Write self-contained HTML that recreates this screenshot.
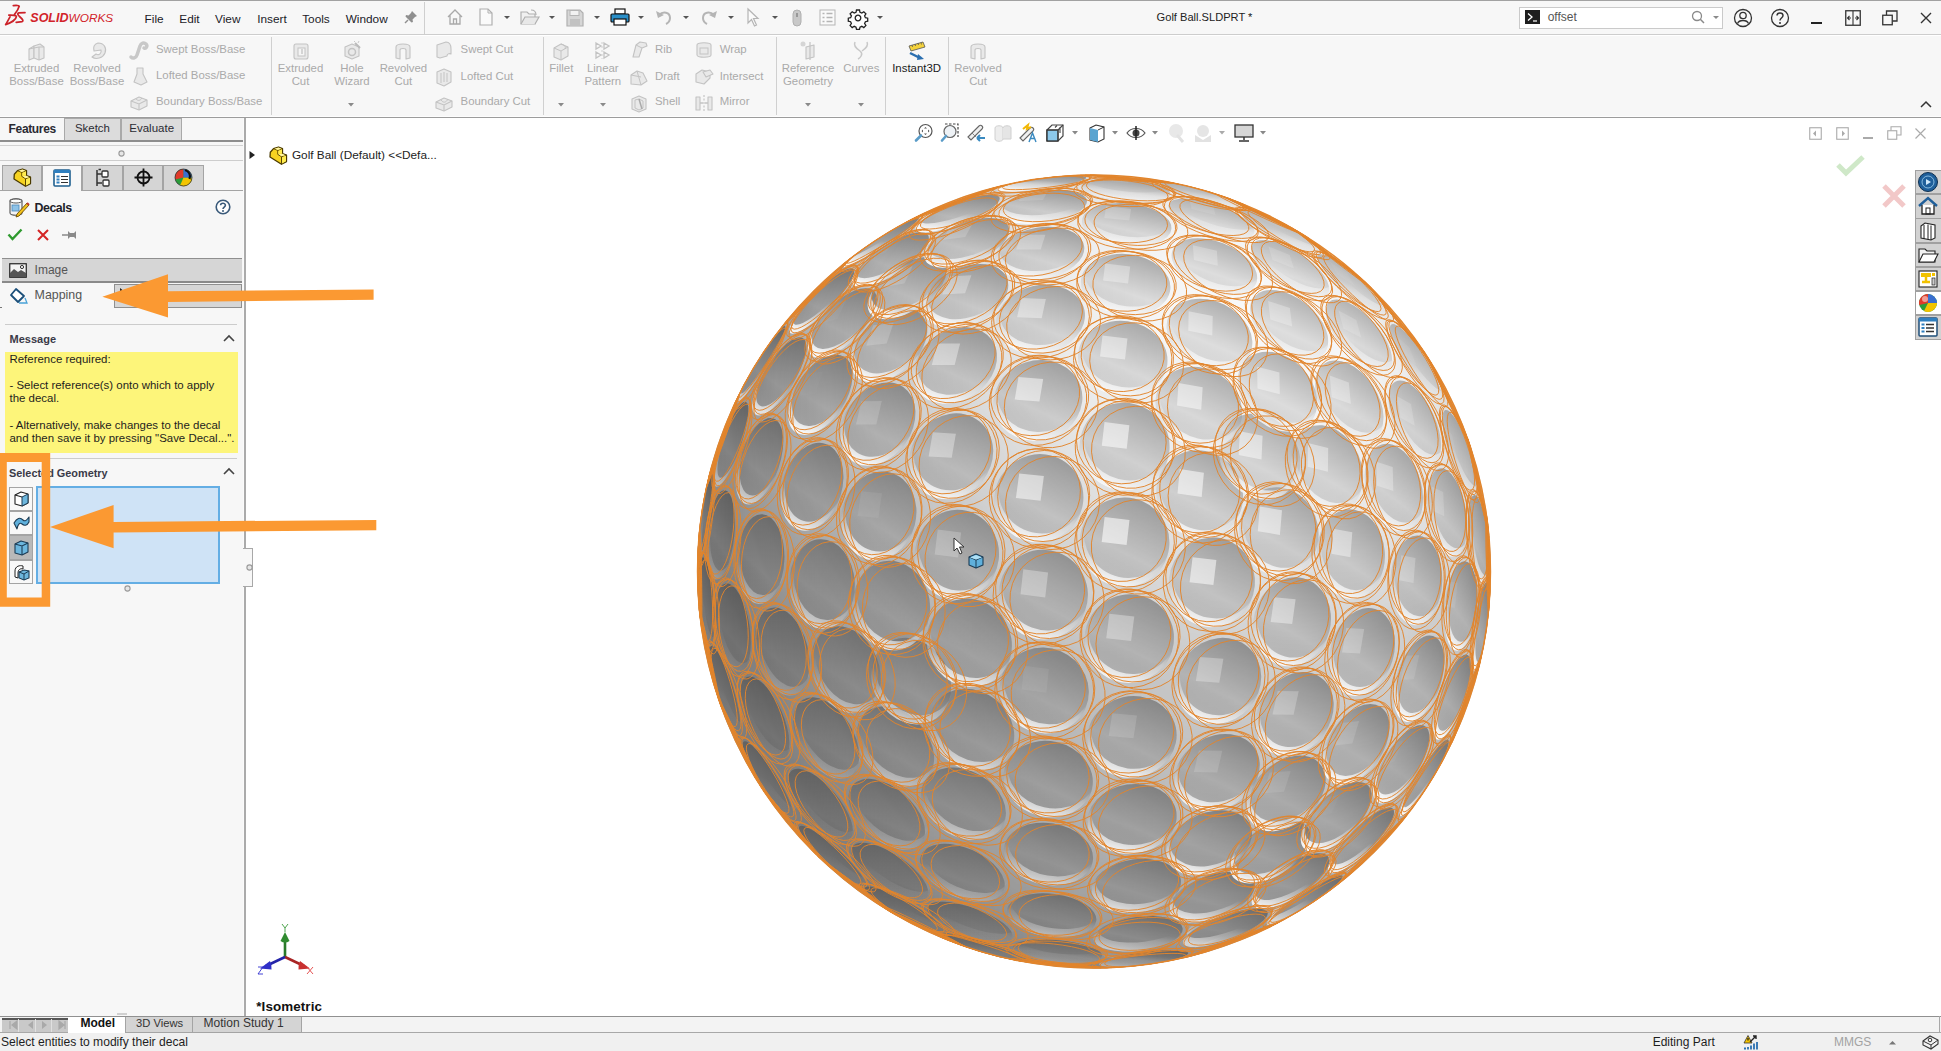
<!DOCTYPE html>
<html><head><meta charset="utf-8">
<style>
*{margin:0;padding:0;box-sizing:border-box}
html,body{width:1941px;height:1051px;overflow:hidden;background:#fff;font-family:"Liberation Sans",sans-serif;color:#222}
.a{position:absolute}
.t{position:absolute;white-space:nowrap;line-height:1}
svg{position:absolute;overflow:visible}
</style></head><body>
<svg class="a" style="left:0;top:0" width="1941" height="1051" viewBox="0 0 1941 1051">
<defs>
<radialGradient id="rg" cx="1094.0" cy="571.5" r="397.0" gradientUnits="userSpaceOnUse">
<stop offset="0.0000" stop-color="#717171"/>
<stop offset="0.0625" stop-color="#717171"/>
<stop offset="0.1250" stop-color="#717171"/>
<stop offset="0.1875" stop-color="#717171"/>
<stop offset="0.2500" stop-color="#707070"/>
<stop offset="0.3125" stop-color="#6f6f6f"/>
<stop offset="0.3750" stop-color="#6e6e6e"/>
<stop offset="0.4375" stop-color="#6d6d6d"/>
<stop offset="0.5000" stop-color="#6b6b6b"/>
<stop offset="0.5625" stop-color="#696969"/>
<stop offset="0.6250" stop-color="#676767"/>
<stop offset="0.6875" stop-color="#656565"/>
<stop offset="0.7500" stop-color="#626262"/>
<stop offset="0.8125" stop-color="#5e5e5e"/>
<stop offset="0.8750" stop-color="#595959"/>
<stop offset="0.9375" stop-color="#535353"/>
<stop offset="1.0000" stop-color="#434343"/>
</radialGradient>
<linearGradient id="lg" x1="839.8" y1="876.5" x2="1348.2" y2="266.5" gradientUnits="userSpaceOnUse"><stop offset="0" stop-color="#000"/><stop offset="1" stop-color="#757575"/></linearGradient>
<linearGradient id="bw" x1="0.75" y1="0" x2="0.25" y2="1"><stop offset="0" stop-color="#000" stop-opacity="0.25"/><stop offset="0.6" stop-color="#000" stop-opacity="0"/><stop offset="1" stop-color="#fff" stop-opacity="0.10"/></linearGradient>
<linearGradient id="cr" x1="0.65" y1="0" x2="0.35" y2="1"><stop offset="0.55" stop-color="#fff" stop-opacity="0"/><stop offset="1" stop-color="#fff" stop-opacity="0.90"/></linearGradient>
<clipPath id="cp"><circle cx="1094.0" cy="571.5" r="397.0"/></clipPath>
<filter id="bl" x="-5%" y="-5%" width="110%" height="110%"><feGaussianBlur stdDeviation="8"/></filter>
</defs>
<g clip-path="url(#cp)"><g filter="url(#bl)">
<path fill="#7e7e7e" d="M673 570h12v12h-12zM673 582h12v12h-12zM673 594h12v12h-12zM673 606h12v12h-12zM673 618h12v12h-12zM673 630h12v12h-12zM673 642h12v12h-12zM673 654h12v12h-12zM673 666h12v12h-12zM685 570h12v12h-12zM685 582h12v12h-12zM685 594h12v12h-12zM685 606h12v12h-12zM685 618h12v12h-12zM685 630h12v12h-12zM685 642h12v12h-12zM685 654h12v12h-12zM685 666h12v12h-12zM685 678h12v12h-12zM685 690h12v12h-12zM685 702h12v12h-12zM697 582h12v12h-12zM697 594h12v12h-12zM697 606h12v12h-12zM697 618h12v12h-12zM697 630h12v12h-12zM697 642h12v12h-12zM697 654h12v12h-12zM697 666h12v12h-12zM697 678h12v12h-12zM697 690h12v12h-12zM697 702h12v12h-12zM697 714h12v12h-12zM697 726h12v12h-12zM697 738h12v12h-12zM709 594h12v12h-12zM709 606h12v12h-12zM709 618h12v12h-12zM709 630h12v12h-12zM709 642h12v12h-12zM709 654h12v12h-12zM709 666h12v12h-12zM709 678h12v12h-12zM709 690h12v12h-12zM709 702h12v12h-12zM709 714h12v12h-12zM709 726h12v12h-12zM709 738h12v12h-12zM709 750h12v12h-12zM709 762h12v12h-12zM721 606h12v12h-12zM721 618h12v12h-12zM721 630h12v12h-12zM721 642h12v12h-12zM721 654h12v12h-12zM721 666h12v12h-12zM721 678h12v12h-12zM721 690h12v12h-12zM721 702h12v12h-12zM721 714h12v12h-12zM721 726h12v12h-12zM721 738h12v12h-12zM721 750h12v12h-12zM721 762h12v12h-12zM721 774h12v12h-12zM721 786h12v12h-12zM733 630h12v12h-12zM733 642h12v12h-12zM733 654h12v12h-12zM733 666h12v12h-12zM733 678h12v12h-12zM733 690h12v12h-12zM733 702h12v12h-12zM733 714h12v12h-12zM733 726h12v12h-12zM733 738h12v12h-12zM733 750h12v12h-12zM733 762h12v12h-12zM733 774h12v12h-12zM733 786h12v12h-12zM733 798h12v12h-12zM745 678h12v12h-12zM745 690h12v12h-12zM745 702h12v12h-12zM745 714h12v12h-12zM745 726h12v12h-12zM745 738h12v12h-12zM745 750h12v12h-12zM745 762h12v12h-12zM745 774h12v12h-12zM745 786h12v12h-12zM745 798h12v12h-12zM745 810h12v12h-12zM745 822h12v12h-12zM757 702h12v12h-12zM757 714h12v12h-12zM757 726h12v12h-12zM757 738h12v12h-12zM757 750h12v12h-12zM757 762h12v12h-12zM757 774h12v12h-12zM757 786h12v12h-12zM757 798h12v12h-12zM757 810h12v12h-12zM757 822h12v12h-12zM757 834h12v12h-12zM769 738h12v12h-12zM769 750h12v12h-12zM769 762h12v12h-12zM769 774h12v12h-12zM769 786h12v12h-12zM769 798h12v12h-12zM769 810h12v12h-12zM769 822h12v12h-12zM769 834h12v12h-12zM769 846h12v12h-12zM781 762h12v12h-12zM781 774h12v12h-12zM781 786h12v12h-12zM781 798h12v12h-12zM781 810h12v12h-12zM781 822h12v12h-12zM781 834h12v12h-12zM781 846h12v12h-12zM781 858h12v12h-12zM793 786h12v12h-12zM793 798h12v12h-12zM793 810h12v12h-12zM793 822h12v12h-12zM793 834h12v12h-12zM793 846h12v12h-12zM793 858h12v12h-12zM793 870h12v12h-12zM805 798h12v12h-12zM805 810h12v12h-12zM805 822h12v12h-12zM805 834h12v12h-12zM805 846h12v12h-12zM805 858h12v12h-12zM805 870h12v12h-12zM805 882h12v12h-12zM817 822h12v12h-12zM817 834h12v12h-12zM817 846h12v12h-12zM817 858h12v12h-12zM817 870h12v12h-12zM817 882h12v12h-12zM817 894h12v12h-12zM829 834h12v12h-12zM829 846h12v12h-12zM829 858h12v12h-12zM829 870h12v12h-12zM829 882h12v12h-12zM829 894h12v12h-12zM829 906h12v12h-12zM841 846h12v12h-12zM841 858h12v12h-12zM841 870h12v12h-12zM841 882h12v12h-12zM841 894h12v12h-12zM841 906h12v12h-12zM853 858h12v12h-12zM853 870h12v12h-12zM853 882h12v12h-12zM853 894h12v12h-12zM853 906h12v12h-12zM853 918h12v12h-12zM865 870h12v12h-12zM865 882h12v12h-12zM865 894h12v12h-12zM865 906h12v12h-12zM865 918h12v12h-12zM865 930h12v12h-12zM877 882h12v12h-12zM877 894h12v12h-12zM877 906h12v12h-12zM877 918h12v12h-12zM877 930h12v12h-12zM889 894h12v12h-12zM889 906h12v12h-12zM889 918h12v12h-12zM889 930h12v12h-12zM889 942h12v12h-12zM901 906h12v12h-12zM901 918h12v12h-12zM901 930h12v12h-12zM901 942h12v12h-12zM913 906h12v12h-12zM913 918h12v12h-12zM913 930h12v12h-12zM913 942h12v12h-12zM913 954h12v12h-12zM925 918h12v12h-12zM925 930h12v12h-12zM925 942h12v12h-12zM925 954h12v12h-12zM937 930h12v12h-12zM937 942h12v12h-12zM937 954h12v12h-12zM937 966h12v12h-12zM949 930h12v12h-12zM949 942h12v12h-12zM949 954h12v12h-12zM949 966h12v12h-12zM961 942h12v12h-12zM961 954h12v12h-12zM961 966h12v12h-12zM973 942h12v12h-12zM973 954h12v12h-12zM973 966h12v12h-12zM973 978h12v12h-12zM985 954h12v12h-12zM985 966h12v12h-12zM985 978h12v12h-12zM997 954h12v12h-12zM997 966h12v12h-12zM997 978h12v12h-12zM1009 954h12v12h-12zM1009 966h12v12h-12zM1009 978h12v12h-12zM1021 966h12v12h-12zM1021 978h12v12h-12zM1033 966h12v12h-12zM1033 978h12v12h-12zM1033 990h12v12h-12zM1045 966h12v12h-12zM1045 978h12v12h-12z"/>
<path fill="#808080" d="M673 558h12v12h-12zM685 558h12v12h-12zM697 570h12v12h-12zM709 582h12v12h-12zM721 582h12v12h-12zM721 594h12v12h-12zM733 606h12v12h-12zM733 618h12v12h-12zM745 654h12v12h-12zM745 666h12v12h-12zM757 690h12v12h-12zM769 726h12v12h-12zM781 750h12v12h-12zM793 774h12v12h-12zM805 786h12v12h-12zM817 810h12v12h-12zM829 822h12v12h-12zM841 834h12v12h-12zM889 882h12v12h-12zM901 894h12v12h-12zM937 918h12v12h-12zM985 942h12v12h-12zM1021 954h12v12h-12zM1045 990h12v12h-12zM1057 966h12v12h-12zM1057 978h12v12h-12zM1057 990h12v12h-12z"/>
<path fill="#828282" d="M673 534h12v12h-12zM673 546h12v12h-12zM685 534h12v12h-12zM685 546h12v12h-12zM697 546h12v12h-12zM697 558h12v12h-12zM709 558h12v12h-12zM709 570h12v12h-12zM721 570h12v12h-12zM745 630h12v12h-12zM745 642h12v12h-12zM757 678h12v12h-12zM769 714h12v12h-12zM781 738h12v12h-12zM793 762h12v12h-12zM817 798h12v12h-12zM853 846h12v12h-12zM865 858h12v12h-12zM877 870h12v12h-12zM925 906h12v12h-12zM961 930h12v12h-12zM1069 966h12v12h-12zM1069 978h12v12h-12zM1069 990h12v12h-12zM1081 966h12v12h-12zM1081 978h12v12h-12zM1081 990h12v12h-12z"/>
<path fill="#848484" d="M673 522h12v12h-12zM685 522h12v12h-12zM697 534h12v12h-12zM709 546h12v12h-12zM721 558h12v12h-12zM733 594h12v12h-12zM745 618h12v12h-12zM757 654h12v12h-12zM757 666h12v12h-12zM769 690h12v12h-12zM769 702h12v12h-12zM781 726h12v12h-12zM793 750h12v12h-12zM805 774h12v12h-12zM817 786h12v12h-12zM829 810h12v12h-12zM841 822h12v12h-12zM853 834h12v12h-12zM865 846h12v12h-12zM889 870h12v12h-12zM901 882h12v12h-12zM913 894h12v12h-12zM949 918h12v12h-12zM973 930h12v12h-12zM997 942h12v12h-12zM1033 954h12v12h-12zM1093 966h12v12h-12zM1093 978h12v12h-12zM1093 990h12v12h-12zM1105 966h12v12h-12zM1105 978h12v12h-12zM1105 990h12v12h-12z"/>
<path fill="#868686" d="M673 510h12v12h-12zM685 510h12v12h-12zM697 510h12v12h-12zM697 522h12v12h-12zM709 534h12v12h-12zM721 546h12v12h-12zM733 582h12v12h-12zM745 606h12v12h-12zM757 630h12v12h-12zM757 642h12v12h-12zM769 678h12v12h-12zM781 702h12v12h-12zM781 714h12v12h-12zM793 738h12v12h-12zM805 762h12v12h-12zM817 774h12v12h-12zM829 798h12v12h-12zM841 810h12v12h-12zM877 858h12v12h-12zM925 894h12v12h-12zM937 906h12v12h-12zM961 918h12v12h-12zM1009 942h12v12h-12zM1045 954h12v12h-12zM1117 966h12v12h-12zM1117 978h12v12h-12zM1117 990h12v12h-12z"/>
<path fill="#888888" d="M673 486h12v12h-12zM673 498h12v12h-12zM685 486h12v12h-12zM685 498h12v12h-12zM697 498h12v12h-12zM709 510h12v12h-12zM709 522h12v12h-12zM721 522h12v12h-12zM721 534h12v12h-12zM733 570h12v12h-12zM745 594h12v12h-12zM757 618h12v12h-12zM769 654h12v12h-12zM769 666h12v12h-12zM781 690h12v12h-12zM793 714h12v12h-12zM793 726h12v12h-12zM805 750h12v12h-12zM817 762h12v12h-12zM829 786h12v12h-12zM853 822h12v12h-12zM865 834h12v12h-12zM877 846h12v12h-12zM889 858h12v12h-12zM901 870h12v12h-12zM913 882h12v12h-12zM949 906h12v12h-12zM985 930h12v12h-12zM1057 954h12v12h-12zM1129 966h12v12h-12zM1129 978h12v12h-12zM1129 990h12v12h-12zM1141 966h12v12h-12zM1141 978h12v12h-12zM1141 990h12v12h-12z"/>
<path fill="#8a8a8a" d="M673 474h12v12h-12zM685 474h12v12h-12zM697 474h12v12h-12zM697 486h12v12h-12zM709 498h12v12h-12zM721 510h12v12h-12zM733 558h12v12h-12zM745 582h12v12h-12zM757 606h12v12h-12zM769 630h12v12h-12zM769 642h12v12h-12zM781 666h12v12h-12zM781 678h12v12h-12zM793 702h12v12h-12zM805 726h12v12h-12zM805 738h12v12h-12zM817 750h12v12h-12zM829 774h12v12h-12zM841 798h12v12h-12zM853 810h12v12h-12zM865 822h12v12h-12zM877 834h12v12h-12zM925 882h12v12h-12zM937 894h12v12h-12zM973 918h12v12h-12zM997 930h12v12h-12zM1021 942h12v12h-12zM1069 954h12v12h-12zM1153 966h12v12h-12zM1153 978h12v12h-12z"/>
<path fill="#8c8c8c" d="M673 462h12v12h-12zM685 462h12v12h-12zM697 462h12v12h-12zM709 474h12v12h-12zM709 486h12v12h-12zM721 498h12v12h-12zM733 546h12v12h-12zM745 570h12v12h-12zM757 594h12v12h-12zM769 618h12v12h-12zM781 654h12v12h-12zM793 690h12v12h-12zM805 714h12v12h-12zM817 738h12v12h-12zM829 762h12v12h-12zM841 786h12v12h-12zM853 798h12v12h-12zM865 810h12v12h-12zM889 846h12v12h-12zM901 858h12v12h-12zM913 870h12v12h-12zM949 894h12v12h-12zM961 906h12v12h-12zM985 918h12v12h-12zM1009 930h12v12h-12zM1033 942h12v12h-12zM1081 954h12v12h-12zM1093 954h12v12h-12zM1165 954h12v12h-12zM1165 966h12v12h-12zM1165 978h12v12h-12zM1177 954h12v12h-12zM1177 966h12v12h-12zM1177 978h12v12h-12z"/>
<path fill="#8e8e8e" d="M685 438h12v12h-12zM685 450h12v12h-12zM697 450h12v12h-12zM709 450h12v12h-12zM709 462h12v12h-12zM721 474h12v12h-12zM721 486h12v12h-12zM733 522h12v12h-12zM733 534h12v12h-12zM745 558h12v12h-12zM769 606h12v12h-12zM781 630h12v12h-12zM781 642h12v12h-12zM793 666h12v12h-12zM793 678h12v12h-12zM805 702h12v12h-12zM817 726h12v12h-12zM829 750h12v12h-12zM841 774h12v12h-12zM853 786h12v12h-12zM877 822h12v12h-12zM889 834h12v12h-12zM901 846h12v12h-12zM913 858h12v12h-12zM925 870h12v12h-12zM937 882h12v12h-12zM961 894h12v12h-12zM973 906h12v12h-12zM997 918h12v12h-12zM1021 930h12v12h-12zM1045 942h12v12h-12zM1057 942h12v12h-12zM1105 954h12v12h-12zM1117 954h12v12h-12zM1153 954h12v12h-12zM1189 954h12v12h-12zM1189 966h12v12h-12zM1189 978h12v12h-12zM1201 978h12v12h-12z"/>
<path fill="#909090" d="M685 426h12v12h-12zM697 426h12v12h-12zM697 438h12v12h-12zM709 438h12v12h-12zM721 450h12v12h-12zM721 462h12v12h-12zM733 510h12v12h-12zM745 546h12v12h-12zM757 582h12v12h-12zM769 594h12v12h-12zM781 618h12v12h-12zM793 642h12v12h-12zM793 654h12v12h-12zM805 678h12v12h-12zM805 690h12v12h-12zM817 702h12v12h-12zM817 714h12v12h-12zM829 738h12v12h-12zM841 750h12v12h-12zM841 762h12v12h-12zM853 774h12v12h-12zM865 798h12v12h-12zM877 810h12v12h-12zM889 822h12v12h-12zM901 834h12v12h-12zM913 846h12v12h-12zM925 858h12v12h-12zM937 870h12v12h-12zM949 882h12v12h-12zM985 906h12v12h-12zM1009 918h12v12h-12zM1033 930h12v12h-12zM1069 942h12v12h-12zM1129 954h12v12h-12zM1141 954h12v12h-12zM1201 954h12v12h-12zM1201 966h12v12h-12zM1213 954h12v12h-12zM1213 966h12v12h-12z"/>
<path fill="#929292" d="M697 414h12v12h-12zM709 414h12v12h-12zM709 426h12v12h-12zM721 414h12v12h-12zM721 426h12v12h-12zM721 438h12v12h-12zM733 486h12v12h-12zM733 498h12v12h-12zM745 534h12v12h-12zM757 570h12v12h-12zM781 606h12v12h-12zM793 630h12v12h-12zM805 654h12v12h-12zM805 666h12v12h-12zM817 690h12v12h-12zM829 714h12v12h-12zM829 726h12v12h-12zM841 738h12v12h-12zM853 762h12v12h-12zM865 774h12v12h-12zM865 786h12v12h-12zM877 798h12v12h-12zM889 810h12v12h-12zM901 822h12v12h-12zM949 870h12v12h-12zM961 882h12v12h-12zM973 894h12v12h-12zM997 906h12v12h-12zM1021 918h12v12h-12zM1045 930h12v12h-12zM1081 942h12v12h-12zM1213 942h12v12h-12zM1225 942h12v12h-12zM1225 954h12v12h-12zM1225 966h12v12h-12zM1237 966h12v12h-12z"/>
<path fill="#949494" d="M697 390h12v12h-12zM697 402h12v12h-12zM709 390h12v12h-12zM709 402h12v12h-12zM721 402h12v12h-12zM733 426h12v12h-12zM733 450h12v12h-12zM733 462h12v12h-12zM733 474h12v12h-12zM745 522h12v12h-12zM757 558h12v12h-12zM769 582h12v12h-12zM781 594h12v12h-12zM793 618h12v12h-12zM805 630h12v12h-12zM805 642h12v12h-12zM817 666h12v12h-12zM817 678h12v12h-12zM829 702h12v12h-12zM841 726h12v12h-12zM853 750h12v12h-12zM865 762h12v12h-12zM877 786h12v12h-12zM889 798h12v12h-12zM913 834h12v12h-12zM925 846h12v12h-12zM937 858h12v12h-12zM973 882h12v12h-12zM985 894h12v12h-12zM1009 906h12v12h-12zM1033 918h12v12h-12zM1057 930h12v12h-12zM1093 942h12v12h-12zM1105 942h12v12h-12zM1237 942h12v12h-12zM1237 954h12v12h-12zM1249 942h12v12h-12zM1249 954h12v12h-12z"/>
<path fill="#969696" d="M709 378h12v12h-12zM721 378h12v12h-12zM721 390h12v12h-12zM733 390h12v12h-12zM733 402h12v12h-12zM733 414h12v12h-12zM733 438h12v12h-12zM745 498h12v12h-12zM745 510h12v12h-12zM757 534h12v12h-12zM757 546h12v12h-12zM769 570h12v12h-12zM793 606h12v12h-12zM817 642h12v12h-12zM817 654h12v12h-12zM829 678h12v12h-12zM829 690h12v12h-12zM841 702h12v12h-12zM841 714h12v12h-12zM853 726h12v12h-12zM853 738h12v12h-12zM865 750h12v12h-12zM877 774h12v12h-12zM889 786h12v12h-12zM901 810h12v12h-12zM913 822h12v12h-12zM925 834h12v12h-12zM937 846h12v12h-12zM949 858h12v12h-12zM961 870h12v12h-12zM985 882h12v12h-12zM997 894h12v12h-12zM1021 906h12v12h-12zM1045 918h12v12h-12zM1069 930h12v12h-12zM1081 930h12v12h-12zM1117 942h12v12h-12zM1129 942h12v12h-12zM1141 942h12v12h-12zM1189 942h12v12h-12zM1201 942h12v12h-12zM1249 930h12v12h-12zM1261 930h12v12h-12zM1261 942h12v12h-12zM1261 954h12v12h-12z"/>
<path fill="#989898" d="M709 366h12v12h-12zM721 366h12v12h-12zM733 366h12v12h-12zM733 378h12v12h-12zM745 486h12v12h-12zM757 522h12v12h-12zM769 558h12v12h-12zM781 582h12v12h-12zM793 594h12v12h-12zM805 618h12v12h-12zM817 630h12v12h-12zM829 654h12v12h-12zM829 666h12v12h-12zM841 678h12v12h-12zM841 690h12v12h-12zM853 714h12v12h-12zM865 738h12v12h-12zM877 750h12v12h-12zM877 762h12v12h-12zM889 774h12v12h-12zM901 786h12v12h-12zM901 798h12v12h-12zM913 810h12v12h-12zM925 822h12v12h-12zM937 834h12v12h-12zM949 846h12v12h-12zM961 858h12v12h-12zM973 870h12v12h-12zM997 882h12v12h-12zM1009 894h12v12h-12zM1033 906h12v12h-12zM1057 918h12v12h-12zM1093 930h12v12h-12zM1153 942h12v12h-12zM1165 942h12v12h-12zM1177 942h12v12h-12zM1237 930h12v12h-12zM1273 918h12v12h-12zM1273 930h12v12h-12zM1273 942h12v12h-12zM1285 930h12v12h-12zM1285 942h12v12h-12z"/>
<path fill="#9a9a9a" d="M721 354h12v12h-12zM733 342h12v12h-12zM733 354h12v12h-12zM745 354h12v12h-12zM745 366h12v12h-12zM745 378h12v12h-12zM745 390h12v12h-12zM745 402h12v12h-12zM745 450h12v12h-12zM745 462h12v12h-12zM745 474h12v12h-12zM757 510h12v12h-12zM769 546h12v12h-12zM781 570h12v12h-12zM793 582h12v12h-12zM805 606h12v12h-12zM817 618h12v12h-12zM829 642h12v12h-12zM841 654h12v12h-12zM841 666h12v12h-12zM853 690h12v12h-12zM853 702h12v12h-12zM865 714h12v12h-12zM865 726h12v12h-12zM877 738h12v12h-12zM889 762h12v12h-12zM901 774h12v12h-12zM913 798h12v12h-12zM925 810h12v12h-12zM937 822h12v12h-12zM949 834h12v12h-12zM961 846h12v12h-12zM973 858h12v12h-12zM985 870h12v12h-12zM1009 882h12v12h-12zM1021 894h12v12h-12zM1045 906h12v12h-12zM1069 918h12v12h-12zM1081 918h12v12h-12zM1105 930h12v12h-12zM1117 930h12v12h-12zM1285 918h12v12h-12zM1297 918h12v12h-12zM1297 930h12v12h-12z"/>
<path fill="#9c9c9c" d="M733 330h12v12h-12zM745 330h12v12h-12zM745 342h12v12h-12zM745 414h12v12h-12zM745 426h12v12h-12zM745 438h12v12h-12zM757 342h12v12h-12zM757 354h12v12h-12zM757 498h12v12h-12zM769 522h12v12h-12zM769 534h12v12h-12zM781 558h12v12h-12zM793 570h12v12h-12zM805 594h12v12h-12zM817 606h12v12h-12zM829 630h12v12h-12zM841 642h12v12h-12zM853 666h12v12h-12zM853 678h12v12h-12zM865 690h12v12h-12zM865 702h12v12h-12zM877 726h12v12h-12zM889 738h12v12h-12zM889 750h12v12h-12zM901 762h12v12h-12zM913 774h12v12h-12zM913 786h12v12h-12zM925 798h12v12h-12zM937 810h12v12h-12zM949 822h12v12h-12zM961 834h12v12h-12zM973 846h12v12h-12zM985 858h12v12h-12zM997 870h12v12h-12zM1021 882h12v12h-12zM1033 894h12v12h-12zM1045 894h12v12h-12zM1057 906h12v12h-12zM1069 906h12v12h-12zM1093 918h12v12h-12zM1129 930h12v12h-12zM1141 930h12v12h-12zM1153 930h12v12h-12zM1165 930h12v12h-12zM1201 930h12v12h-12zM1213 930h12v12h-12zM1225 930h12v12h-12zM1261 918h12v12h-12zM1297 906h12v12h-12zM1309 906h12v12h-12zM1309 918h12v12h-12zM1309 930h12v12h-12zM1321 918h12v12h-12z"/>
<path fill="#9e9e9e" d="M745 318h12v12h-12zM757 318h12v12h-12zM757 330h12v12h-12zM757 366h12v12h-12zM757 474h12v12h-12zM757 486h12v12h-12zM769 330h12v12h-12zM769 510h12v12h-12zM781 546h12v12h-12zM793 558h12v12h-12zM805 582h12v12h-12zM829 618h12v12h-12zM841 630h12v12h-12zM853 642h12v12h-12zM853 654h12v12h-12zM865 678h12v12h-12zM877 702h12v12h-12zM877 714h12v12h-12zM889 726h12v12h-12zM901 750h12v12h-12zM913 762h12v12h-12zM925 786h12v12h-12zM937 798h12v12h-12zM949 810h12v12h-12zM961 822h12v12h-12zM973 834h12v12h-12zM985 846h12v12h-12zM997 858h12v12h-12zM1009 870h12v12h-12zM1021 870h12v12h-12zM1033 882h12v12h-12zM1057 894h12v12h-12zM1081 906h12v12h-12zM1105 918h12v12h-12zM1117 918h12v12h-12zM1177 930h12v12h-12zM1189 930h12v12h-12zM1309 894h12v12h-12zM1321 894h12v12h-12zM1321 906h12v12h-12zM1333 906h12v12h-12z"/>
<path fill="#a0a0a0" d="M757 294h12v12h-12zM757 306h12v12h-12zM757 378h12v12h-12zM757 438h12v12h-12zM757 450h12v12h-12zM757 462h12v12h-12zM769 306h12v12h-12zM769 318h12v12h-12zM769 498h12v12h-12zM781 522h12v12h-12zM781 534h12v12h-12zM793 546h12v12h-12zM805 570h12v12h-12zM817 594h12v12h-12zM829 606h12v12h-12zM841 618h12v12h-12zM865 654h12v12h-12zM865 666h12v12h-12zM877 678h12v12h-12zM877 690h12v12h-12zM889 702h12v12h-12zM889 714h12v12h-12zM901 726h12v12h-12zM901 738h12v12h-12zM913 750h12v12h-12zM925 762h12v12h-12zM925 774h12v12h-12zM937 786h12v12h-12zM949 798h12v12h-12zM961 810h12v12h-12zM973 822h12v12h-12zM985 834h12v12h-12zM997 846h12v12h-12zM1009 858h12v12h-12zM1033 870h12v12h-12zM1045 882h12v12h-12zM1069 894h12v12h-12zM1093 906h12v12h-12zM1105 906h12v12h-12zM1129 918h12v12h-12zM1141 918h12v12h-12zM1153 918h12v12h-12zM1237 918h12v12h-12zM1249 918h12v12h-12zM1285 906h12v12h-12zM1333 882h12v12h-12zM1333 894h12v12h-12zM1345 894h12v12h-12zM1345 906h12v12h-12z"/>
<path fill="#a2a2a2" d="M757 390h12v12h-12zM757 402h12v12h-12zM757 414h12v12h-12zM757 426h12v12h-12zM769 282h12v12h-12zM769 294h12v12h-12zM769 342h12v12h-12zM769 474h12v12h-12zM769 486h12v12h-12zM781 282h12v12h-12zM781 294h12v12h-12zM781 306h12v12h-12zM781 318h12v12h-12zM781 510h12v12h-12zM793 294h12v12h-12zM793 534h12v12h-12zM805 558h12v12h-12zM817 582h12v12h-12zM829 594h12v12h-12zM853 630h12v12h-12zM865 642h12v12h-12zM877 654h12v12h-12zM877 666h12v12h-12zM889 678h12v12h-12zM889 690h12v12h-12zM901 702h12v12h-12zM901 714h12v12h-12zM913 726h12v12h-12zM913 738h12v12h-12zM925 750h12v12h-12zM937 762h12v12h-12zM937 774h12v12h-12zM949 786h12v12h-12zM961 798h12v12h-12zM973 810h12v12h-12zM985 822h12v12h-12zM997 834h12v12h-12zM1009 846h12v12h-12zM1021 858h12v12h-12zM1033 858h12v12h-12zM1045 870h12v12h-12zM1057 882h12v12h-12zM1069 882h12v12h-12zM1081 894h12v12h-12zM1093 894h12v12h-12zM1117 906h12v12h-12zM1129 906h12v12h-12zM1165 918h12v12h-12zM1177 918h12v12h-12zM1189 918h12v12h-12zM1201 918h12v12h-12zM1213 918h12v12h-12zM1225 918h12v12h-12zM1273 906h12v12h-12zM1345 870h12v12h-12zM1345 882h12v12h-12zM1357 870h12v12h-12zM1357 882h12v12h-12zM1357 894h12v12h-12zM1369 882h12v12h-12z"/>
<path fill="#a4a4a4" d="M769 354h12v12h-12zM769 450h12v12h-12zM769 462h12v12h-12zM781 270h12v12h-12zM781 498h12v12h-12zM793 282h12v12h-12zM793 522h12v12h-12zM805 546h12v12h-12zM817 570h12v12h-12zM829 582h12v12h-12zM841 606h12v12h-12zM853 618h12v12h-12zM865 630h12v12h-12zM877 642h12v12h-12zM889 654h12v12h-12zM889 666h12v12h-12zM901 690h12v12h-12zM913 714h12v12h-12zM925 726h12v12h-12zM925 738h12v12h-12zM937 750h12v12h-12zM949 762h12v12h-12zM949 774h12v12h-12zM961 786h12v12h-12zM973 798h12v12h-12zM985 810h12v12h-12zM997 822h12v12h-12zM1009 834h12v12h-12zM1021 846h12v12h-12zM1045 858h12v12h-12zM1057 870h12v12h-12zM1081 882h12v12h-12zM1105 894h12v12h-12zM1117 894h12v12h-12zM1141 906h12v12h-12zM1153 906h12v12h-12zM1165 906h12v12h-12zM1261 906h12v12h-12zM1297 894h12v12h-12zM1321 882h12v12h-12zM1357 858h12v12h-12zM1369 858h12v12h-12zM1369 870h12v12h-12zM1381 870h12v12h-12z"/>
<path fill="#a6a6a6" d="M769 366h12v12h-12zM769 378h12v12h-12zM769 390h12v12h-12zM769 414h12v12h-12zM769 426h12v12h-12zM769 438h12v12h-12zM781 330h12v12h-12zM781 474h12v12h-12zM781 486h12v12h-12zM793 258h12v12h-12zM793 270h12v12h-12zM793 306h12v12h-12zM793 510h12v12h-12zM805 270h12v12h-12zM805 282h12v12h-12zM805 534h12v12h-12zM817 558h12v12h-12zM829 570h12v12h-12zM841 594h12v12h-12zM853 606h12v12h-12zM865 618h12v12h-12zM877 630h12v12h-12zM889 642h12v12h-12zM901 654h12v12h-12zM901 666h12v12h-12zM901 678h12v12h-12zM913 690h12v12h-12zM913 702h12v12h-12zM925 714h12v12h-12zM937 726h12v12h-12zM937 738h12v12h-12zM949 750h12v12h-12zM961 762h12v12h-12zM961 774h12v12h-12zM973 786h12v12h-12zM985 798h12v12h-12zM997 810h12v12h-12zM1009 822h12v12h-12zM1021 834h12v12h-12zM1033 846h12v12h-12zM1045 846h12v12h-12zM1057 858h12v12h-12zM1069 870h12v12h-12zM1081 870h12v12h-12zM1093 882h12v12h-12zM1105 882h12v12h-12zM1129 894h12v12h-12zM1141 894h12v12h-12zM1177 906h12v12h-12zM1189 906h12v12h-12zM1201 906h12v12h-12zM1213 906h12v12h-12zM1225 906h12v12h-12zM1237 906h12v12h-12zM1249 906h12v12h-12zM1285 894h12v12h-12zM1369 846h12v12h-12zM1381 846h12v12h-12zM1381 858h12v12h-12zM1393 846h12v12h-12zM1393 858h12v12h-12z"/>
<path fill="#a8a8a8" d="M769 402h12v12h-12zM781 462h12v12h-12zM793 498h12v12h-12zM805 258h12v12h-12zM805 522h12v12h-12zM817 270h12v12h-12zM817 546h12v12h-12zM829 558h12v12h-12zM841 582h12v12h-12zM853 594h12v12h-12zM865 606h12v12h-12zM877 618h12v12h-12zM901 642h12v12h-12zM913 666h12v12h-12zM913 678h12v12h-12zM925 690h12v12h-12zM925 702h12v12h-12zM937 714h12v12h-12zM949 726h12v12h-12zM949 738h12v12h-12zM961 750h12v12h-12zM973 762h12v12h-12zM973 774h12v12h-12zM985 786h12v12h-12zM997 798h12v12h-12zM1009 810h12v12h-12zM1021 822h12v12h-12zM1033 834h12v12h-12zM1045 834h12v12h-12zM1057 846h12v12h-12zM1069 858h12v12h-12zM1081 858h12v12h-12zM1093 870h12v12h-12zM1105 870h12v12h-12zM1117 882h12v12h-12zM1129 882h12v12h-12zM1153 894h12v12h-12zM1165 894h12v12h-12zM1177 894h12v12h-12zM1261 894h12v12h-12zM1273 894h12v12h-12zM1309 882h12v12h-12zM1333 870h12v12h-12zM1381 834h12v12h-12zM1393 822h12v12h-12zM1393 834h12v12h-12zM1405 834h12v12h-12zM1405 846h12v12h-12z"/>
<path fill="#aaaaaa" d="M781 342h12v12h-12zM781 354h12v12h-12zM781 426h12v12h-12zM781 438h12v12h-12zM781 450h12v12h-12zM793 474h12v12h-12zM793 486h12v12h-12zM805 246h12v12h-12zM805 294h12v12h-12zM805 510h12v12h-12zM817 258h12v12h-12zM817 534h12v12h-12zM829 546h12v12h-12zM841 570h12v12h-12zM853 582h12v12h-12zM865 594h12v12h-12zM889 630h12v12h-12zM913 654h12v12h-12zM925 666h12v12h-12zM925 678h12v12h-12zM937 690h12v12h-12zM937 702h12v12h-12zM949 714h12v12h-12zM961 726h12v12h-12zM961 738h12v12h-12zM973 750h12v12h-12zM985 762h12v12h-12zM985 774h12v12h-12zM997 774h12v12h-12zM997 786h12v12h-12zM1009 786h12v12h-12zM1009 798h12v12h-12zM1021 798h12v12h-12zM1021 810h12v12h-12zM1033 810h12v12h-12zM1033 822h12v12h-12zM1045 822h12v12h-12zM1057 834h12v12h-12zM1069 846h12v12h-12zM1081 846h12v12h-12zM1093 858h12v12h-12zM1117 870h12v12h-12zM1141 882h12v12h-12zM1153 882h12v12h-12zM1189 894h12v12h-12zM1201 894h12v12h-12zM1213 894h12v12h-12zM1225 894h12v12h-12zM1237 894h12v12h-12zM1249 894h12v12h-12zM1297 882h12v12h-12zM1345 858h12v12h-12zM1405 810h12v12h-12zM1405 822h12v12h-12zM1417 810h12v12h-12zM1417 822h12v12h-12zM1417 834h12v12h-12zM1429 822h12v12h-12z"/>
<path fill="#acacac" d="M781 366h12v12h-12zM781 378h12v12h-12zM781 390h12v12h-12zM781 402h12v12h-12zM781 414h12v12h-12zM793 318h12v12h-12zM793 462h12v12h-12zM805 486h12v12h-12zM805 498h12v12h-12zM817 234h12v12h-12zM817 246h12v12h-12zM817 522h12v12h-12zM829 258h12v12h-12zM829 534h12v12h-12zM841 558h12v12h-12zM853 570h12v12h-12zM877 606h12v12h-12zM889 618h12v12h-12zM901 630h12v12h-12zM913 642h12v12h-12zM925 654h12v12h-12zM937 666h12v12h-12zM937 678h12v12h-12zM949 690h12v12h-12zM949 702h12v12h-12zM961 714h12v12h-12zM973 726h12v12h-12zM973 738h12v12h-12zM985 750h12v12h-12zM997 762h12v12h-12zM1009 774h12v12h-12zM1021 786h12v12h-12zM1033 798h12v12h-12zM1045 810h12v12h-12zM1057 822h12v12h-12zM1069 834h12v12h-12zM1081 834h12v12h-12zM1093 846h12v12h-12zM1105 858h12v12h-12zM1117 858h12v12h-12zM1129 870h12v12h-12zM1141 870h12v12h-12zM1153 870h12v12h-12zM1165 882h12v12h-12zM1177 882h12v12h-12zM1189 882h12v12h-12zM1201 882h12v12h-12zM1261 882h12v12h-12zM1273 882h12v12h-12zM1285 882h12v12h-12zM1321 870h12v12h-12zM1357 846h12v12h-12zM1417 798h12v12h-12zM1429 798h12v12h-12zM1429 810h12v12h-12zM1441 798h12v12h-12z"/>
<path fill="#aeaeae" d="M793 330h12v12h-12zM793 426h12v12h-12zM793 438h12v12h-12zM793 450h12v12h-12zM805 474h12v12h-12zM817 282h12v12h-12zM817 498h12v12h-12zM817 510h12v12h-12zM829 234h12v12h-12zM829 246h12v12h-12zM829 522h12v12h-12zM841 246h12v12h-12zM841 546h12v12h-12zM853 558h12v12h-12zM865 582h12v12h-12zM877 594h12v12h-12zM889 606h12v12h-12zM901 618h12v12h-12zM913 630h12v12h-12zM925 642h12v12h-12zM937 654h12v12h-12zM949 666h12v12h-12zM949 678h12v12h-12zM961 690h12v12h-12zM961 702h12v12h-12zM973 702h12v12h-12zM973 714h12v12h-12zM985 726h12v12h-12zM985 738h12v12h-12zM997 738h12v12h-12zM997 750h12v12h-12zM1009 762h12v12h-12zM1021 774h12v12h-12zM1033 786h12v12h-12zM1045 798h12v12h-12zM1057 810h12v12h-12zM1069 822h12v12h-12zM1081 822h12v12h-12zM1093 834h12v12h-12zM1105 846h12v12h-12zM1117 846h12v12h-12zM1129 858h12v12h-12zM1141 858h12v12h-12zM1165 870h12v12h-12zM1177 870h12v12h-12zM1189 870h12v12h-12zM1213 882h12v12h-12zM1225 882h12v12h-12zM1237 882h12v12h-12zM1249 882h12v12h-12zM1297 870h12v12h-12zM1309 870h12v12h-12zM1333 858h12v12h-12zM1369 834h12v12h-12zM1417 786h12v12h-12zM1429 774h12v12h-12zM1429 786h12v12h-12zM1441 774h12v12h-12zM1441 786h12v12h-12zM1453 786h12v12h-12z"/>
<path fill="#b0b0b0" d="M793 342h12v12h-12zM793 354h12v12h-12zM793 366h12v12h-12zM793 378h12v12h-12zM793 390h12v12h-12zM793 402h12v12h-12zM793 414h12v12h-12zM805 306h12v12h-12zM805 450h12v12h-12zM805 462h12v12h-12zM817 486h12v12h-12zM829 270h12v12h-12zM829 510h12v12h-12zM841 234h12v12h-12zM841 534h12v12h-12zM853 246h12v12h-12zM853 546h12v12h-12zM865 570h12v12h-12zM877 582h12v12h-12zM889 594h12v12h-12zM901 606h12v12h-12zM913 618h12v12h-12zM925 630h12v12h-12zM937 642h12v12h-12zM949 654h12v12h-12zM961 666h12v12h-12zM961 678h12v12h-12zM973 678h12v12h-12zM973 690h12v12h-12zM985 702h12v12h-12zM985 714h12v12h-12zM997 726h12v12h-12zM1009 738h12v12h-12zM1009 750h12v12h-12zM1021 750h12v12h-12zM1021 762h12v12h-12zM1033 774h12v12h-12zM1045 786h12v12h-12zM1057 798h12v12h-12zM1069 798h12v12h-12zM1069 810h12v12h-12zM1081 810h12v12h-12zM1093 822h12v12h-12zM1105 834h12v12h-12zM1117 834h12v12h-12zM1129 846h12v12h-12zM1141 846h12v12h-12zM1153 858h12v12h-12zM1165 858h12v12h-12zM1177 858h12v12h-12zM1201 870h12v12h-12zM1213 870h12v12h-12zM1225 870h12v12h-12zM1237 870h12v12h-12zM1249 870h12v12h-12zM1261 870h12v12h-12zM1273 870h12v12h-12zM1285 870h12v12h-12zM1309 858h12v12h-12zM1321 858h12v12h-12zM1345 846h12v12h-12zM1381 822h12v12h-12zM1393 810h12v12h-12zM1405 798h12v12h-12zM1441 750h12v12h-12zM1441 762h12v12h-12zM1453 750h12v12h-12zM1453 762h12v12h-12zM1453 774h12v12h-12zM1465 762h12v12h-12z"/>
<path fill="#b2b2b2" d="M805 318h12v12h-12zM805 426h12v12h-12zM805 438h12v12h-12zM817 294h12v12h-12zM817 462h12v12h-12zM817 474h12v12h-12zM829 498h12v12h-12zM841 222h12v12h-12zM841 258h12v12h-12zM841 522h12v12h-12zM853 234h12v12h-12zM853 534h12v12h-12zM865 558h12v12h-12zM877 570h12v12h-12zM889 582h12v12h-12zM901 594h12v12h-12zM913 606h12v12h-12zM925 618h12v12h-12zM937 630h12v12h-12zM949 642h12v12h-12zM961 654h12v12h-12zM973 666h12v12h-12zM985 678h12v12h-12zM985 690h12v12h-12zM997 702h12v12h-12zM997 714h12v12h-12zM1009 714h12v12h-12zM1009 726h12v12h-12zM1021 738h12v12h-12zM1033 750h12v12h-12zM1033 762h12v12h-12zM1045 762h12v12h-12zM1045 774h12v12h-12zM1057 774h12v12h-12zM1057 786h12v12h-12zM1069 786h12v12h-12zM1081 798h12v12h-12zM1093 810h12v12h-12zM1105 822h12v12h-12zM1117 822h12v12h-12zM1129 834h12v12h-12zM1141 834h12v12h-12zM1153 846h12v12h-12zM1165 846h12v12h-12zM1189 858h12v12h-12zM1201 858h12v12h-12zM1213 858h12v12h-12zM1225 858h12v12h-12zM1273 858h12v12h-12zM1285 858h12v12h-12zM1297 858h12v12h-12zM1333 846h12v12h-12zM1357 834h12v12h-12zM1453 726h12v12h-12zM1453 738h12v12h-12zM1465 726h12v12h-12zM1465 738h12v12h-12zM1465 750h12v12h-12zM1477 738h12v12h-12z"/>
<path fill="#b4b4b4" d="M805 330h12v12h-12zM805 342h12v12h-12zM805 354h12v12h-12zM805 378h12v12h-12zM805 390h12v12h-12zM805 402h12v12h-12zM805 414h12v12h-12zM817 450h12v12h-12zM829 474h12v12h-12zM829 486h12v12h-12zM841 498h12v12h-12zM841 510h12v12h-12zM853 210h12v12h-12zM853 222h12v12h-12zM853 522h12v12h-12zM865 222h12v12h-12zM865 234h12v12h-12zM865 546h12v12h-12zM877 558h12v12h-12zM889 570h12v12h-12zM901 582h12v12h-12zM913 594h12v12h-12zM925 606h12v12h-12zM937 618h12v12h-12zM949 630h12v12h-12zM961 642h12v12h-12zM973 654h12v12h-12zM985 666h12v12h-12zM997 678h12v12h-12zM997 690h12v12h-12zM1009 702h12v12h-12zM1021 714h12v12h-12zM1021 726h12v12h-12zM1033 726h12v12h-12zM1033 738h12v12h-12zM1045 750h12v12h-12zM1057 762h12v12h-12zM1069 774h12v12h-12zM1081 786h12v12h-12zM1093 798h12v12h-12zM1105 798h12v12h-12zM1105 810h12v12h-12zM1117 810h12v12h-12zM1129 822h12v12h-12zM1141 822h12v12h-12zM1153 834h12v12h-12zM1165 834h12v12h-12zM1177 846h12v12h-12zM1189 846h12v12h-12zM1201 846h12v12h-12zM1213 846h12v12h-12zM1237 858h12v12h-12zM1249 858h12v12h-12zM1261 858h12v12h-12zM1309 846h12v12h-12zM1321 846h12v12h-12zM1345 834h12v12h-12zM1369 822h12v12h-12zM1381 810h12v12h-12zM1429 762h12v12h-12zM1465 702h12v12h-12zM1465 714h12v12h-12zM1477 702h12v12h-12zM1477 714h12v12h-12zM1477 726h12v12h-12zM1489 714h12v12h-12z"/>
<path fill="#b6b6b6" d="M805 366h12v12h-12zM817 306h12v12h-12zM817 426h12v12h-12zM817 438h12v12h-12zM829 282h12v12h-12zM829 462h12v12h-12zM841 486h12v12h-12zM853 510h12v12h-12zM865 210h12v12h-12zM865 534h12v12h-12zM877 222h12v12h-12zM877 546h12v12h-12zM889 558h12v12h-12zM901 570h12v12h-12zM937 606h12v12h-12zM949 618h12v12h-12zM961 630h12v12h-12zM973 642h12v12h-12zM985 654h12v12h-12zM997 654h12v12h-12zM997 666h12v12h-12zM1009 678h12v12h-12zM1009 690h12v12h-12zM1021 690h12v12h-12zM1021 702h12v12h-12zM1033 714h12v12h-12zM1045 726h12v12h-12zM1045 738h12v12h-12zM1057 738h12v12h-12zM1057 750h12v12h-12zM1069 750h12v12h-12zM1069 762h12v12h-12zM1081 762h12v12h-12zM1081 774h12v12h-12zM1093 774h12v12h-12zM1093 786h12v12h-12zM1105 786h12v12h-12zM1117 798h12v12h-12zM1129 810h12v12h-12zM1141 810h12v12h-12zM1153 822h12v12h-12zM1165 822h12v12h-12zM1177 834h12v12h-12zM1189 834h12v12h-12zM1201 834h12v12h-12zM1225 846h12v12h-12zM1237 846h12v12h-12zM1249 846h12v12h-12zM1261 846h12v12h-12zM1273 846h12v12h-12zM1285 846h12v12h-12zM1297 846h12v12h-12zM1321 834h12v12h-12zM1333 834h12v12h-12zM1357 822h12v12h-12zM1393 798h12v12h-12zM1405 786h12v12h-12zM1417 774h12v12h-12zM1441 738h12v12h-12zM1465 690h12v12h-12zM1477 678h12v12h-12zM1477 690h12v12h-12zM1489 678h12v12h-12zM1489 690h12v12h-12zM1489 702h12v12h-12zM1501 678h12v12h-12z"/>
<path fill="#b8b8b8" d="M817 318h12v12h-12zM817 330h12v12h-12zM817 342h12v12h-12zM817 378h12v12h-12zM817 390h12v12h-12zM817 402h12v12h-12zM817 414h12v12h-12zM829 294h12v12h-12zM829 438h12v12h-12zM829 450h12v12h-12zM841 270h12v12h-12zM841 474h12v12h-12zM853 498h12v12h-12zM865 510h12v12h-12zM865 522h12v12h-12zM877 198h12v12h-12zM877 210h12v12h-12zM877 534h12v12h-12zM889 222h12v12h-12zM889 546h12v12h-12zM901 558h12v12h-12zM913 582h12v12h-12zM925 594h12v12h-12zM961 618h12v12h-12zM973 630h12v12h-12zM985 642h12v12h-12zM1009 654h12v12h-12zM1009 666h12v12h-12zM1021 666h12v12h-12zM1021 678h12v12h-12zM1033 690h12v12h-12zM1033 702h12v12h-12zM1045 702h12v12h-12zM1045 714h12v12h-12zM1057 726h12v12h-12zM1069 738h12v12h-12zM1081 750h12v12h-12zM1093 762h12v12h-12zM1105 774h12v12h-12zM1117 786h12v12h-12zM1129 786h12v12h-12zM1129 798h12v12h-12zM1141 798h12v12h-12zM1153 810h12v12h-12zM1165 810h12v12h-12zM1177 822h12v12h-12zM1189 822h12v12h-12zM1201 822h12v12h-12zM1213 834h12v12h-12zM1225 834h12v12h-12zM1237 834h12v12h-12zM1249 834h12v12h-12zM1261 834h12v12h-12zM1273 834h12v12h-12zM1285 834h12v12h-12zM1297 834h12v12h-12zM1309 834h12v12h-12zM1333 822h12v12h-12zM1345 822h12v12h-12zM1357 810h12v12h-12zM1369 810h12v12h-12zM1381 798h12v12h-12zM1429 750h12v12h-12zM1453 714h12v12h-12zM1477 642h12v12h-12zM1477 654h12v12h-12zM1477 666h12v12h-12zM1489 642h12v12h-12zM1489 654h12v12h-12zM1489 666h12v12h-12zM1501 642h12v12h-12zM1501 654h12v12h-12zM1501 666h12v12h-12z"/>
<path fill="#bababa" d="M817 354h12v12h-12zM817 366h12v12h-12zM829 306h12v12h-12zM829 414h12v12h-12zM829 426h12v12h-12zM841 450h12v12h-12zM841 462h12v12h-12zM853 258h12v12h-12zM853 474h12v12h-12zM853 486h12v12h-12zM865 498h12v12h-12zM877 522h12v12h-12zM889 198h12v12h-12zM889 210h12v12h-12zM889 534h12v12h-12zM901 546h12v12h-12zM913 570h12v12h-12zM925 582h12v12h-12zM937 594h12v12h-12zM949 606h12v12h-12zM973 618h12v12h-12zM985 630h12v12h-12zM997 642h12v12h-12zM1021 654h12v12h-12zM1033 666h12v12h-12zM1033 678h12v12h-12zM1045 678h12v12h-12zM1045 690h12v12h-12zM1057 702h12v12h-12zM1057 714h12v12h-12zM1069 714h12v12h-12zM1069 726h12v12h-12zM1081 726h12v12h-12zM1081 738h12v12h-12zM1093 738h12v12h-12zM1093 750h12v12h-12zM1105 750h12v12h-12zM1105 762h12v12h-12zM1117 762h12v12h-12zM1117 774h12v12h-12zM1129 774h12v12h-12zM1141 786h12v12h-12zM1153 786h12v12h-12zM1153 798h12v12h-12zM1165 798h12v12h-12zM1177 798h12v12h-12zM1177 810h12v12h-12zM1189 810h12v12h-12zM1201 810h12v12h-12zM1213 822h12v12h-12zM1225 822h12v12h-12zM1237 822h12v12h-12zM1249 822h12v12h-12zM1261 822h12v12h-12zM1273 822h12v12h-12zM1285 822h12v12h-12zM1297 822h12v12h-12zM1309 822h12v12h-12zM1321 822h12v12h-12zM1345 810h12v12h-12zM1369 798h12v12h-12zM1393 786h12v12h-12zM1405 774h12v12h-12zM1417 762h12v12h-12zM1441 726h12v12h-12zM1465 678h12v12h-12zM1489 594h12v12h-12zM1489 606h12v12h-12zM1489 618h12v12h-12zM1489 630h12v12h-12zM1501 594h12v12h-12zM1501 606h12v12h-12zM1501 618h12v12h-12zM1501 630h12v12h-12zM1513 594h12v12h-12zM1513 606h12v12h-12zM1513 618h12v12h-12z"/>
<path fill="#bcbcbc" d="M829 318h12v12h-12zM829 330h12v12h-12zM829 342h12v12h-12zM829 366h12v12h-12zM829 378h12v12h-12zM829 390h12v12h-12zM829 402h12v12h-12zM841 282h12v12h-12zM841 426h12v12h-12zM841 438h12v12h-12zM853 462h12v12h-12zM865 246h12v12h-12zM865 486h12v12h-12zM877 234h12v12h-12zM877 510h12v12h-12zM889 186h12v12h-12zM889 522h12v12h-12zM901 198h12v12h-12zM901 210h12v12h-12zM901 534h12v12h-12zM913 558h12v12h-12zM925 570h12v12h-12zM937 582h12v12h-12zM949 594h12v12h-12zM961 606h12v12h-12zM973 606h12v12h-12zM985 618h12v12h-12zM997 630h12v12h-12zM1009 642h12v12h-12zM1021 642h12v12h-12zM1033 654h12v12h-12zM1045 666h12v12h-12zM1057 678h12v12h-12zM1057 690h12v12h-12zM1069 690h12v12h-12zM1069 702h12v12h-12zM1081 702h12v12h-12zM1081 714h12v12h-12zM1093 726h12v12h-12zM1105 738h12v12h-12zM1117 750h12v12h-12zM1129 750h12v12h-12zM1129 762h12v12h-12zM1141 762h12v12h-12zM1141 774h12v12h-12zM1153 774h12v12h-12zM1165 786h12v12h-12zM1177 786h12v12h-12zM1189 798h12v12h-12zM1201 798h12v12h-12zM1213 798h12v12h-12zM1213 810h12v12h-12zM1225 810h12v12h-12zM1237 810h12v12h-12zM1249 810h12v12h-12zM1261 810h12v12h-12zM1273 810h12v12h-12zM1285 810h12v12h-12zM1297 810h12v12h-12zM1309 810h12v12h-12zM1321 810h12v12h-12zM1333 810h12v12h-12zM1345 798h12v12h-12zM1357 798h12v12h-12zM1369 786h12v12h-12zM1381 786h12v12h-12zM1393 774h12v12h-12zM1405 762h12v12h-12zM1417 750h12v12h-12zM1429 738h12v12h-12zM1453 702h12v12h-12zM1477 630h12v12h-12zM1489 570h12v12h-12zM1489 582h12v12h-12zM1501 570h12v12h-12zM1501 582h12v12h-12zM1513 570h12v12h-12zM1513 582h12v12h-12z"/>
<path fill="#bebebe" d="M829 354h12v12h-12zM841 294h12v12h-12zM841 402h12v12h-12zM841 414h12v12h-12zM853 270h12v12h-12zM853 438h12v12h-12zM853 450h12v12h-12zM865 462h12v12h-12zM865 474h12v12h-12zM877 486h12v12h-12zM877 498h12v12h-12zM889 510h12v12h-12zM901 186h12v12h-12zM901 522h12v12h-12zM913 186h12v12h-12zM913 198h12v12h-12zM913 210h12v12h-12zM913 546h12v12h-12zM925 558h12v12h-12zM937 570h12v12h-12zM949 582h12v12h-12zM961 594h12v12h-12zM985 606h12v12h-12zM997 618h12v12h-12zM1009 630h12v12h-12zM1033 642h12v12h-12zM1045 654h12v12h-12zM1057 654h12v12h-12zM1057 666h12v12h-12zM1069 666h12v12h-12zM1069 678h12v12h-12zM1081 678h12v12h-12zM1081 690h12v12h-12zM1093 702h12v12h-12zM1093 714h12v12h-12zM1105 714h12v12h-12zM1105 726h12v12h-12zM1117 726h12v12h-12zM1117 738h12v12h-12zM1129 738h12v12h-12zM1141 750h12v12h-12zM1153 750h12v12h-12zM1153 762h12v12h-12zM1165 762h12v12h-12zM1165 774h12v12h-12zM1177 774h12v12h-12zM1189 774h12v12h-12zM1189 786h12v12h-12zM1201 786h12v12h-12zM1213 786h12v12h-12zM1225 798h12v12h-12zM1237 798h12v12h-12zM1249 798h12v12h-12zM1261 798h12v12h-12zM1273 798h12v12h-12zM1285 798h12v12h-12zM1297 798h12v12h-12zM1309 798h12v12h-12zM1321 798h12v12h-12zM1333 798h12v12h-12zM1357 786h12v12h-12zM1381 774h12v12h-12zM1393 762h12v12h-12zM1429 726h12v12h-12zM1441 714h12v12h-12zM1453 690h12v12h-12zM1465 666h12v12h-12zM1489 558h12v12h-12zM1501 558h12v12h-12zM1513 558h12v12h-12z"/>
<path fill="#c0c0c0" d="M841 306h12v12h-12zM841 318h12v12h-12zM841 330h12v12h-12zM841 342h12v12h-12zM841 354h12v12h-12zM841 366h12v12h-12zM841 378h12v12h-12zM841 390h12v12h-12zM853 282h12v12h-12zM853 414h12v12h-12zM853 426h12v12h-12zM865 258h12v12h-12zM865 450h12v12h-12zM877 474h12v12h-12zM889 498h12v12h-12zM901 510h12v12h-12zM913 522h12v12h-12zM913 534h12v12h-12zM925 186h12v12h-12zM925 198h12v12h-12zM925 546h12v12h-12zM937 558h12v12h-12zM949 570h12v12h-12zM961 582h12v12h-12zM973 594h12v12h-12zM997 606h12v12h-12zM1009 618h12v12h-12zM1021 630h12v12h-12zM1033 630h12v12h-12zM1045 642h12v12h-12zM1069 654h12v12h-12zM1081 666h12v12h-12zM1093 678h12v12h-12zM1093 690h12v12h-12zM1105 690h12v12h-12zM1105 702h12v12h-12zM1117 702h12v12h-12zM1117 714h12v12h-12zM1129 714h12v12h-12zM1129 726h12v12h-12zM1141 726h12v12h-12zM1141 738h12v12h-12zM1153 738h12v12h-12zM1165 750h12v12h-12zM1177 750h12v12h-12zM1177 762h12v12h-12zM1189 762h12v12h-12zM1201 762h12v12h-12zM1201 774h12v12h-12zM1213 774h12v12h-12zM1225 774h12v12h-12zM1225 786h12v12h-12zM1237 786h12v12h-12zM1249 786h12v12h-12zM1261 786h12v12h-12zM1273 786h12v12h-12zM1285 786h12v12h-12zM1297 786h12v12h-12zM1309 786h12v12h-12zM1321 786h12v12h-12zM1333 786h12v12h-12zM1345 786h12v12h-12zM1357 774h12v12h-12zM1369 774h12v12h-12zM1381 762h12v12h-12zM1393 750h12v12h-12zM1405 750h12v12h-12zM1417 738h12v12h-12zM1441 702h12v12h-12zM1453 678h12v12h-12zM1465 654h12v12h-12zM1477 606h12v12h-12zM1477 618h12v12h-12zM1489 546h12v12h-12zM1501 546h12v12h-12zM1513 546h12v12h-12z"/>
<path fill="#c2c2c2" d="M853 294h12v12h-12zM853 390h12v12h-12zM853 402h12v12h-12zM865 426h12v12h-12zM865 438h12v12h-12zM877 246h12v12h-12zM877 462h12v12h-12zM889 234h12v12h-12zM889 474h12v12h-12zM889 486h12v12h-12zM901 222h12v12h-12zM901 498h12v12h-12zM913 510h12v12h-12zM925 174h12v12h-12zM925 534h12v12h-12zM937 186h12v12h-12zM937 198h12v12h-12zM937 546h12v12h-12zM949 558h12v12h-12zM961 570h12v12h-12zM973 582h12v12h-12zM985 594h12v12h-12zM997 594h12v12h-12zM1009 606h12v12h-12zM1021 618h12v12h-12zM1045 630h12v12h-12zM1057 642h12v12h-12zM1069 642h12v12h-12zM1081 654h12v12h-12zM1093 666h12v12h-12zM1105 666h12v12h-12zM1105 678h12v12h-12zM1117 678h12v12h-12zM1117 690h12v12h-12zM1129 690h12v12h-12zM1129 702h12v12h-12zM1141 702h12v12h-12zM1141 714h12v12h-12zM1153 714h12v12h-12zM1153 726h12v12h-12zM1165 726h12v12h-12zM1165 738h12v12h-12zM1177 738h12v12h-12zM1189 738h12v12h-12zM1189 750h12v12h-12zM1201 750h12v12h-12zM1213 762h12v12h-12zM1225 762h12v12h-12zM1237 762h12v12h-12zM1237 774h12v12h-12zM1249 774h12v12h-12zM1261 774h12v12h-12zM1273 774h12v12h-12zM1285 774h12v12h-12zM1297 774h12v12h-12zM1309 774h12v12h-12zM1321 774h12v12h-12zM1333 774h12v12h-12zM1345 774h12v12h-12zM1357 762h12v12h-12zM1369 762h12v12h-12zM1381 750h12v12h-12zM1405 738h12v12h-12zM1417 726h12v12h-12zM1429 714h12v12h-12zM1441 690h12v12h-12zM1453 666h12v12h-12zM1465 642h12v12h-12zM1477 594h12v12h-12zM1489 534h12v12h-12zM1501 534h12v12h-12zM1513 534h12v12h-12z"/>
<path fill="#c4c4c4" d="M853 306h12v12h-12zM853 318h12v12h-12zM853 330h12v12h-12zM853 342h12v12h-12zM853 354h12v12h-12zM853 366h12v12h-12zM853 378h12v12h-12zM865 270h12v12h-12zM865 282h12v12h-12zM865 402h12v12h-12zM865 414h12v12h-12zM877 438h12v12h-12zM877 450h12v12h-12zM889 462h12v12h-12zM901 486h12v12h-12zM913 498h12v12h-12zM925 510h12v12h-12zM925 522h12v12h-12zM937 174h12v12h-12zM937 534h12v12h-12zM949 174h12v12h-12zM949 186h12v12h-12zM949 546h12v12h-12zM961 558h12v12h-12zM973 570h12v12h-12zM985 582h12v12h-12zM1009 594h12v12h-12zM1021 606h12v12h-12zM1033 618h12v12h-12zM1045 618h12v12h-12zM1057 630h12v12h-12zM1081 642h12v12h-12zM1093 654h12v12h-12zM1105 654h12v12h-12zM1117 666h12v12h-12zM1129 666h12v12h-12zM1129 678h12v12h-12zM1141 678h12v12h-12zM1141 690h12v12h-12zM1153 690h12v12h-12zM1153 702h12v12h-12zM1165 702h12v12h-12zM1165 714h12v12h-12zM1177 714h12v12h-12zM1177 726h12v12h-12zM1189 726h12v12h-12zM1201 726h12v12h-12zM1201 738h12v12h-12zM1213 738h12v12h-12zM1213 750h12v12h-12zM1225 738h12v12h-12zM1225 750h12v12h-12zM1237 750h12v12h-12zM1249 750h12v12h-12zM1249 762h12v12h-12zM1261 762h12v12h-12zM1273 762h12v12h-12zM1285 762h12v12h-12zM1297 762h12v12h-12zM1309 762h12v12h-12zM1321 762h12v12h-12zM1333 762h12v12h-12zM1345 750h12v12h-12zM1345 762h12v12h-12zM1357 750h12v12h-12zM1369 750h12v12h-12zM1381 738h12v12h-12zM1393 726h12v12h-12zM1393 738h12v12h-12zM1405 726h12v12h-12zM1417 714h12v12h-12zM1429 702h12v12h-12zM1441 678h12v12h-12zM1453 654h12v12h-12zM1465 630h12v12h-12zM1477 582h12v12h-12zM1489 522h12v12h-12zM1501 522h12v12h-12zM1513 522h12v12h-12z"/>
<path fill="#c6c6c6" d="M865 294h12v12h-12zM865 306h12v12h-12zM865 366h12v12h-12zM865 378h12v12h-12zM865 390h12v12h-12zM877 258h12v12h-12zM877 414h12v12h-12zM877 426h12v12h-12zM889 246h12v12h-12zM889 438h12v12h-12zM889 450h12v12h-12zM901 462h12v12h-12zM901 474h12v12h-12zM913 486h12v12h-12zM925 498h12v12h-12zM937 522h12v12h-12zM949 162h12v12h-12zM949 534h12v12h-12zM961 174h12v12h-12zM961 186h12v12h-12zM961 546h12v12h-12zM973 558h12v12h-12zM985 570h12v12h-12zM997 582h12v12h-12zM1009 582h12v12h-12zM1021 594h12v12h-12zM1033 606h12v12h-12zM1057 618h12v12h-12zM1069 630h12v12h-12zM1081 630h12v12h-12zM1093 642h12v12h-12zM1105 642h12v12h-12zM1117 654h12v12h-12zM1129 654h12v12h-12zM1141 666h12v12h-12zM1153 666h12v12h-12zM1153 678h12v12h-12zM1165 678h12v12h-12zM1165 690h12v12h-12zM1177 690h12v12h-12zM1177 702h12v12h-12zM1189 702h12v12h-12zM1189 714h12v12h-12zM1201 714h12v12h-12zM1213 714h12v12h-12zM1213 726h12v12h-12zM1225 726h12v12h-12zM1237 726h12v12h-12zM1237 738h12v12h-12zM1249 738h12v12h-12zM1261 738h12v12h-12zM1261 750h12v12h-12zM1273 738h12v12h-12zM1273 750h12v12h-12zM1285 738h12v12h-12zM1285 750h12v12h-12zM1297 750h12v12h-12zM1309 750h12v12h-12zM1321 750h12v12h-12zM1333 738h12v12h-12zM1333 750h12v12h-12zM1345 738h12v12h-12zM1357 738h12v12h-12zM1369 726h12v12h-12zM1369 738h12v12h-12zM1381 726h12v12h-12zM1393 714h12v12h-12zM1405 714h12v12h-12zM1417 702h12v12h-12zM1429 678h12v12h-12zM1429 690h12v12h-12zM1441 666h12v12h-12zM1453 642h12v12h-12zM1465 606h12v12h-12zM1465 618h12v12h-12zM1477 570h12v12h-12zM1489 510h12v12h-12zM1501 510h12v12h-12zM1513 510h12v12h-12z"/>
<path fill="#c8c8c8" d="M865 318h12v12h-12zM865 330h12v12h-12zM865 342h12v12h-12zM865 354h12v12h-12zM877 270h12v12h-12zM877 282h12v12h-12zM877 390h12v12h-12zM877 402h12v12h-12zM889 426h12v12h-12zM901 234h12v12h-12zM901 450h12v12h-12zM913 222h12v12h-12zM913 474h12v12h-12zM925 210h12v12h-12zM925 486h12v12h-12zM937 498h12v12h-12zM937 510h12v12h-12zM949 522h12v12h-12zM961 162h12v12h-12zM961 534h12v12h-12zM973 162h12v12h-12zM973 174h12v12h-12zM973 186h12v12h-12zM973 546h12v12h-12zM985 558h12v12h-12zM997 570h12v12h-12zM1009 570h12v12h-12zM1021 582h12v12h-12zM1033 594h12v12h-12zM1045 606h12v12h-12zM1057 606h12v12h-12zM1069 618h12v12h-12zM1093 630h12v12h-12zM1117 642h12v12h-12zM1129 642h12v12h-12zM1141 654h12v12h-12zM1153 654h12v12h-12zM1165 666h12v12h-12zM1177 666h12v12h-12zM1177 678h12v12h-12zM1189 678h12v12h-12zM1189 690h12v12h-12zM1201 690h12v12h-12zM1201 702h12v12h-12zM1213 690h12v12h-12zM1213 702h12v12h-12zM1225 702h12v12h-12zM1225 714h12v12h-12zM1237 714h12v12h-12zM1249 714h12v12h-12zM1249 726h12v12h-12zM1261 714h12v12h-12zM1261 726h12v12h-12zM1273 726h12v12h-12zM1285 726h12v12h-12zM1297 726h12v12h-12zM1297 738h12v12h-12zM1309 726h12v12h-12zM1309 738h12v12h-12zM1321 726h12v12h-12zM1321 738h12v12h-12zM1333 726h12v12h-12zM1345 726h12v12h-12zM1357 726h12v12h-12zM1369 714h12v12h-12zM1381 714h12v12h-12zM1393 702h12v12h-12zM1405 690h12v12h-12zM1405 702h12v12h-12zM1417 678h12v12h-12zM1417 690h12v12h-12zM1429 666h12v12h-12zM1441 642h12v12h-12zM1441 654h12v12h-12zM1453 618h12v12h-12zM1453 630h12v12h-12zM1465 594h12v12h-12zM1477 558h12v12h-12zM1489 498h12v12h-12zM1501 486h12v12h-12zM1501 498h12v12h-12z"/>
<path fill="#cacaca" d="M877 294h12v12h-12zM877 306h12v12h-12zM877 318h12v12h-12zM877 330h12v12h-12zM877 342h12v12h-12zM877 354h12v12h-12zM877 366h12v12h-12zM877 378h12v12h-12zM889 258h12v12h-12zM889 402h12v12h-12zM889 414h12v12h-12zM901 426h12v12h-12zM901 438h12v12h-12zM913 450h12v12h-12zM913 462h12v12h-12zM925 474h12v12h-12zM937 486h12v12h-12zM949 198h12v12h-12zM949 498h12v12h-12zM949 510h12v12h-12zM961 522h12v12h-12zM973 534h12v12h-12zM985 150h12v12h-12zM985 162h12v12h-12zM985 174h12v12h-12zM985 546h12v12h-12zM997 558h12v12h-12zM1009 558h12v12h-12zM1021 570h12v12h-12zM1033 582h12v12h-12zM1045 594h12v12h-12zM1057 594h12v12h-12zM1069 606h12v12h-12zM1081 618h12v12h-12zM1093 618h12v12h-12zM1105 630h12v12h-12zM1117 630h12v12h-12zM1141 642h12v12h-12zM1153 642h12v12h-12zM1165 654h12v12h-12zM1177 654h12v12h-12zM1189 654h12v12h-12zM1189 666h12v12h-12zM1201 666h12v12h-12zM1201 678h12v12h-12zM1213 666h12v12h-12zM1213 678h12v12h-12zM1225 678h12v12h-12zM1225 690h12v12h-12zM1237 690h12v12h-12zM1237 702h12v12h-12zM1249 690h12v12h-12zM1249 702h12v12h-12zM1261 702h12v12h-12zM1273 702h12v12h-12zM1273 714h12v12h-12zM1285 702h12v12h-12zM1285 714h12v12h-12zM1297 702h12v12h-12zM1297 714h12v12h-12zM1309 714h12v12h-12zM1321 714h12v12h-12zM1333 714h12v12h-12zM1345 702h12v12h-12zM1345 714h12v12h-12zM1357 702h12v12h-12zM1357 714h12v12h-12zM1369 702h12v12h-12zM1381 690h12v12h-12zM1381 702h12v12h-12zM1393 678h12v12h-12zM1393 690h12v12h-12zM1405 678h12v12h-12zM1417 666h12v12h-12zM1429 642h12v12h-12zM1429 654h12v12h-12zM1441 618h12v12h-12zM1441 630h12v12h-12zM1453 606h12v12h-12zM1465 582h12v12h-12zM1477 486h12v12h-12zM1477 534h12v12h-12zM1477 546h12v12h-12zM1489 474h12v12h-12zM1489 486h12v12h-12zM1501 474h12v12h-12z"/>
<path fill="#cccccc" d="M889 270h12v12h-12zM889 282h12v12h-12zM889 366h12v12h-12zM889 378h12v12h-12zM889 390h12v12h-12zM901 246h12v12h-12zM901 402h12v12h-12zM901 414h12v12h-12zM913 234h12v12h-12zM913 438h12v12h-12zM925 222h12v12h-12zM925 450h12v12h-12zM925 462h12v12h-12zM937 210h12v12h-12zM937 474h12v12h-12zM949 486h12v12h-12zM961 498h12v12h-12zM961 510h12v12h-12zM973 522h12v12h-12zM985 534h12v12h-12zM997 150h12v12h-12zM997 162h12v12h-12zM997 174h12v12h-12zM997 546h12v12h-12zM1009 546h12v12h-12zM1021 558h12v12h-12zM1033 570h12v12h-12zM1045 582h12v12h-12zM1069 594h12v12h-12zM1081 606h12v12h-12zM1093 606h12v12h-12zM1105 618h12v12h-12zM1117 618h12v12h-12zM1129 630h12v12h-12zM1141 630h12v12h-12zM1165 642h12v12h-12zM1177 642h12v12h-12zM1201 654h12v12h-12zM1213 654h12v12h-12zM1225 654h12v12h-12zM1225 666h12v12h-12zM1237 666h12v12h-12zM1237 678h12v12h-12zM1249 666h12v12h-12zM1249 678h12v12h-12zM1261 678h12v12h-12zM1261 690h12v12h-12zM1273 678h12v12h-12zM1273 690h12v12h-12zM1285 678h12v12h-12zM1285 690h12v12h-12zM1297 690h12v12h-12zM1309 690h12v12h-12zM1309 702h12v12h-12zM1321 690h12v12h-12zM1321 702h12v12h-12zM1333 690h12v12h-12zM1333 702h12v12h-12zM1345 690h12v12h-12zM1357 678h12v12h-12zM1357 690h12v12h-12zM1369 678h12v12h-12zM1369 690h12v12h-12zM1381 666h12v12h-12zM1381 678h12v12h-12zM1393 666h12v12h-12zM1405 654h12v12h-12zM1405 666h12v12h-12zM1417 642h12v12h-12zM1417 654h12v12h-12zM1429 618h12v12h-12zM1429 630h12v12h-12zM1441 606h12v12h-12zM1453 594h12v12h-12zM1465 570h12v12h-12zM1477 462h12v12h-12zM1477 474h12v12h-12zM1477 498h12v12h-12zM1477 510h12v12h-12zM1477 522h12v12h-12zM1489 462h12v12h-12zM1501 462h12v12h-12z"/>
<path fill="#cecece" d="M889 294h12v12h-12zM889 306h12v12h-12zM889 318h12v12h-12zM889 330h12v12h-12zM889 342h12v12h-12zM889 354h12v12h-12zM901 258h12v12h-12zM901 270h12v12h-12zM901 378h12v12h-12zM901 390h12v12h-12zM913 246h12v12h-12zM913 414h12v12h-12zM913 426h12v12h-12zM925 438h12v12h-12zM937 450h12v12h-12zM937 462h12v12h-12zM949 474h12v12h-12zM961 198h12v12h-12zM961 486h12v12h-12zM973 498h12v12h-12zM973 510h12v12h-12zM985 522h12v12h-12zM997 522h12v12h-12zM997 534h12v12h-12zM1009 150h12v12h-12zM1009 162h12v12h-12zM1009 174h12v12h-12zM1009 534h12v12h-12zM1021 162h12v12h-12zM1021 174h12v12h-12zM1021 546h12v12h-12zM1033 558h12v12h-12zM1045 570h12v12h-12zM1057 582h12v12h-12zM1069 582h12v12h-12zM1081 594h12v12h-12zM1093 594h12v12h-12zM1105 606h12v12h-12zM1117 606h12v12h-12zM1129 618h12v12h-12zM1141 618h12v12h-12zM1153 630h12v12h-12zM1165 630h12v12h-12zM1189 642h12v12h-12zM1201 642h12v12h-12zM1213 642h12v12h-12zM1237 654h12v12h-12zM1249 654h12v12h-12zM1261 654h12v12h-12zM1261 666h12v12h-12zM1273 654h12v12h-12zM1273 666h12v12h-12zM1285 654h12v12h-12zM1285 666h12v12h-12zM1297 666h12v12h-12zM1297 678h12v12h-12zM1309 666h12v12h-12zM1309 678h12v12h-12zM1321 666h12v12h-12zM1321 678h12v12h-12zM1333 666h12v12h-12zM1333 678h12v12h-12zM1345 666h12v12h-12zM1345 678h12v12h-12zM1357 654h12v12h-12zM1357 666h12v12h-12zM1369 654h12v12h-12zM1369 666h12v12h-12zM1381 654h12v12h-12zM1393 642h12v12h-12zM1393 654h12v12h-12zM1405 630h12v12h-12zM1405 642h12v12h-12zM1417 618h12v12h-12zM1417 630h12v12h-12zM1429 606h12v12h-12zM1441 594h12v12h-12zM1453 582h12v12h-12zM1465 558h12v12h-12zM1477 450h12v12h-12zM1489 450h12v12h-12z"/>
<path fill="#d0d0d0" d="M901 282h12v12h-12zM901 294h12v12h-12zM901 306h12v12h-12zM901 318h12v12h-12zM901 330h12v12h-12zM901 342h12v12h-12zM901 354h12v12h-12zM901 366h12v12h-12zM913 258h12v12h-12zM913 390h12v12h-12zM913 402h12v12h-12zM925 234h12v12h-12zM925 414h12v12h-12zM925 426h12v12h-12zM937 222h12v12h-12zM937 438h12v12h-12zM949 210h12v12h-12zM949 462h12v12h-12zM961 474h12v12h-12zM973 486h12v12h-12zM985 186h12v12h-12zM985 498h12v12h-12zM985 510h12v12h-12zM997 510h12v12h-12zM1009 522h12v12h-12zM1021 150h12v12h-12zM1021 534h12v12h-12zM1033 150h12v12h-12zM1033 162h12v12h-12zM1033 546h12v12h-12zM1045 558h12v12h-12zM1057 570h12v12h-12zM1069 570h12v12h-12zM1081 582h12v12h-12zM1105 594h12v12h-12zM1129 606h12v12h-12zM1153 618h12v12h-12zM1165 618h12v12h-12zM1177 630h12v12h-12zM1189 630h12v12h-12zM1201 630h12v12h-12zM1225 642h12v12h-12zM1237 642h12v12h-12zM1249 642h12v12h-12zM1261 642h12v12h-12zM1273 642h12v12h-12zM1285 642h12v12h-12zM1297 642h12v12h-12zM1297 654h12v12h-12zM1309 642h12v12h-12zM1309 654h12v12h-12zM1321 642h12v12h-12zM1321 654h12v12h-12zM1333 642h12v12h-12zM1333 654h12v12h-12zM1345 642h12v12h-12zM1345 654h12v12h-12zM1357 642h12v12h-12zM1369 630h12v12h-12zM1369 642h12v12h-12zM1381 630h12v12h-12zM1381 642h12v12h-12zM1393 630h12v12h-12zM1405 618h12v12h-12zM1417 606h12v12h-12zM1453 570h12v12h-12zM1465 438h12v12h-12zM1465 546h12v12h-12zM1477 438h12v12h-12zM1489 426h12v12h-12zM1489 438h12v12h-12z"/>
<path fill="#d2d2d2" d="M913 270h12v12h-12zM913 282h12v12h-12zM913 342h12v12h-12zM913 354h12v12h-12zM913 366h12v12h-12zM913 378h12v12h-12zM925 246h12v12h-12zM925 390h12v12h-12zM925 402h12v12h-12zM937 414h12v12h-12zM937 426h12v12h-12zM949 438h12v12h-12zM949 450h12v12h-12zM961 462h12v12h-12zM973 474h12v12h-12zM985 486h12v12h-12zM997 498h12v12h-12zM1009 510h12v12h-12zM1021 522h12v12h-12zM1033 534h12v12h-12zM1045 150h12v12h-12zM1045 162h12v12h-12zM1045 546h12v12h-12zM1057 558h12v12h-12zM1069 558h12v12h-12zM1081 570h12v12h-12zM1093 582h12v12h-12zM1105 582h12v12h-12zM1117 594h12v12h-12zM1129 594h12v12h-12zM1141 606h12v12h-12zM1153 606h12v12h-12zM1165 606h12v12h-12zM1177 618h12v12h-12zM1189 618h12v12h-12zM1201 618h12v12h-12zM1213 630h12v12h-12zM1225 630h12v12h-12zM1237 630h12v12h-12zM1249 630h12v12h-12zM1261 630h12v12h-12zM1321 630h12v12h-12zM1333 630h12v12h-12zM1345 630h12v12h-12zM1357 630h12v12h-12zM1381 618h12v12h-12zM1393 618h12v12h-12zM1405 606h12v12h-12zM1429 594h12v12h-12zM1441 582h12v12h-12zM1453 558h12v12h-12zM1465 426h12v12h-12zM1465 522h12v12h-12zM1465 534h12v12h-12zM1477 414h12v12h-12zM1477 426h12v12h-12zM1489 414h12v12h-12z"/>
<path fill="#d4d4d4" d="M913 294h12v12h-12zM913 306h12v12h-12zM913 318h12v12h-12zM913 330h12v12h-12zM925 258h12v12h-12zM925 270h12v12h-12zM925 354h12v12h-12zM925 366h12v12h-12zM925 378h12v12h-12zM937 234h12v12h-12zM937 390h12v12h-12zM937 402h12v12h-12zM949 222h12v12h-12zM949 414h12v12h-12zM949 426h12v12h-12zM961 210h12v12h-12zM961 438h12v12h-12zM961 450h12v12h-12zM973 198h12v12h-12zM973 462h12v12h-12zM985 474h12v12h-12zM997 186h12v12h-12zM997 486h12v12h-12zM1009 498h12v12h-12zM1021 510h12v12h-12zM1033 174h12v12h-12zM1033 522h12v12h-12zM1045 534h12v12h-12zM1057 150h12v12h-12zM1057 162h12v12h-12zM1057 546h12v12h-12zM1069 150h12v12h-12zM1069 162h12v12h-12zM1069 546h12v12h-12zM1081 558h12v12h-12zM1093 570h12v12h-12zM1105 570h12v12h-12zM1117 582h12v12h-12zM1129 582h12v12h-12zM1141 594h12v12h-12zM1153 594h12v12h-12zM1177 606h12v12h-12zM1189 606h12v12h-12zM1213 618h12v12h-12zM1225 618h12v12h-12zM1237 618h12v12h-12zM1249 618h12v12h-12zM1273 630h12v12h-12zM1285 630h12v12h-12zM1297 630h12v12h-12zM1309 630h12v12h-12zM1345 618h12v12h-12zM1357 618h12v12h-12zM1369 618h12v12h-12zM1381 606h12v12h-12zM1393 606h12v12h-12zM1405 594h12v12h-12zM1417 594h12v12h-12zM1429 582h12v12h-12zM1441 570h12v12h-12zM1453 402h12v12h-12zM1453 546h12v12h-12zM1465 402h12v12h-12zM1465 414h12v12h-12zM1465 450h12v12h-12zM1465 510h12v12h-12zM1477 390h12v12h-12zM1477 402h12v12h-12z"/>
<path fill="#d6d6d6" d="M925 282h12v12h-12zM925 294h12v12h-12zM925 306h12v12h-12zM925 318h12v12h-12zM925 330h12v12h-12zM925 342h12v12h-12zM937 246h12v12h-12zM937 258h12v12h-12zM937 366h12v12h-12zM937 378h12v12h-12zM949 234h12v12h-12zM949 402h12v12h-12zM961 414h12v12h-12zM961 426h12v12h-12zM973 438h12v12h-12zM973 450h12v12h-12zM985 198h12v12h-12zM985 450h12v12h-12zM985 462h12v12h-12zM997 474h12v12h-12zM1009 486h12v12h-12zM1021 498h12v12h-12zM1033 510h12v12h-12zM1045 174h12v12h-12zM1045 522h12v12h-12zM1057 522h12v12h-12zM1057 534h12v12h-12zM1069 534h12v12h-12zM1081 150h12v12h-12zM1081 162h12v12h-12zM1081 546h12v12h-12zM1093 558h12v12h-12zM1105 558h12v12h-12zM1117 570h12v12h-12zM1129 570h12v12h-12zM1141 582h12v12h-12zM1153 582h12v12h-12zM1165 594h12v12h-12zM1177 594h12v12h-12zM1189 594h12v12h-12zM1201 606h12v12h-12zM1213 606h12v12h-12zM1225 606h12v12h-12zM1237 606h12v12h-12zM1261 618h12v12h-12zM1273 618h12v12h-12zM1285 618h12v12h-12zM1297 618h12v12h-12zM1309 618h12v12h-12zM1321 618h12v12h-12zM1333 618h12v12h-12zM1357 606h12v12h-12zM1369 606h12v12h-12zM1393 594h12v12h-12zM1417 582h12v12h-12zM1429 570h12v12h-12zM1441 558h12v12h-12zM1453 390h12v12h-12zM1453 414h12v12h-12zM1453 534h12v12h-12zM1465 378h12v12h-12zM1465 390h12v12h-12zM1465 462h12v12h-12zM1465 474h12v12h-12zM1465 486h12v12h-12zM1465 498h12v12h-12z"/>
<path fill="#d8d8d8" d="M937 270h12v12h-12zM937 282h12v12h-12zM937 294h12v12h-12zM937 306h12v12h-12zM937 318h12v12h-12zM937 330h12v12h-12zM937 342h12v12h-12zM937 354h12v12h-12zM949 246h12v12h-12zM949 366h12v12h-12zM949 378h12v12h-12zM949 390h12v12h-12zM961 222h12v12h-12zM961 402h12v12h-12zM973 210h12v12h-12zM973 414h12v12h-12zM973 426h12v12h-12zM985 438h12v12h-12zM997 450h12v12h-12zM997 462h12v12h-12zM1009 186h12v12h-12zM1009 474h12v12h-12zM1021 486h12v12h-12zM1033 498h12v12h-12zM1045 510h12v12h-12zM1057 510h12v12h-12zM1069 522h12v12h-12zM1081 534h12v12h-12zM1093 150h12v12h-12zM1093 162h12v12h-12zM1093 546h12v12h-12zM1105 150h12v12h-12zM1105 162h12v12h-12zM1105 546h12v12h-12zM1117 558h12v12h-12zM1129 558h12v12h-12zM1141 570h12v12h-12zM1153 570h12v12h-12zM1165 582h12v12h-12zM1177 582h12v12h-12zM1189 582h12v12h-12zM1201 594h12v12h-12zM1213 594h12v12h-12zM1225 594h12v12h-12zM1249 606h12v12h-12zM1261 606h12v12h-12zM1273 606h12v12h-12zM1285 606h12v12h-12zM1297 606h12v12h-12zM1309 606h12v12h-12zM1321 606h12v12h-12zM1333 606h12v12h-12zM1345 606h12v12h-12zM1357 594h12v12h-12zM1369 594h12v12h-12zM1381 594h12v12h-12zM1393 582h12v12h-12zM1405 582h12v12h-12zM1417 570h12v12h-12zM1429 558h12v12h-12zM1441 366h12v12h-12zM1441 378h12v12h-12zM1441 534h12v12h-12zM1441 546h12v12h-12zM1453 366h12v12h-12zM1453 378h12v12h-12zM1453 510h12v12h-12zM1453 522h12v12h-12zM1465 366h12v12h-12z"/>
<path fill="#dadada" d="M949 258h12v12h-12zM949 270h12v12h-12zM949 282h12v12h-12zM949 294h12v12h-12zM949 306h12v12h-12zM949 318h12v12h-12zM949 330h12v12h-12zM949 342h12v12h-12zM949 354h12v12h-12zM961 234h12v12h-12zM961 246h12v12h-12zM961 366h12v12h-12zM961 378h12v12h-12zM961 390h12v12h-12zM973 222h12v12h-12zM973 402h12v12h-12zM985 210h12v12h-12zM985 414h12v12h-12zM985 426h12v12h-12zM997 198h12v12h-12zM997 438h12v12h-12zM1009 450h12v12h-12zM1009 462h12v12h-12zM1021 186h12v12h-12zM1021 462h12v12h-12zM1021 474h12v12h-12zM1033 474h12v12h-12zM1033 486h12v12h-12zM1045 486h12v12h-12zM1045 498h12v12h-12zM1057 174h12v12h-12zM1057 498h12v12h-12zM1069 510h12v12h-12zM1081 522h12v12h-12zM1093 522h12v12h-12zM1093 534h12v12h-12zM1105 534h12v12h-12zM1117 150h12v12h-12zM1117 162h12v12h-12zM1117 546h12v12h-12zM1129 150h12v12h-12zM1129 162h12v12h-12zM1129 546h12v12h-12zM1141 558h12v12h-12zM1153 558h12v12h-12zM1165 570h12v12h-12zM1177 570h12v12h-12zM1201 582h12v12h-12zM1213 582h12v12h-12zM1225 582h12v12h-12zM1237 594h12v12h-12zM1249 594h12v12h-12zM1261 594h12v12h-12zM1273 594h12v12h-12zM1285 594h12v12h-12zM1297 594h12v12h-12zM1309 594h12v12h-12zM1321 594h12v12h-12zM1333 594h12v12h-12zM1345 594h12v12h-12zM1369 582h12v12h-12zM1381 582h12v12h-12zM1393 570h12v12h-12zM1405 570h12v12h-12zM1417 558h12v12h-12zM1429 354h12v12h-12zM1429 546h12v12h-12zM1441 342h12v12h-12zM1441 354h12v12h-12zM1441 522h12v12h-12zM1453 342h12v12h-12zM1453 354h12v12h-12zM1453 426h12v12h-12zM1453 486h12v12h-12zM1453 498h12v12h-12z"/>
<path fill="#dcdcdc" d="M961 258h12v12h-12zM961 270h12v12h-12zM961 330h12v12h-12zM961 342h12v12h-12zM961 354h12v12h-12zM973 234h12v12h-12zM973 366h12v12h-12zM973 378h12v12h-12zM973 390h12v12h-12zM985 222h12v12h-12zM985 402h12v12h-12zM997 210h12v12h-12zM997 414h12v12h-12zM997 426h12v12h-12zM1009 198h12v12h-12zM1009 438h12v12h-12zM1021 450h12v12h-12zM1033 186h12v12h-12zM1033 462h12v12h-12zM1045 474h12v12h-12zM1057 486h12v12h-12zM1069 174h12v12h-12zM1069 498h12v12h-12zM1081 510h12v12h-12zM1093 510h12v12h-12zM1105 522h12v12h-12zM1117 534h12v12h-12zM1129 534h12v12h-12zM1141 150h12v12h-12zM1141 162h12v12h-12zM1141 546h12v12h-12zM1153 150h12v12h-12zM1153 162h12v12h-12zM1153 174h12v12h-12zM1153 546h12v12h-12zM1165 558h12v12h-12zM1177 558h12v12h-12zM1189 570h12v12h-12zM1201 570h12v12h-12zM1213 570h12v12h-12zM1225 570h12v12h-12zM1237 582h12v12h-12zM1249 582h12v12h-12zM1261 582h12v12h-12zM1273 582h12v12h-12zM1285 582h12v12h-12zM1297 582h12v12h-12zM1309 582h12v12h-12zM1321 582h12v12h-12zM1333 582h12v12h-12zM1345 582h12v12h-12zM1357 582h12v12h-12zM1369 570h12v12h-12zM1381 570h12v12h-12zM1393 558h12v12h-12zM1405 558h12v12h-12zM1417 330h12v12h-12zM1417 342h12v12h-12zM1417 546h12v12h-12zM1429 318h12v12h-12zM1429 330h12v12h-12zM1429 342h12v12h-12zM1429 366h12v12h-12zM1429 534h12v12h-12zM1441 330h12v12h-12zM1441 390h12v12h-12zM1441 510h12v12h-12zM1453 438h12v12h-12zM1453 450h12v12h-12zM1453 462h12v12h-12zM1453 474h12v12h-12z"/>
<path fill="#dedede" d="M961 282h12v12h-12zM961 294h12v12h-12zM961 306h12v12h-12zM961 318h12v12h-12zM973 246h12v12h-12zM973 258h12v12h-12zM973 270h12v12h-12zM973 330h12v12h-12zM973 342h12v12h-12zM973 354h12v12h-12zM985 234h12v12h-12zM985 366h12v12h-12zM985 378h12v12h-12zM985 390h12v12h-12zM997 390h12v12h-12zM997 402h12v12h-12zM1009 414h12v12h-12zM1009 426h12v12h-12zM1021 198h12v12h-12zM1021 426h12v12h-12zM1021 438h12v12h-12zM1033 450h12v12h-12zM1045 186h12v12h-12zM1045 462h12v12h-12zM1057 474h12v12h-12zM1069 486h12v12h-12zM1081 174h12v12h-12zM1081 486h12v12h-12zM1081 498h12v12h-12zM1093 174h12v12h-12zM1093 498h12v12h-12zM1105 510h12v12h-12zM1117 522h12v12h-12zM1129 522h12v12h-12zM1141 534h12v12h-12zM1153 534h12v12h-12zM1165 150h12v12h-12zM1165 162h12v12h-12zM1165 174h12v12h-12zM1165 546h12v12h-12zM1177 150h12v12h-12zM1177 162h12v12h-12zM1177 174h12v12h-12zM1177 546h12v12h-12zM1189 150h12v12h-12zM1189 162h12v12h-12zM1189 558h12v12h-12zM1201 558h12v12h-12zM1213 558h12v12h-12zM1237 570h12v12h-12zM1249 570h12v12h-12zM1261 570h12v12h-12zM1273 570h12v12h-12zM1285 570h12v12h-12zM1297 570h12v12h-12zM1309 570h12v12h-12zM1321 570h12v12h-12zM1333 570h12v12h-12zM1345 570h12v12h-12zM1357 570h12v12h-12zM1369 558h12v12h-12zM1381 558h12v12h-12zM1393 306h12v12h-12zM1393 546h12v12h-12zM1405 294h12v12h-12zM1405 306h12v12h-12zM1405 318h12v12h-12zM1405 546h12v12h-12zM1417 294h12v12h-12zM1417 306h12v12h-12zM1417 318h12v12h-12zM1417 534h12v12h-12zM1429 306h12v12h-12zM1429 510h12v12h-12zM1429 522h12v12h-12zM1441 402h12v12h-12zM1441 486h12v12h-12zM1441 498h12v12h-12z"/>
<path fill="#e0e0e0" d="M973 282h12v12h-12zM973 294h12v12h-12zM973 306h12v12h-12zM973 318h12v12h-12zM985 246h12v12h-12zM985 258h12v12h-12zM985 330h12v12h-12zM985 342h12v12h-12zM985 354h12v12h-12zM997 222h12v12h-12zM997 234h12v12h-12zM997 366h12v12h-12zM997 378h12v12h-12zM1009 210h12v12h-12zM1009 390h12v12h-12zM1009 402h12v12h-12zM1021 414h12v12h-12zM1033 198h12v12h-12zM1033 426h12v12h-12zM1033 438h12v12h-12zM1045 438h12v12h-12zM1045 450h12v12h-12zM1057 186h12v12h-12zM1057 450h12v12h-12zM1057 462h12v12h-12zM1069 462h12v12h-12zM1069 474h12v12h-12zM1081 474h12v12h-12zM1093 486h12v12h-12zM1105 174h12v12h-12zM1105 498h12v12h-12zM1117 174h12v12h-12zM1117 498h12v12h-12zM1117 510h12v12h-12zM1129 174h12v12h-12zM1129 510h12v12h-12zM1141 174h12v12h-12zM1141 522h12v12h-12zM1153 522h12v12h-12zM1165 534h12v12h-12zM1177 534h12v12h-12zM1189 174h12v12h-12zM1189 546h12v12h-12zM1201 162h12v12h-12zM1201 174h12v12h-12zM1201 546h12v12h-12zM1213 162h12v12h-12zM1213 174h12v12h-12zM1213 186h12v12h-12zM1213 546h12v12h-12zM1225 162h12v12h-12zM1225 174h12v12h-12zM1225 186h12v12h-12zM1225 558h12v12h-12zM1237 558h12v12h-12zM1249 558h12v12h-12zM1261 558h12v12h-12zM1273 558h12v12h-12zM1285 558h12v12h-12zM1297 558h12v12h-12zM1309 558h12v12h-12zM1321 558h12v12h-12zM1333 558h12v12h-12zM1345 558h12v12h-12zM1357 558h12v12h-12zM1369 270h12v12h-12zM1369 282h12v12h-12zM1369 546h12v12h-12zM1381 258h12v12h-12zM1381 270h12v12h-12zM1381 282h12v12h-12zM1381 294h12v12h-12zM1381 546h12v12h-12zM1393 270h12v12h-12zM1393 282h12v12h-12zM1393 294h12v12h-12zM1393 534h12v12h-12zM1405 282h12v12h-12zM1405 330h12v12h-12zM1405 522h12v12h-12zM1405 534h12v12h-12zM1417 510h12v12h-12zM1417 522h12v12h-12zM1429 498h12v12h-12zM1441 414h12v12h-12zM1441 426h12v12h-12zM1441 450h12v12h-12zM1441 462h12v12h-12zM1441 474h12v12h-12z"/>
<path fill="#e2e2e2" d="M985 270h12v12h-12zM985 282h12v12h-12zM985 294h12v12h-12zM985 306h12v12h-12zM985 318h12v12h-12zM997 246h12v12h-12zM997 258h12v12h-12zM997 330h12v12h-12zM997 342h12v12h-12zM997 354h12v12h-12zM1009 222h12v12h-12zM1009 234h12v12h-12zM1009 366h12v12h-12zM1009 378h12v12h-12zM1021 210h12v12h-12zM1021 390h12v12h-12zM1021 402h12v12h-12zM1033 402h12v12h-12zM1033 414h12v12h-12zM1045 198h12v12h-12zM1045 426h12v12h-12zM1057 438h12v12h-12zM1069 186h12v12h-12zM1069 450h12v12h-12zM1081 462h12v12h-12zM1093 474h12v12h-12zM1105 486h12v12h-12zM1117 486h12v12h-12zM1129 498h12v12h-12zM1141 510h12v12h-12zM1153 510h12v12h-12zM1165 522h12v12h-12zM1177 522h12v12h-12zM1189 522h12v12h-12zM1189 534h12v12h-12zM1201 186h12v12h-12zM1201 534h12v12h-12zM1213 534h12v12h-12zM1225 534h12v12h-12zM1225 546h12v12h-12zM1237 174h12v12h-12zM1237 186h12v12h-12zM1237 198h12v12h-12zM1237 546h12v12h-12zM1249 174h12v12h-12zM1249 186h12v12h-12zM1249 198h12v12h-12zM1249 546h12v12h-12zM1261 174h12v12h-12zM1261 186h12v12h-12zM1261 198h12v12h-12zM1261 546h12v12h-12zM1273 186h12v12h-12zM1273 198h12v12h-12zM1273 210h12v12h-12zM1273 546h12v12h-12zM1285 186h12v12h-12zM1285 198h12v12h-12zM1285 210h12v12h-12zM1285 546h12v12h-12zM1297 198h12v12h-12zM1297 210h12v12h-12zM1297 222h12v12h-12zM1297 546h12v12h-12zM1309 210h12v12h-12zM1309 222h12v12h-12zM1309 234h12v12h-12zM1309 546h12v12h-12zM1321 210h12v12h-12zM1321 222h12v12h-12zM1321 234h12v12h-12zM1321 546h12v12h-12zM1333 222h12v12h-12zM1333 234h12v12h-12zM1333 246h12v12h-12zM1333 546h12v12h-12zM1345 234h12v12h-12zM1345 246h12v12h-12zM1345 258h12v12h-12zM1345 546h12v12h-12zM1357 234h12v12h-12zM1357 246h12v12h-12zM1357 258h12v12h-12zM1357 270h12v12h-12zM1357 546h12v12h-12zM1369 246h12v12h-12zM1369 258h12v12h-12zM1369 534h12v12h-12zM1381 534h12v12h-12zM1393 522h12v12h-12zM1405 510h12v12h-12zM1417 354h12v12h-12zM1417 498h12v12h-12zM1429 378h12v12h-12zM1429 474h12v12h-12zM1429 486h12v12h-12zM1441 438h12v12h-12z"/>
<path fill="#e4e4e4" d="M997 270h12v12h-12zM997 282h12v12h-12zM997 294h12v12h-12zM997 306h12v12h-12zM997 318h12v12h-12zM1009 246h12v12h-12zM1009 258h12v12h-12zM1009 330h12v12h-12zM1009 342h12v12h-12zM1009 354h12v12h-12zM1021 222h12v12h-12zM1021 234h12v12h-12zM1021 366h12v12h-12zM1021 378h12v12h-12zM1033 210h12v12h-12zM1033 378h12v12h-12zM1033 390h12v12h-12zM1045 402h12v12h-12zM1045 414h12v12h-12zM1057 198h12v12h-12zM1057 414h12v12h-12zM1057 426h12v12h-12zM1069 426h12v12h-12zM1069 438h12v12h-12zM1081 186h12v12h-12zM1081 438h12v12h-12zM1081 450h12v12h-12zM1093 450h12v12h-12zM1093 462h12v12h-12zM1105 462h12v12h-12zM1105 474h12v12h-12zM1117 474h12v12h-12zM1129 486h12v12h-12zM1141 486h12v12h-12zM1141 498h12v12h-12zM1153 498h12v12h-12zM1165 498h12v12h-12zM1165 510h12v12h-12zM1177 510h12v12h-12zM1189 510h12v12h-12zM1201 522h12v12h-12zM1213 522h12v12h-12zM1225 522h12v12h-12zM1237 534h12v12h-12zM1249 534h12v12h-12zM1261 534h12v12h-12zM1273 534h12v12h-12zM1285 222h12v12h-12zM1285 534h12v12h-12zM1297 534h12v12h-12zM1309 534h12v12h-12zM1321 534h12v12h-12zM1333 534h12v12h-12zM1345 534h12v12h-12zM1357 522h12v12h-12zM1357 534h12v12h-12zM1369 522h12v12h-12zM1381 510h12v12h-12zM1381 522h12v12h-12zM1393 318h12v12h-12zM1393 510h12v12h-12zM1405 498h12v12h-12zM1417 474h12v12h-12zM1417 486h12v12h-12zM1429 390h12v12h-12zM1429 402h12v12h-12zM1429 414h12v12h-12zM1429 426h12v12h-12zM1429 438h12v12h-12zM1429 450h12v12h-12zM1429 462h12v12h-12z"/>
<path fill="#e6e6e6" d="M1009 270h12v12h-12zM1009 282h12v12h-12zM1009 294h12v12h-12zM1009 306h12v12h-12zM1009 318h12v12h-12zM1021 246h12v12h-12zM1021 258h12v12h-12zM1021 318h12v12h-12zM1021 330h12v12h-12zM1021 342h12v12h-12zM1021 354h12v12h-12zM1033 222h12v12h-12zM1033 234h12v12h-12zM1033 354h12v12h-12zM1033 366h12v12h-12zM1045 210h12v12h-12zM1045 378h12v12h-12zM1045 390h12v12h-12zM1057 402h12v12h-12zM1069 198h12v12h-12zM1069 414h12v12h-12zM1081 426h12v12h-12zM1093 186h12v12h-12zM1093 438h12v12h-12zM1105 186h12v12h-12zM1105 450h12v12h-12zM1117 462h12v12h-12zM1129 462h12v12h-12zM1129 474h12v12h-12zM1141 474h12v12h-12zM1153 486h12v12h-12zM1165 486h12v12h-12zM1177 498h12v12h-12zM1189 186h12v12h-12zM1189 498h12v12h-12zM1201 510h12v12h-12zM1213 510h12v12h-12zM1225 510h12v12h-12zM1237 522h12v12h-12zM1249 522h12v12h-12zM1261 210h12v12h-12zM1261 522h12v12h-12zM1273 522h12v12h-12zM1285 522h12v12h-12zM1297 522h12v12h-12zM1309 522h12v12h-12zM1321 246h12v12h-12zM1321 522h12v12h-12zM1333 522h12v12h-12zM1345 522h12v12h-12zM1357 510h12v12h-12zM1369 510h12v12h-12zM1381 306h12v12h-12zM1381 498h12v12h-12zM1393 486h12v12h-12zM1393 498h12v12h-12zM1405 342h12v12h-12zM1405 474h12v12h-12zM1405 486h12v12h-12zM1417 366h12v12h-12zM1417 450h12v12h-12zM1417 462h12v12h-12z"/>
<path fill="#e8e8e8" d="M1021 270h12v12h-12zM1021 282h12v12h-12zM1021 294h12v12h-12zM1021 306h12v12h-12zM1033 246h12v12h-12zM1033 258h12v12h-12zM1033 270h12v12h-12zM1033 282h12v12h-12zM1033 294h12v12h-12zM1033 306h12v12h-12zM1033 318h12v12h-12zM1033 330h12v12h-12zM1033 342h12v12h-12zM1045 222h12v12h-12zM1045 234h12v12h-12zM1045 342h12v12h-12zM1045 354h12v12h-12zM1045 366h12v12h-12zM1057 210h12v12h-12zM1057 222h12v12h-12zM1057 366h12v12h-12zM1057 378h12v12h-12zM1057 390h12v12h-12zM1069 210h12v12h-12zM1069 390h12v12h-12zM1069 402h12v12h-12zM1081 198h12v12h-12zM1081 402h12v12h-12zM1081 414h12v12h-12zM1093 198h12v12h-12zM1093 414h12v12h-12zM1093 426h12v12h-12zM1105 426h12v12h-12zM1105 438h12v12h-12zM1117 186h12v12h-12zM1117 438h12v12h-12zM1117 450h12v12h-12zM1129 186h12v12h-12zM1129 450h12v12h-12zM1141 186h12v12h-12zM1141 462h12v12h-12zM1153 186h12v12h-12zM1153 462h12v12h-12zM1153 474h12v12h-12zM1165 186h12v12h-12zM1165 474h12v12h-12zM1177 186h12v12h-12zM1177 474h12v12h-12zM1177 486h12v12h-12zM1189 486h12v12h-12zM1201 486h12v12h-12zM1201 498h12v12h-12zM1213 498h12v12h-12zM1225 198h12v12h-12zM1225 498h12v12h-12zM1237 498h12v12h-12zM1237 510h12v12h-12zM1249 510h12v12h-12zM1261 510h12v12h-12zM1273 510h12v12h-12zM1285 510h12v12h-12zM1297 510h12v12h-12zM1309 510h12v12h-12zM1321 510h12v12h-12zM1333 258h12v12h-12zM1333 510h12v12h-12zM1345 270h12v12h-12zM1345 498h12v12h-12zM1345 510h12v12h-12zM1357 282h12v12h-12zM1357 498h12v12h-12zM1369 294h12v12h-12zM1369 486h12v12h-12zM1369 498h12v12h-12zM1381 486h12v12h-12zM1393 330h12v12h-12zM1393 474h12v12h-12zM1405 354h12v12h-12zM1405 450h12v12h-12zM1405 462h12v12h-12zM1417 378h12v12h-12zM1417 390h12v12h-12zM1417 402h12v12h-12zM1417 414h12v12h-12zM1417 426h12v12h-12zM1417 438h12v12h-12z"/>
<path fill="#eaeaea" d="M1045 246h12v12h-12zM1045 258h12v12h-12zM1045 270h12v12h-12zM1045 282h12v12h-12zM1045 294h12v12h-12zM1045 306h12v12h-12zM1045 318h12v12h-12zM1045 330h12v12h-12zM1057 234h12v12h-12zM1057 342h12v12h-12zM1057 354h12v12h-12zM1069 222h12v12h-12zM1069 366h12v12h-12zM1069 378h12v12h-12zM1081 210h12v12h-12zM1081 378h12v12h-12zM1081 390h12v12h-12zM1093 402h12v12h-12zM1105 198h12v12h-12zM1105 414h12v12h-12zM1117 198h12v12h-12zM1117 426h12v12h-12zM1129 426h12v12h-12zM1129 438h12v12h-12zM1141 438h12v12h-12zM1141 450h12v12h-12zM1153 450h12v12h-12zM1165 462h12v12h-12zM1177 462h12v12h-12zM1189 474h12v12h-12zM1201 474h12v12h-12zM1213 198h12v12h-12zM1213 474h12v12h-12zM1213 486h12v12h-12zM1225 486h12v12h-12zM1237 486h12v12h-12zM1249 210h12v12h-12zM1249 486h12v12h-12zM1249 498h12v12h-12zM1261 498h12v12h-12zM1273 222h12v12h-12zM1273 498h12v12h-12zM1285 498h12v12h-12zM1297 234h12v12h-12zM1297 498h12v12h-12zM1309 498h12v12h-12zM1321 498h12v12h-12zM1333 486h12v12h-12zM1333 498h12v12h-12zM1345 486h12v12h-12zM1357 486h12v12h-12zM1369 474h12v12h-12zM1381 318h12v12h-12zM1381 462h12v12h-12zM1381 474h12v12h-12zM1393 342h12v12h-12zM1393 450h12v12h-12zM1393 462h12v12h-12zM1405 366h12v12h-12zM1405 378h12v12h-12zM1405 414h12v12h-12zM1405 426h12v12h-12zM1405 438h12v12h-12z"/>
<path fill="#ececec" d="M1057 246h12v12h-12zM1057 258h12v12h-12zM1057 270h12v12h-12zM1057 282h12v12h-12zM1057 294h12v12h-12zM1057 306h12v12h-12zM1057 318h12v12h-12zM1057 330h12v12h-12zM1069 234h12v12h-12zM1069 246h12v12h-12zM1069 330h12v12h-12zM1069 342h12v12h-12zM1069 354h12v12h-12zM1081 222h12v12h-12zM1081 354h12v12h-12zM1081 366h12v12h-12zM1093 210h12v12h-12zM1093 378h12v12h-12zM1093 390h12v12h-12zM1105 210h12v12h-12zM1105 390h12v12h-12zM1105 402h12v12h-12zM1117 402h12v12h-12zM1117 414h12v12h-12zM1129 198h12v12h-12zM1129 414h12v12h-12zM1141 198h12v12h-12zM1141 426h12v12h-12zM1153 198h12v12h-12zM1153 426h12v12h-12zM1153 438h12v12h-12zM1165 198h12v12h-12zM1165 438h12v12h-12zM1165 450h12v12h-12zM1177 198h12v12h-12zM1177 450h12v12h-12zM1189 198h12v12h-12zM1189 450h12v12h-12zM1189 462h12v12h-12zM1201 198h12v12h-12zM1201 462h12v12h-12zM1213 462h12v12h-12zM1225 474h12v12h-12zM1237 210h12v12h-12zM1237 474h12v12h-12zM1249 474h12v12h-12zM1261 474h12v12h-12zM1261 486h12v12h-12zM1273 474h12v12h-12zM1273 486h12v12h-12zM1285 474h12v12h-12zM1285 486h12v12h-12zM1297 474h12v12h-12zM1297 486h12v12h-12zM1309 246h12v12h-12zM1309 474h12v12h-12zM1309 486h12v12h-12zM1321 474h12v12h-12zM1321 486h12v12h-12zM1333 474h12v12h-12zM1345 474h12v12h-12zM1357 462h12v12h-12zM1357 474h12v12h-12zM1369 306h12v12h-12zM1369 450h12v12h-12zM1369 462h12v12h-12zM1381 330h12v12h-12zM1381 438h12v12h-12zM1381 450h12v12h-12zM1393 354h12v12h-12zM1393 414h12v12h-12zM1393 426h12v12h-12zM1393 438h12v12h-12zM1405 390h12v12h-12zM1405 402h12v12h-12z"/>
<path fill="#eeeeee" d="M1069 258h12v12h-12zM1069 270h12v12h-12zM1069 282h12v12h-12zM1069 294h12v12h-12zM1069 306h12v12h-12zM1069 318h12v12h-12zM1081 234h12v12h-12zM1081 246h12v12h-12zM1081 258h12v12h-12zM1081 270h12v12h-12zM1081 294h12v12h-12zM1081 306h12v12h-12zM1081 318h12v12h-12zM1081 330h12v12h-12zM1081 342h12v12h-12zM1093 222h12v12h-12zM1093 234h12v12h-12zM1093 342h12v12h-12zM1093 354h12v12h-12zM1093 366h12v12h-12zM1105 222h12v12h-12zM1105 366h12v12h-12zM1105 378h12v12h-12zM1117 210h12v12h-12zM1117 378h12v12h-12zM1117 390h12v12h-12zM1129 210h12v12h-12zM1129 390h12v12h-12zM1129 402h12v12h-12zM1141 402h12v12h-12zM1141 414h12v12h-12zM1153 414h12v12h-12zM1165 426h12v12h-12zM1177 426h12v12h-12zM1177 438h12v12h-12zM1189 438h12v12h-12zM1201 438h12v12h-12zM1201 450h12v12h-12zM1213 450h12v12h-12zM1225 210h12v12h-12zM1225 450h12v12h-12zM1225 462h12v12h-12zM1237 450h12v12h-12zM1237 462h12v12h-12zM1249 462h12v12h-12zM1261 222h12v12h-12zM1261 462h12v12h-12zM1273 462h12v12h-12zM1285 234h12v12h-12zM1285 462h12v12h-12zM1297 462h12v12h-12zM1309 462h12v12h-12zM1321 258h12v12h-12zM1321 462h12v12h-12zM1333 270h12v12h-12zM1333 450h12v12h-12zM1333 462h12v12h-12zM1345 282h12v12h-12zM1345 450h12v12h-12zM1345 462h12v12h-12zM1357 294h12v12h-12zM1357 438h12v12h-12zM1357 450h12v12h-12zM1369 318h12v12h-12zM1369 426h12v12h-12zM1369 438h12v12h-12zM1381 342h12v12h-12zM1381 402h12v12h-12zM1381 414h12v12h-12zM1381 426h12v12h-12zM1393 366h12v12h-12zM1393 378h12v12h-12zM1393 390h12v12h-12zM1393 402h12v12h-12z"/>
<path fill="#f0f0f0" d="M1081 282h12v12h-12zM1093 246h12v12h-12zM1093 258h12v12h-12zM1093 270h12v12h-12zM1093 282h12v12h-12zM1093 294h12v12h-12zM1093 306h12v12h-12zM1093 318h12v12h-12zM1093 330h12v12h-12zM1105 234h12v12h-12zM1105 246h12v12h-12zM1105 318h12v12h-12zM1105 330h12v12h-12zM1105 342h12v12h-12zM1105 354h12v12h-12zM1117 222h12v12h-12zM1117 234h12v12h-12zM1117 342h12v12h-12zM1117 354h12v12h-12zM1117 366h12v12h-12zM1129 222h12v12h-12zM1129 366h12v12h-12zM1129 378h12v12h-12zM1141 210h12v12h-12zM1141 222h12v12h-12zM1141 378h12v12h-12zM1141 390h12v12h-12zM1153 210h12v12h-12zM1153 390h12v12h-12zM1153 402h12v12h-12zM1165 210h12v12h-12zM1165 402h12v12h-12zM1165 414h12v12h-12zM1177 210h12v12h-12zM1177 414h12v12h-12zM1189 210h12v12h-12zM1189 414h12v12h-12zM1189 426h12v12h-12zM1201 210h12v12h-12zM1201 426h12v12h-12zM1213 210h12v12h-12zM1213 426h12v12h-12zM1213 438h12v12h-12zM1225 438h12v12h-12zM1237 222h12v12h-12zM1237 438h12v12h-12zM1249 222h12v12h-12zM1249 438h12v12h-12zM1249 450h12v12h-12zM1261 438h12v12h-12zM1261 450h12v12h-12zM1273 234h12v12h-12zM1273 450h12v12h-12zM1285 450h12v12h-12zM1297 246h12v12h-12zM1297 450h12v12h-12zM1309 258h12v12h-12zM1309 438h12v12h-12zM1309 450h12v12h-12zM1321 270h12v12h-12zM1321 438h12v12h-12zM1321 450h12v12h-12zM1333 282h12v12h-12zM1333 438h12v12h-12zM1345 294h12v12h-12zM1345 426h12v12h-12zM1345 438h12v12h-12zM1357 306h12v12h-12zM1357 414h12v12h-12zM1357 426h12v12h-12zM1369 330h12v12h-12zM1369 342h12v12h-12zM1369 390h12v12h-12zM1369 402h12v12h-12zM1369 414h12v12h-12zM1381 354h12v12h-12zM1381 366h12v12h-12zM1381 378h12v12h-12zM1381 390h12v12h-12z"/>
<path fill="#f2f2f2" d="M1105 258h12v12h-12zM1105 270h12v12h-12zM1105 282h12v12h-12zM1105 294h12v12h-12zM1105 306h12v12h-12zM1117 246h12v12h-12zM1117 258h12v12h-12zM1117 270h12v12h-12zM1117 282h12v12h-12zM1117 294h12v12h-12zM1117 306h12v12h-12zM1117 318h12v12h-12zM1117 330h12v12h-12zM1129 234h12v12h-12zM1129 246h12v12h-12zM1129 330h12v12h-12zM1129 342h12v12h-12zM1129 354h12v12h-12zM1141 234h12v12h-12zM1141 342h12v12h-12zM1141 354h12v12h-12zM1141 366h12v12h-12zM1153 222h12v12h-12zM1153 366h12v12h-12zM1153 378h12v12h-12zM1165 222h12v12h-12zM1165 378h12v12h-12zM1165 390h12v12h-12zM1177 222h12v12h-12zM1177 390h12v12h-12zM1177 402h12v12h-12zM1189 222h12v12h-12zM1189 390h12v12h-12zM1189 402h12v12h-12zM1201 222h12v12h-12zM1201 402h12v12h-12zM1201 414h12v12h-12zM1213 222h12v12h-12zM1213 402h12v12h-12zM1213 414h12v12h-12zM1225 222h12v12h-12zM1225 414h12v12h-12zM1225 426h12v12h-12zM1237 414h12v12h-12zM1237 426h12v12h-12zM1249 234h12v12h-12zM1249 426h12v12h-12zM1261 234h12v12h-12zM1261 426h12v12h-12zM1273 426h12v12h-12zM1273 438h12v12h-12zM1285 246h12v12h-12zM1285 426h12v12h-12zM1285 438h12v12h-12zM1297 258h12v12h-12zM1297 426h12v12h-12zM1297 438h12v12h-12zM1309 270h12v12h-12zM1309 426h12v12h-12zM1321 282h12v12h-12zM1321 414h12v12h-12zM1321 426h12v12h-12zM1333 294h12v12h-12zM1333 414h12v12h-12zM1333 426h12v12h-12zM1345 306h12v12h-12zM1345 402h12v12h-12zM1345 414h12v12h-12zM1357 318h12v12h-12zM1357 330h12v12h-12zM1357 342h12v12h-12zM1357 354h12v12h-12zM1357 366h12v12h-12zM1357 378h12v12h-12zM1357 390h12v12h-12zM1357 402h12v12h-12zM1369 354h12v12h-12zM1369 366h12v12h-12zM1369 378h12v12h-12z"/>
<path fill="#f4f4f4" d="M1129 258h12v12h-12zM1129 270h12v12h-12zM1129 282h12v12h-12zM1129 294h12v12h-12zM1129 306h12v12h-12zM1129 318h12v12h-12zM1141 246h12v12h-12zM1141 258h12v12h-12zM1141 270h12v12h-12zM1141 282h12v12h-12zM1141 294h12v12h-12zM1141 306h12v12h-12zM1141 318h12v12h-12zM1141 330h12v12h-12zM1153 234h12v12h-12zM1153 246h12v12h-12zM1153 258h12v12h-12zM1153 318h12v12h-12zM1153 330h12v12h-12zM1153 342h12v12h-12zM1153 354h12v12h-12zM1165 234h12v12h-12zM1165 246h12v12h-12zM1165 342h12v12h-12zM1165 354h12v12h-12zM1165 366h12v12h-12zM1177 234h12v12h-12zM1177 354h12v12h-12zM1177 366h12v12h-12zM1177 378h12v12h-12zM1189 234h12v12h-12zM1189 366h12v12h-12zM1189 378h12v12h-12zM1201 234h12v12h-12zM1201 378h12v12h-12zM1201 390h12v12h-12zM1213 234h12v12h-12zM1213 378h12v12h-12zM1213 390h12v12h-12zM1225 234h12v12h-12zM1225 390h12v12h-12zM1225 402h12v12h-12zM1237 234h12v12h-12zM1237 390h12v12h-12zM1237 402h12v12h-12zM1249 246h12v12h-12zM1249 402h12v12h-12zM1249 414h12v12h-12zM1261 246h12v12h-12zM1261 402h12v12h-12zM1261 414h12v12h-12zM1273 246h12v12h-12zM1273 402h12v12h-12zM1273 414h12v12h-12zM1285 258h12v12h-12zM1285 402h12v12h-12zM1285 414h12v12h-12zM1297 270h12v12h-12zM1297 402h12v12h-12zM1297 414h12v12h-12zM1309 282h12v12h-12zM1309 390h12v12h-12zM1309 402h12v12h-12zM1309 414h12v12h-12zM1321 294h12v12h-12zM1321 390h12v12h-12zM1321 402h12v12h-12zM1333 306h12v12h-12zM1333 318h12v12h-12zM1333 366h12v12h-12zM1333 378h12v12h-12zM1333 390h12v12h-12zM1333 402h12v12h-12zM1345 318h12v12h-12zM1345 330h12v12h-12zM1345 342h12v12h-12zM1345 354h12v12h-12zM1345 366h12v12h-12zM1345 378h12v12h-12zM1345 390h12v12h-12z"/>
<path fill="#f6f6f6" d="M1153 270h12v12h-12zM1153 282h12v12h-12zM1153 294h12v12h-12zM1153 306h12v12h-12zM1165 258h12v12h-12zM1165 270h12v12h-12zM1165 282h12v12h-12zM1165 294h12v12h-12zM1165 306h12v12h-12zM1165 318h12v12h-12zM1165 330h12v12h-12zM1177 246h12v12h-12zM1177 258h12v12h-12zM1177 270h12v12h-12zM1177 282h12v12h-12zM1177 294h12v12h-12zM1177 306h12v12h-12zM1177 318h12v12h-12zM1177 330h12v12h-12zM1177 342h12v12h-12zM1189 246h12v12h-12zM1189 258h12v12h-12zM1189 270h12v12h-12zM1189 318h12v12h-12zM1189 330h12v12h-12zM1189 342h12v12h-12zM1189 354h12v12h-12zM1201 246h12v12h-12zM1201 258h12v12h-12zM1201 342h12v12h-12zM1201 354h12v12h-12zM1201 366h12v12h-12zM1213 246h12v12h-12zM1213 258h12v12h-12zM1213 354h12v12h-12zM1213 366h12v12h-12zM1225 246h12v12h-12zM1225 258h12v12h-12zM1225 354h12v12h-12zM1225 366h12v12h-12zM1225 378h12v12h-12zM1237 246h12v12h-12zM1237 258h12v12h-12zM1237 366h12v12h-12zM1237 378h12v12h-12zM1249 258h12v12h-12zM1249 366h12v12h-12zM1249 378h12v12h-12zM1249 390h12v12h-12zM1261 258h12v12h-12zM1261 366h12v12h-12zM1261 378h12v12h-12zM1261 390h12v12h-12zM1273 258h12v12h-12zM1273 270h12v12h-12zM1273 366h12v12h-12zM1273 378h12v12h-12zM1273 390h12v12h-12zM1285 270h12v12h-12zM1285 282h12v12h-12zM1285 366h12v12h-12zM1285 378h12v12h-12zM1285 390h12v12h-12zM1297 282h12v12h-12zM1297 294h12v12h-12zM1297 366h12v12h-12zM1297 378h12v12h-12zM1297 390h12v12h-12zM1309 294h12v12h-12zM1309 306h12v12h-12zM1309 318h12v12h-12zM1309 330h12v12h-12zM1309 342h12v12h-12zM1309 354h12v12h-12zM1309 366h12v12h-12zM1309 378h12v12h-12zM1321 306h12v12h-12zM1321 318h12v12h-12zM1321 330h12v12h-12zM1321 342h12v12h-12zM1321 354h12v12h-12zM1321 366h12v12h-12zM1321 378h12v12h-12zM1333 330h12v12h-12zM1333 342h12v12h-12zM1333 354h12v12h-12z"/>
<path fill="#f8f8f8" d="M1189 282h12v12h-12zM1189 294h12v12h-12zM1189 306h12v12h-12zM1201 270h12v12h-12zM1201 282h12v12h-12zM1201 294h12v12h-12zM1201 306h12v12h-12zM1201 318h12v12h-12zM1201 330h12v12h-12zM1213 270h12v12h-12zM1213 282h12v12h-12zM1213 294h12v12h-12zM1213 306h12v12h-12zM1213 318h12v12h-12zM1213 330h12v12h-12zM1213 342h12v12h-12zM1225 270h12v12h-12zM1225 282h12v12h-12zM1225 294h12v12h-12zM1225 306h12v12h-12zM1225 318h12v12h-12zM1225 330h12v12h-12zM1225 342h12v12h-12zM1237 270h12v12h-12zM1237 282h12v12h-12zM1237 294h12v12h-12zM1237 306h12v12h-12zM1237 318h12v12h-12zM1237 330h12v12h-12zM1237 342h12v12h-12zM1237 354h12v12h-12zM1249 270h12v12h-12zM1249 282h12v12h-12zM1249 294h12v12h-12zM1249 306h12v12h-12zM1249 318h12v12h-12zM1249 330h12v12h-12zM1249 342h12v12h-12zM1249 354h12v12h-12zM1261 270h12v12h-12zM1261 282h12v12h-12zM1261 294h12v12h-12zM1261 306h12v12h-12zM1261 318h12v12h-12zM1261 330h12v12h-12zM1261 342h12v12h-12zM1261 354h12v12h-12zM1273 282h12v12h-12zM1273 294h12v12h-12zM1273 306h12v12h-12zM1273 318h12v12h-12zM1273 330h12v12h-12zM1273 342h12v12h-12zM1273 354h12v12h-12zM1285 294h12v12h-12zM1285 306h12v12h-12zM1285 318h12v12h-12zM1285 330h12v12h-12zM1285 342h12v12h-12zM1285 354h12v12h-12zM1297 306h12v12h-12zM1297 318h12v12h-12zM1297 330h12v12h-12zM1297 342h12v12h-12zM1297 354h12v12h-12z"/>
</g></g>
<g clip-path="url(#cp)">
<path fill="#000" fill-opacity="0.10" d="M1304.3 235A44.9 0.2 25.5 1 0 1223.2 196.3A44.9 0.2 25.5 1 0 1304.3 235ZM1014.1 960.2A44.9 0.3 -174.9 1 0 1103.6 968.2A44.9 0.3 -174.9 1 0 1014.1 960.2ZM1366.5 283A44.9 0.4 36.9 1 0 1294.6 229.1A44.9 0.4 36.9 1 0 1366.5 283ZM1425.5 353.4A44.9 0.7 50.2 1 0 1367.9 284.4A44.9 0.7 50.2 1 0 1425.5 353.4ZM1190.3 956.4A44.9 0.7 159.4 1 0 1274.5 924.9A44.9 0.7 159.4 1 0 1190.3 956.4ZM1468.6 440.7A44.9 0.9 64.3 1 0 1429.6 359.8A44.9 0.9 64.3 1 0 1468.6 440.7ZM1488.6 530.4A44.9 1.1 77.6 1 0 1469.2 442.7A44.9 1.1 77.6 1 0 1488.6 530.4ZM1340.9 882A44.9 1.1 135 1 0 1404.5 818.5A44.9 1.1 135 1 0 1340.9 882ZM1488.9 609.1A44.9 1.1 88.9 1 0 1487.3 519.2A44.9 1.1 88.9 1 0 1488.9 609.1ZM1451.1 744.3A44.9 1.2 109.3 1 0 1480.8 659.5A44.9 1.2 109.3 1 0 1451.1 744.3ZM711.7 471A44.9 4 -81.8 1 0 698.9 559.9A44.9 4 -81.8 1 0 711.7 471ZM918.7 217.8A44.9 4.6 -32.9 1 0 843.3 266.6A44.9 4.6 -32.9 1 0 918.7 217.8ZM784.8 326.2A44.9 4.7 -58.1 1 0 737.4 402.4A44.9 4.7 -58.1 1 0 784.8 326.2ZM1245.6 207.6A44.9 5.2 16.1 1 0 1159.3 182.7A44.9 5.2 16.1 1 0 1245.6 207.6ZM940.1 934.4A44.9 5.2 -163.6 1 0 1026.3 959.8A44.9 5.2 -163.6 1 0 940.1 934.4ZM1086.2 177.6A44.9 5.4 -7.7 1 0 997.1 189.6A44.9 5.4 -7.7 1 0 1086.2 177.6ZM1099.1 964.3A44.9 6.4 172.7 1 0 1188.3 952.9A44.9 6.4 172.7 1 0 1099.1 964.3ZM1474 671.3A44.9 6.4 98.1 1 0 1486.7 582.3A44.9 6.4 98.1 1 0 1474 671.3ZM1266.7 924.3A44.9 6.4 147.4 1 0 1342.4 875.8A44.9 6.4 147.4 1 0 1266.7 924.3ZM1400.4 816A44.9 7 122 1 0 1448.1 739.8A44.9 7 122 1 0 1400.4 816ZM702.6 557.4A44.9 7.3 -94.5 1 0 709.7 646.9A44.9 7.3 -94.5 1 0 702.6 557.4ZM864.9 887.5A44.9 8.2 -150.7 1 0 943.2 931.5A44.9 8.2 -150.7 1 0 864.9 887.5ZM711 646A44.9 8.2 -107.6 1 0 738.2 731.7A44.9 8.2 -107.6 1 0 711 646ZM1319.6 254A44.9 8.7 28.8 1 0 1240.8 210.7A44.9 8.7 28.8 1 0 1319.6 254ZM799.5 826.3A44.9 8.7 -137.5 1 0 865.7 887A44.9 8.7 -137.5 1 0 799.5 826.3ZM743.8 741.6A44.9 8.7 -122.5 1 0 792.1 817.4A44.9 8.7 -122.5 1 0 743.8 741.6ZM1481.7 584.5A44.9 9.5 85.3 1 0 1474.3 494.9A44.9 9.5 85.3 1 0 1481.7 584.5ZM1384.7 315.1A44.9 9.7 41.9 1 0 1317.9 255.1A44.9 9.7 41.9 1 0 1384.7 315.1ZM745.8 401.9A44.9 9.8 -70.7 1 0 716.1 486.7A44.9 9.8 -70.7 1 0 745.8 401.9ZM1473.2 495.6A44.9 10.2 72 1 0 1445.4 410.1A44.9 10.2 72 1 0 1473.2 495.6ZM1440.3 399.8A44.9 10.3 57 1 0 1391.3 324.5A44.9 10.3 57 1 0 1440.3 399.8ZM853.5 269.1A44.9 10.3 -45.2 1 0 790.2 332.9A44.9 10.3 -45.2 1 0 853.5 269.1ZM999.5 197.6A44.9 10.7 -20.9 1 0 915.6 229.6A44.9 10.7 -20.9 1 0 999.5 197.6ZM1170.4 193.7A44.9 10.8 4.7 1 0 1080.8 186.3A44.9 10.8 4.7 1 0 1170.4 193.7ZM1012.7 947.1A44.9 11.3 -174.5 1 0 1102.1 955.7A44.9 11.3 -174.5 1 0 1012.7 947.1ZM1183.2 943.4A44.9 12.1 159.8 1 0 1267.5 912.3A44.9 12.1 159.8 1 0 1183.2 943.4ZM1437.2 739.6A44.9 12.2 109.3 1 0 1467 654.8A44.9 12.2 109.3 1 0 1437.2 739.6ZM1329.2 872.1A44.9 12.4 135.2 1 0 1392.9 808.7A44.9 12.4 135.2 1 0 1329.2 872.1ZM724.8 490.2A44.9 13.8 -84.4 1 0 716.1 579.6A44.9 13.8 -84.4 1 0 724.8 490.2ZM928 235.1A44.9 14.7 -33.1 1 0 852.8 284.2A44.9 14.7 -33.1 1 0 928 235.1ZM927.5 907.3A44.9 14.8 -160.5 1 0 1012.2 937.3A44.9 14.8 -160.5 1 0 927.5 907.3ZM1254.1 232.8A44.9 14.9 18.4 1 0 1168.8 204.4A44.9 14.9 18.4 1 0 1254.1 232.8ZM803 338.2A44.9 15.4 -58.2 1 0 755.6 414.6A44.9 15.4 -58.2 1 0 803 338.2ZM1456.6 650.7A44.9 16 95.4 1 0 1465 561.3A44.9 16 95.4 1 0 1456.6 650.7ZM1086.9 200.6A44.9 16.1 -8.1 1 0 997.9 213.2A44.9 16.1 -8.1 1 0 1086.9 200.6ZM1252.6 905.3A44.9 16.5 147.6 1 0 1328.5 857.1A44.9 16.5 147.6 1 0 1252.6 905.3ZM725.9 583.4A44.9 16.8 -98.9 1 0 739.7 672.2A44.9 16.8 -98.9 1 0 725.9 583.4ZM1093.5 939.2A44.9 17 173.1 1 0 1182.7 928.4A44.9 17 173.1 1 0 1093.5 939.2ZM852.7 846.5A44.9 17.5 -145.8 1 0 927 897A44.9 17.5 -145.8 1 0 852.7 846.5ZM1377.4 802.3A44.9 17.6 122.1 1 0 1425.1 726.2A44.9 17.6 122.1 1 0 1377.4 802.3ZM1327.8 293.2A44.9 18.1 32.9 1 0 1252.4 244.3A44.9 18.1 32.9 1 0 1327.8 293.2ZM746.4 677.2A44.9 18.2 -114 1 0 783 759.3A44.9 18.2 -114 1 0 746.4 677.2ZM791.3 770.8A44.9 18.4 -130.5 1 0 849.7 839.1A44.9 18.4 -130.5 1 0 791.3 770.8ZM1454.5 557A44.9 18.8 80.6 1 0 1439.8 468.4A44.9 18.8 80.6 1 0 1454.5 557ZM1388.8 369A44.9 19.6 48.3 1 0 1329 301.9A44.9 19.6 48.3 1 0 1388.8 369ZM1433.7 462.8A44.9 19.8 65 1 0 1395.8 381.4A44.9 19.8 65 1 0 1433.7 462.8ZM873.9 291.1A44.9 19.9 -45.4 1 0 810.8 355A44.9 19.9 -45.4 1 0 873.9 291.1ZM1008.6 226.7A44.9 20.2 -21.2 1 0 924.8 259.2A44.9 20.2 -21.2 1 0 1008.6 226.7ZM773.5 418.6A44.9 20.2 -71.8 1 0 745.4 504A44.9 20.2 -71.8 1 0 773.5 418.6ZM1171.4 228.9A44.9 21.1 5.4 1 0 1082 220.5A44.9 21.1 5.4 1 0 1171.4 228.9ZM1007.1 909.8A44.9 21.5 -173 1 0 1096.3 920.8A44.9 21.5 -173 1 0 1007.1 909.8ZM1169.7 912.4A44.9 21.5 160.1 1 0 1254.2 881.8A44.9 21.5 160.1 1 0 1169.7 912.4ZM1304.2 848.6A44.9 21.8 135.4 1 0 1368.2 785.5A44.9 21.8 135.4 1 0 1304.2 848.6ZM1404.9 721.4A44.9 22.3 108.3 1 0 1433 636.1A44.9 22.3 108.3 1 0 1404.9 721.4ZM944.7 263.2A44.9 22.8 -33.4 1 0 869.6 312.6A44.9 22.8 -33.4 1 0 944.7 263.2ZM762.1 514.2A44.9 23.9 -87.9 1 0 758.8 604A44.9 23.9 -87.9 1 0 762.1 514.2ZM1232.1 875.7A44.9 24.4 147.9 1 0 1308.2 827.9A44.9 24.4 147.9 1 0 1232.1 875.7ZM921.2 854.9A44.9 24.8 -156.4 1 0 1003.6 890.8A44.9 24.8 -156.4 1 0 921.2 854.9ZM1256.2 283.2A44.9 25 21.5 1 0 1172.6 250.2A44.9 25 21.5 1 0 1256.2 283.2ZM844.6 357.1A44.9 25.3 -57.2 1 0 795.9 432.6A44.9 25.3 -57.2 1 0 844.6 357.1ZM1084.1 245.9A44.9 25.8 -9.7 1 0 995.5 260.9A44.9 25.8 -9.7 1 0 1084.1 245.9ZM1415.1 625.3A44.9 25.9 91.6 1 0 1417.6 535.5A44.9 25.9 91.6 1 0 1415.1 625.3ZM770.9 608.1A44.9 25.9 -104.4 1 0 793.3 695.2A44.9 25.9 -104.4 1 0 770.9 608.1ZM852.6 785.1A44.9 26.4 -139.5 1 0 921 843.5A44.9 26.4 -139.5 1 0 852.6 785.1ZM1091.8 891.9A44.9 26.7 172.3 1 0 1180.9 880A44.9 26.7 172.3 1 0 1091.8 891.9ZM802.5 699.9A44.9 27 -121.9 1 0 850 776.2A44.9 27 -121.9 1 0 802.5 699.9ZM1324.4 352.9A44.9 27.1 38.4 1 0 1253.9 297.1A44.9 27.1 38.4 1 0 1324.4 352.9ZM1331.2 782A44.9 27.2 123.4 1 0 1380.7 707A44.9 27.2 123.4 1 0 1331.2 782ZM1405.9 530.9A44.9 27.6 74.4 1 0 1381.7 444.4A44.9 27.6 74.4 1 0 1405.9 530.9ZM1374.2 438.5A44.9 28.2 56.3 1 0 1324.3 363.7A44.9 28.2 56.3 1 0 1374.2 438.5ZM922.2 315.4A44.9 28.5 -42.2 1 0 855.7 375.8A44.9 28.5 -42.2 1 0 922.2 315.4ZM1006.5 277.1A44.9 28.6 -25 1 0 925 315.1A44.9 28.6 -25 1 0 1006.5 277.1ZM1167.7 860.4A44.9 29.8 157 1 0 1250.4 825.3A44.9 29.8 157 1 0 1167.7 860.4ZM824.9 443.7A44.9 29.9 -73.3 1 0 799.1 529.8A44.9 29.9 -73.3 1 0 824.9 443.7ZM1251.9 822.7A44.9 30 139.1 1 0 1319.8 764A44.9 30 139.1 1 0 1251.9 822.7ZM1170.3 289.6A44.9 30.6 6.3 1 0 1081 279.7A44.9 30.6 6.3 1 0 1170.3 289.6ZM1004.1 846.9A44.9 30.9 -170.8 1 0 1092.8 861.2A44.9 30.9 -170.8 1 0 1004.1 846.9ZM1349.2 695A44.9 31.6 106.7 1 0 1375 608.9A44.9 31.6 106.7 1 0 1349.2 695ZM820 539.3A44.9 32.5 -92.7 1 0 824.2 629A44.9 32.5 -92.7 1 0 820 539.3ZM829.3 628A44.9 33.1 -111.6 1 0 862.4 711.5A44.9 33.1 -111.6 1 0 829.3 628ZM924.3 781.8A44.9 33.1 -150.7 1 0 1002.7 825.8A44.9 33.1 -150.7 1 0 924.3 781.8ZM865.6 712.9A44.9 33.3 -131.4 1 0 925 780.3A44.9 33.3 -131.4 1 0 865.6 712.9ZM1249.8 354.3A44.9 33.4 26 1 0 1169.1 314.9A44.9 33.4 26 1 0 1249.8 354.3ZM903.2 387A44.9 33.6 -55.7 1 0 852.6 461.2A44.9 33.6 -55.7 1 0 903.2 387ZM1084.4 310A44.9 34 -12 1 0 996.5 328.7A44.9 34 -12 1 0 1084.4 310ZM1353.9 599.1A44.9 34 86.2 1 0 1347.8 509.4A44.9 34 86.2 1 0 1353.9 599.1ZM1308.9 423.8A44.9 34.1 45.6 1 0 1246 359.6A44.9 34.1 45.6 1 0 1308.9 423.8ZM1345.1 509.7A44.9 34.3 66.2 1 0 1308.7 427.5A44.9 34.3 66.2 1 0 1345.1 509.7ZM1087.6 825.7A44.9 34.7 171.3 1 0 1176.4 812.1A44.9 34.7 171.3 1 0 1087.6 825.7ZM992.2 340.3A44.9 34.9 -34 1 0 917.7 390.6A44.9 34.9 -34 1 0 992.2 340.3ZM1268.6 750.7A44.9 35.1 125.4 1 0 1320.6 677.5A44.9 35.1 125.4 1 0 1268.6 750.7ZM1178.7 796.1A44.9 36 148.5 1 0 1255.4 749.2A44.9 36 148.5 1 0 1178.7 796.1ZM890 472.4A44.9 37.1 -75.5 1 0 867.6 559.4A44.9 37.1 -75.5 1 0 890 472.4ZM1167.3 364.7A44.9 37.7 7.7 1 0 1078.2 352.7A44.9 37.7 7.7 1 0 1167.3 364.7ZM888 642.6A44.9 37.8 -120.9 1 0 934.2 719.6A44.9 37.8 -120.9 1 0 888 642.6ZM1004.3 769.4A44.9 37.8 -167.6 1 0 1092.1 788.7A44.9 37.8 -167.6 1 0 1004.3 769.4ZM884.1 561.3A44.9 38.4 -99.6 1 0 899 649.9A44.9 38.4 -99.6 1 0 884.1 561.3ZM1281.1 665.4A44.9 38.4 104.3 1 0 1303.2 578.3A44.9 38.4 104.3 1 0 1281.1 665.4ZM1285.2 493.5A44.9 38.6 55.2 1 0 1234 419.7A44.9 38.6 55.2 1 0 1285.2 493.5ZM936 702.5A44.9 38.7 -142.3 1 0 1007.1 757.4A44.9 38.7 -142.3 1 0 936 702.5ZM1236.7 431.9A44.9 39.1 32.6 1 0 1161 383.4A44.9 39.1 32.6 1 0 1236.7 431.9ZM1288.3 575.9A44.9 39.4 77.9 1 0 1269.5 488A44.9 39.4 77.9 1 0 1288.3 575.9ZM979.5 421.4A44.9 39.8 -51.1 1 0 923 491.3A44.9 39.8 -51.1 1 0 979.5 421.4ZM1080.6 386.5A44.9 40 -18.1 1 0 995.2 414.5A44.9 40 -18.1 1 0 1080.6 386.5ZM1088.1 747A44.9 40.6 167.1 1 0 1175.7 726.9A44.9 40.6 167.1 1 0 1088.1 747ZM1188.9 714.8A44.9 40.8 131.3 1 0 1248.2 647.3A44.9 40.8 131.3 1 0 1188.9 714.8ZM947 603.8A44.9 41.8 -119.8 1 0 991.6 681.8A44.9 41.8 -119.8 1 0 947 603.8ZM962.3 510.1A44.9 42.1 -83 1 0 951.4 599.3A44.9 42.1 -83 1 0 962.3 510.1ZM1226.2 530.6A44.9 42.4 53.9 1 0 1173.2 458A44.9 42.4 53.9 1 0 1226.2 530.6ZM1002.8 673.1A44.9 42.5 -157.3 1 0 1085.7 707.8A44.9 42.5 -157.3 1 0 1002.8 673.1ZM1168.2 457.3A44.9 42.5 13.8 1 0 1081 436A44.9 42.5 13.8 1 0 1168.2 457.3ZM1207.8 627.1A44.9 42.9 95.3 1 0 1216.1 537.6A44.9 42.9 95.3 1 0 1207.8 627.1ZM1074.8 471.3A44.9 43.7 -37 1 0 1003 525.3A44.9 43.7 -37 1 0 1074.8 471.3ZM1089.5 659.5A44.9 44.1 152.3 1 0 1169 617.7A44.9 44.1 152.3 1 0 1089.5 659.5ZM1024.7 553.7A44.9 44.5 -114.5 1 0 1061.9 635.5A44.9 44.5 -114.5 1 0 1024.7 553.7ZM1155.7 574.7A44.9 44.7 46.2 1 0 1093.5 509.8A44.9 44.7 46.2 1 0 1155.7 574.7Z"/>
<path fill="url(#bw)" d="M1304.3 235A44.9 0.2 25.5 1 0 1223.2 196.3A44.9 0.2 25.5 1 0 1304.3 235Z"/>
<path fill="url(#bw)" d="M1014.1 960.2A44.9 0.3 -174.9 1 0 1103.6 968.2A44.9 0.3 -174.9 1 0 1014.1 960.2Z"/>
<path fill="url(#bw)" d="M1366.5 283A44.9 0.4 36.9 1 0 1294.6 229.1A44.9 0.4 36.9 1 0 1366.5 283Z"/>
<path fill="url(#bw)" d="M1425.5 353.4A44.9 0.7 50.2 1 0 1367.9 284.4A44.9 0.7 50.2 1 0 1425.5 353.4Z"/>
<path fill="url(#bw)" d="M1190.3 956.4A44.9 0.7 159.4 1 0 1274.5 924.9A44.9 0.7 159.4 1 0 1190.3 956.4Z"/>
<path fill="url(#bw)" d="M1468.6 440.7A44.9 0.9 64.3 1 0 1429.6 359.8A44.9 0.9 64.3 1 0 1468.6 440.7Z"/>
<path fill="url(#bw)" d="M1488.6 530.4A44.9 1.1 77.6 1 0 1469.2 442.7A44.9 1.1 77.6 1 0 1488.6 530.4Z"/>
<path fill="url(#bw)" d="M1340.9 882A44.9 1.1 135 1 0 1404.5 818.5A44.9 1.1 135 1 0 1340.9 882Z"/>
<path fill="url(#bw)" d="M1488.9 609.1A44.9 1.1 88.9 1 0 1487.3 519.2A44.9 1.1 88.9 1 0 1488.9 609.1Z"/>
<path fill="url(#bw)" d="M1451.1 744.3A44.9 1.2 109.3 1 0 1480.8 659.5A44.9 1.2 109.3 1 0 1451.1 744.3Z"/>
<path fill="url(#bw)" d="M711.7 471A44.9 4 -81.8 1 0 698.9 559.9A44.9 4 -81.8 1 0 711.7 471Z"/>
<path fill="url(#bw)" d="M918.7 217.8A44.9 4.6 -32.9 1 0 843.3 266.6A44.9 4.6 -32.9 1 0 918.7 217.8Z"/>
<path fill="url(#bw)" d="M784.8 326.2A44.9 4.7 -58.1 1 0 737.4 402.4A44.9 4.7 -58.1 1 0 784.8 326.2Z"/>
<path fill="url(#bw)" d="M1245.6 207.6A44.9 5.2 16.1 1 0 1159.3 182.7A44.9 5.2 16.1 1 0 1245.6 207.6Z"/>
<path fill="url(#bw)" d="M940.1 934.4A44.9 5.2 -163.6 1 0 1026.3 959.8A44.9 5.2 -163.6 1 0 940.1 934.4Z"/>
<path fill="url(#bw)" d="M1086.2 177.6A44.9 5.4 -7.7 1 0 997.1 189.6A44.9 5.4 -7.7 1 0 1086.2 177.6Z"/>
<path fill="url(#bw)" d="M1099.1 964.3A44.9 6.4 172.7 1 0 1188.3 952.9A44.9 6.4 172.7 1 0 1099.1 964.3Z"/>
<path fill="url(#bw)" d="M1474 671.3A44.9 6.4 98.1 1 0 1486.7 582.3A44.9 6.4 98.1 1 0 1474 671.3Z"/>
<path fill="url(#bw)" d="M1266.7 924.3A44.9 6.4 147.4 1 0 1342.4 875.8A44.9 6.4 147.4 1 0 1266.7 924.3Z"/>
<path fill="url(#bw)" d="M1400.4 816A44.9 7 122 1 0 1448.1 739.8A44.9 7 122 1 0 1400.4 816Z"/>
<path fill="url(#bw)" d="M702.6 557.4A44.9 7.3 -94.5 1 0 709.7 646.9A44.9 7.3 -94.5 1 0 702.6 557.4Z"/>
<path fill="url(#bw)" d="M864.9 887.5A44.9 8.2 -150.7 1 0 943.2 931.5A44.9 8.2 -150.7 1 0 864.9 887.5Z"/>
<path fill="url(#bw)" d="M711 646A44.9 8.2 -107.6 1 0 738.2 731.7A44.9 8.2 -107.6 1 0 711 646Z"/>
<path fill="url(#bw)" d="M1319.6 254A44.9 8.7 28.8 1 0 1240.8 210.7A44.9 8.7 28.8 1 0 1319.6 254Z"/>
<path fill="url(#bw)" d="M799.5 826.3A44.9 8.7 -137.5 1 0 865.7 887A44.9 8.7 -137.5 1 0 799.5 826.3Z"/>
<path fill="url(#bw)" d="M743.8 741.6A44.9 8.7 -122.5 1 0 792.1 817.4A44.9 8.7 -122.5 1 0 743.8 741.6Z"/>
<path fill="url(#bw)" d="M1481.7 584.5A44.9 9.5 85.3 1 0 1474.3 494.9A44.9 9.5 85.3 1 0 1481.7 584.5Z"/>
<path fill="url(#bw)" d="M1384.7 315.1A44.9 9.7 41.9 1 0 1317.9 255.1A44.9 9.7 41.9 1 0 1384.7 315.1Z"/>
<path fill="url(#bw)" d="M745.8 401.9A44.9 9.8 -70.7 1 0 716.1 486.7A44.9 9.8 -70.7 1 0 745.8 401.9Z"/>
<path fill="url(#bw)" d="M1473.2 495.6A44.9 10.2 72 1 0 1445.4 410.1A44.9 10.2 72 1 0 1473.2 495.6Z"/>
<path fill="url(#bw)" d="M1440.3 399.8A44.9 10.3 57 1 0 1391.3 324.5A44.9 10.3 57 1 0 1440.3 399.8Z"/>
<path fill="url(#bw)" d="M853.5 269.1A44.9 10.3 -45.2 1 0 790.2 332.9A44.9 10.3 -45.2 1 0 853.5 269.1Z"/>
<path fill="url(#bw)" d="M999.5 197.6A44.9 10.7 -20.9 1 0 915.6 229.6A44.9 10.7 -20.9 1 0 999.5 197.6Z"/>
<path fill="url(#bw)" d="M1170.4 193.7A44.9 10.8 4.7 1 0 1080.8 186.3A44.9 10.8 4.7 1 0 1170.4 193.7Z"/>
<path fill="url(#bw)" d="M1012.7 947.1A44.9 11.3 -174.5 1 0 1102.1 955.7A44.9 11.3 -174.5 1 0 1012.7 947.1Z"/>
<path fill="url(#bw)" d="M1183.2 943.4A44.9 12.1 159.8 1 0 1267.5 912.3A44.9 12.1 159.8 1 0 1183.2 943.4Z"/>
<path fill="url(#bw)" d="M1437.2 739.6A44.9 12.2 109.3 1 0 1467 654.8A44.9 12.2 109.3 1 0 1437.2 739.6Z"/>
<path fill="url(#bw)" d="M1329.2 872.1A44.9 12.4 135.2 1 0 1392.9 808.7A44.9 12.4 135.2 1 0 1329.2 872.1Z"/>
<path fill="url(#bw)" d="M724.8 490.2A44.9 13.8 -84.4 1 0 716.1 579.6A44.9 13.8 -84.4 1 0 724.8 490.2Z"/>
<path fill="url(#bw)" d="M928 235.1A44.9 14.7 -33.1 1 0 852.8 284.2A44.9 14.7 -33.1 1 0 928 235.1Z"/>
<path fill="url(#bw)" d="M927.5 907.3A44.9 14.8 -160.5 1 0 1012.2 937.3A44.9 14.8 -160.5 1 0 927.5 907.3Z"/>
<path fill="url(#bw)" d="M1254.1 232.8A44.9 14.9 18.4 1 0 1168.8 204.4A44.9 14.9 18.4 1 0 1254.1 232.8Z"/>
<path fill="url(#bw)" d="M803 338.2A44.9 15.4 -58.2 1 0 755.6 414.6A44.9 15.4 -58.2 1 0 803 338.2Z"/>
<path fill="url(#bw)" d="M1456.6 650.7A44.9 16 95.4 1 0 1465 561.3A44.9 16 95.4 1 0 1456.6 650.7Z"/>
<path fill="url(#bw)" d="M1086.9 200.6A44.9 16.1 -8.1 1 0 997.9 213.2A44.9 16.1 -8.1 1 0 1086.9 200.6Z"/>
<path fill="url(#bw)" d="M1252.6 905.3A44.9 16.5 147.6 1 0 1328.5 857.1A44.9 16.5 147.6 1 0 1252.6 905.3Z"/>
<path fill="url(#bw)" d="M725.9 583.4A44.9 16.8 -98.9 1 0 739.7 672.2A44.9 16.8 -98.9 1 0 725.9 583.4Z"/>
<path fill="url(#bw)" d="M1093.5 939.2A44.9 17 173.1 1 0 1182.7 928.4A44.9 17 173.1 1 0 1093.5 939.2Z"/>
<path fill="url(#bw)" d="M852.7 846.5A44.9 17.5 -145.8 1 0 927 897A44.9 17.5 -145.8 1 0 852.7 846.5Z"/>
<path fill="url(#bw)" d="M1377.4 802.3A44.9 17.6 122.1 1 0 1425.1 726.2A44.9 17.6 122.1 1 0 1377.4 802.3Z"/>
<path fill="url(#bw)" d="M1327.8 293.2A44.9 18.1 32.9 1 0 1252.4 244.3A44.9 18.1 32.9 1 0 1327.8 293.2Z"/>
<path fill="url(#bw)" d="M746.4 677.2A44.9 18.2 -114 1 0 783 759.3A44.9 18.2 -114 1 0 746.4 677.2Z"/>
<path fill="url(#bw)" d="M791.3 770.8A44.9 18.4 -130.5 1 0 849.7 839.1A44.9 18.4 -130.5 1 0 791.3 770.8Z"/>
<path fill="url(#bw)" d="M1454.5 557A44.9 18.8 80.6 1 0 1439.8 468.4A44.9 18.8 80.6 1 0 1454.5 557Z"/>
<path fill="url(#bw)" d="M1388.8 369A44.9 19.6 48.3 1 0 1329 301.9A44.9 19.6 48.3 1 0 1388.8 369Z"/>
<path fill="url(#bw)" d="M1433.7 462.8A44.9 19.8 65 1 0 1395.8 381.4A44.9 19.8 65 1 0 1433.7 462.8Z"/>
<path fill="url(#bw)" d="M873.9 291.1A44.9 19.9 -45.4 1 0 810.8 355A44.9 19.9 -45.4 1 0 873.9 291.1Z"/>
<path fill="url(#bw)" d="M1008.6 226.7A44.9 20.2 -21.2 1 0 924.8 259.2A44.9 20.2 -21.2 1 0 1008.6 226.7Z"/>
<path fill="url(#bw)" d="M773.5 418.6A44.9 20.2 -71.8 1 0 745.4 504A44.9 20.2 -71.8 1 0 773.5 418.6Z"/>
<path fill="url(#bw)" d="M1171.4 228.9A44.9 21.1 5.4 1 0 1082 220.5A44.9 21.1 5.4 1 0 1171.4 228.9Z"/>
<path fill="url(#bw)" d="M1007.1 909.8A44.9 21.5 -173 1 0 1096.3 920.8A44.9 21.5 -173 1 0 1007.1 909.8Z"/>
<path fill="url(#bw)" d="M1169.7 912.4A44.9 21.5 160.1 1 0 1254.2 881.8A44.9 21.5 160.1 1 0 1169.7 912.4Z"/>
<path fill="url(#bw)" d="M1304.2 848.6A44.9 21.8 135.4 1 0 1368.2 785.5A44.9 21.8 135.4 1 0 1304.2 848.6Z"/>
<path fill="url(#bw)" d="M1404.9 721.4A44.9 22.3 108.3 1 0 1433 636.1A44.9 22.3 108.3 1 0 1404.9 721.4Z"/>
<path fill="url(#bw)" d="M944.7 263.2A44.9 22.8 -33.4 1 0 869.6 312.6A44.9 22.8 -33.4 1 0 944.7 263.2Z"/>
<path fill="url(#bw)" d="M762.1 514.2A44.9 23.9 -87.9 1 0 758.8 604A44.9 23.9 -87.9 1 0 762.1 514.2Z"/>
<path fill="url(#bw)" d="M1232.1 875.7A44.9 24.4 147.9 1 0 1308.2 827.9A44.9 24.4 147.9 1 0 1232.1 875.7Z"/>
<path fill="url(#bw)" d="M921.2 854.9A44.9 24.8 -156.4 1 0 1003.6 890.8A44.9 24.8 -156.4 1 0 921.2 854.9Z"/>
<path fill="url(#bw)" d="M1256.2 283.2A44.9 25 21.5 1 0 1172.6 250.2A44.9 25 21.5 1 0 1256.2 283.2Z"/>
<path fill="url(#bw)" d="M844.6 357.1A44.9 25.3 -57.2 1 0 795.9 432.6A44.9 25.3 -57.2 1 0 844.6 357.1Z"/>
<path fill="url(#bw)" d="M1084.1 245.9A44.9 25.8 -9.7 1 0 995.5 260.9A44.9 25.8 -9.7 1 0 1084.1 245.9Z"/>
<path fill="url(#bw)" d="M1415.1 625.3A44.9 25.9 91.6 1 0 1417.6 535.5A44.9 25.9 91.6 1 0 1415.1 625.3Z"/>
<path fill="url(#bw)" d="M770.9 608.1A44.9 25.9 -104.4 1 0 793.3 695.2A44.9 25.9 -104.4 1 0 770.9 608.1Z"/>
<path fill="url(#bw)" d="M852.6 785.1A44.9 26.4 -139.5 1 0 921 843.5A44.9 26.4 -139.5 1 0 852.6 785.1Z"/>
<path fill="url(#bw)" d="M1091.8 891.9A44.9 26.7 172.3 1 0 1180.9 880A44.9 26.7 172.3 1 0 1091.8 891.9Z"/>
<path fill="url(#bw)" d="M802.5 699.9A44.9 27 -121.9 1 0 850 776.2A44.9 27 -121.9 1 0 802.5 699.9Z"/>
<path fill="url(#bw)" d="M1324.4 352.9A44.9 27.1 38.4 1 0 1253.9 297.1A44.9 27.1 38.4 1 0 1324.4 352.9Z"/>
<path fill="url(#bw)" d="M1331.2 782A44.9 27.2 123.4 1 0 1380.7 707A44.9 27.2 123.4 1 0 1331.2 782Z"/>
<path fill="url(#bw)" d="M1405.9 530.9A44.9 27.6 74.4 1 0 1381.7 444.4A44.9 27.6 74.4 1 0 1405.9 530.9Z"/>
<path fill="url(#bw)" d="M1374.2 438.5A44.9 28.2 56.3 1 0 1324.3 363.7A44.9 28.2 56.3 1 0 1374.2 438.5Z"/>
<path fill="url(#bw)" d="M922.2 315.4A44.9 28.5 -42.2 1 0 855.7 375.8A44.9 28.5 -42.2 1 0 922.2 315.4Z"/>
<path fill="url(#bw)" d="M1006.5 277.1A44.9 28.6 -25 1 0 925 315.1A44.9 28.6 -25 1 0 1006.5 277.1Z"/>
<path fill="url(#bw)" d="M1167.7 860.4A44.9 29.8 157 1 0 1250.4 825.3A44.9 29.8 157 1 0 1167.7 860.4Z"/>
<path fill="url(#bw)" d="M824.9 443.7A44.9 29.9 -73.3 1 0 799.1 529.8A44.9 29.9 -73.3 1 0 824.9 443.7Z"/>
<path fill="url(#bw)" d="M1251.9 822.7A44.9 30 139.1 1 0 1319.8 764A44.9 30 139.1 1 0 1251.9 822.7Z"/>
<path fill="url(#bw)" d="M1170.3 289.6A44.9 30.6 6.3 1 0 1081 279.7A44.9 30.6 6.3 1 0 1170.3 289.6Z"/>
<path fill="url(#bw)" d="M1004.1 846.9A44.9 30.9 -170.8 1 0 1092.8 861.2A44.9 30.9 -170.8 1 0 1004.1 846.9Z"/>
<path fill="url(#bw)" d="M1349.2 695A44.9 31.6 106.7 1 0 1375 608.9A44.9 31.6 106.7 1 0 1349.2 695Z"/>
<path fill="url(#bw)" d="M820 539.3A44.9 32.5 -92.7 1 0 824.2 629A44.9 32.5 -92.7 1 0 820 539.3Z"/>
<path fill="url(#bw)" d="M829.3 628A44.9 33.1 -111.6 1 0 862.4 711.5A44.9 33.1 -111.6 1 0 829.3 628Z"/>
<path fill="url(#bw)" d="M924.3 781.8A44.9 33.1 -150.7 1 0 1002.7 825.8A44.9 33.1 -150.7 1 0 924.3 781.8Z"/>
<path fill="url(#bw)" d="M865.6 712.9A44.9 33.3 -131.4 1 0 925 780.3A44.9 33.3 -131.4 1 0 865.6 712.9Z"/>
<path fill="url(#bw)" d="M1249.8 354.3A44.9 33.4 26 1 0 1169.1 314.9A44.9 33.4 26 1 0 1249.8 354.3Z"/>
<path fill="url(#bw)" d="M903.2 387A44.9 33.6 -55.7 1 0 852.6 461.2A44.9 33.6 -55.7 1 0 903.2 387Z"/>
<path fill="url(#bw)" d="M1084.4 310A44.9 34 -12 1 0 996.5 328.7A44.9 34 -12 1 0 1084.4 310Z"/>
<path fill="url(#bw)" d="M1353.9 599.1A44.9 34 86.2 1 0 1347.8 509.4A44.9 34 86.2 1 0 1353.9 599.1Z"/>
<path fill="url(#bw)" d="M1308.9 423.8A44.9 34.1 45.6 1 0 1246 359.6A44.9 34.1 45.6 1 0 1308.9 423.8Z"/>
<path fill="url(#bw)" d="M1345.1 509.7A44.9 34.3 66.2 1 0 1308.7 427.5A44.9 34.3 66.2 1 0 1345.1 509.7Z"/>
<path fill="url(#bw)" d="M1087.6 825.7A44.9 34.7 171.3 1 0 1176.4 812.1A44.9 34.7 171.3 1 0 1087.6 825.7Z"/>
<path fill="url(#bw)" d="M992.2 340.3A44.9 34.9 -34 1 0 917.7 390.6A44.9 34.9 -34 1 0 992.2 340.3Z"/>
<path fill="url(#bw)" d="M1268.6 750.7A44.9 35.1 125.4 1 0 1320.6 677.5A44.9 35.1 125.4 1 0 1268.6 750.7Z"/>
<path fill="url(#bw)" d="M1178.7 796.1A44.9 36 148.5 1 0 1255.4 749.2A44.9 36 148.5 1 0 1178.7 796.1Z"/>
<path fill="url(#bw)" d="M890 472.4A44.9 37.1 -75.5 1 0 867.6 559.4A44.9 37.1 -75.5 1 0 890 472.4Z"/>
<path fill="url(#bw)" d="M1167.3 364.7A44.9 37.7 7.7 1 0 1078.2 352.7A44.9 37.7 7.7 1 0 1167.3 364.7Z"/>
<path fill="url(#bw)" d="M888 642.6A44.9 37.8 -120.9 1 0 934.2 719.6A44.9 37.8 -120.9 1 0 888 642.6Z"/>
<path fill="url(#bw)" d="M1004.3 769.4A44.9 37.8 -167.6 1 0 1092.1 788.7A44.9 37.8 -167.6 1 0 1004.3 769.4Z"/>
<path fill="url(#bw)" d="M884.1 561.3A44.9 38.4 -99.6 1 0 899 649.9A44.9 38.4 -99.6 1 0 884.1 561.3Z"/>
<path fill="url(#bw)" d="M1281.1 665.4A44.9 38.4 104.3 1 0 1303.2 578.3A44.9 38.4 104.3 1 0 1281.1 665.4Z"/>
<path fill="url(#bw)" d="M1285.2 493.5A44.9 38.6 55.2 1 0 1234 419.7A44.9 38.6 55.2 1 0 1285.2 493.5Z"/>
<path fill="url(#bw)" d="M936 702.5A44.9 38.7 -142.3 1 0 1007.1 757.4A44.9 38.7 -142.3 1 0 936 702.5Z"/>
<path fill="url(#bw)" d="M1236.7 431.9A44.9 39.1 32.6 1 0 1161 383.4A44.9 39.1 32.6 1 0 1236.7 431.9Z"/>
<path fill="url(#bw)" d="M1288.3 575.9A44.9 39.4 77.9 1 0 1269.5 488A44.9 39.4 77.9 1 0 1288.3 575.9Z"/>
<path fill="url(#bw)" d="M979.5 421.4A44.9 39.8 -51.1 1 0 923 491.3A44.9 39.8 -51.1 1 0 979.5 421.4Z"/>
<path fill="url(#bw)" d="M1080.6 386.5A44.9 40 -18.1 1 0 995.2 414.5A44.9 40 -18.1 1 0 1080.6 386.5Z"/>
<path fill="url(#bw)" d="M1088.1 747A44.9 40.6 167.1 1 0 1175.7 726.9A44.9 40.6 167.1 1 0 1088.1 747Z"/>
<path fill="url(#bw)" d="M1188.9 714.8A44.9 40.8 131.3 1 0 1248.2 647.3A44.9 40.8 131.3 1 0 1188.9 714.8Z"/>
<path fill="url(#bw)" d="M947 603.8A44.9 41.8 -119.8 1 0 991.6 681.8A44.9 41.8 -119.8 1 0 947 603.8Z"/>
<path fill="url(#bw)" d="M962.3 510.1A44.9 42.1 -83 1 0 951.4 599.3A44.9 42.1 -83 1 0 962.3 510.1Z"/>
<path fill="url(#bw)" d="M1226.2 530.6A44.9 42.4 53.9 1 0 1173.2 458A44.9 42.4 53.9 1 0 1226.2 530.6Z"/>
<path fill="url(#bw)" d="M1002.8 673.1A44.9 42.5 -157.3 1 0 1085.7 707.8A44.9 42.5 -157.3 1 0 1002.8 673.1Z"/>
<path fill="url(#bw)" d="M1168.2 457.3A44.9 42.5 13.8 1 0 1081 436A44.9 42.5 13.8 1 0 1168.2 457.3Z"/>
<path fill="url(#bw)" d="M1207.8 627.1A44.9 42.9 95.3 1 0 1216.1 537.6A44.9 42.9 95.3 1 0 1207.8 627.1Z"/>
<path fill="url(#bw)" d="M1074.8 471.3A44.9 43.7 -37 1 0 1003 525.3A44.9 43.7 -37 1 0 1074.8 471.3Z"/>
<path fill="url(#bw)" d="M1089.5 659.5A44.9 44.1 152.3 1 0 1169 617.7A44.9 44.1 152.3 1 0 1089.5 659.5Z"/>
<path fill="url(#bw)" d="M1024.7 553.7A44.9 44.5 -114.5 1 0 1061.9 635.5A44.9 44.5 -114.5 1 0 1024.7 553.7Z"/>
<path fill="url(#bw)" d="M1155.7 574.7A44.9 44.7 46.2 1 0 1093.5 509.8A44.9 44.7 46.2 1 0 1155.7 574.7Z"/>
<path fill="url(#cr)" fill-opacity="1.00" fill-rule="evenodd" d="M1304.3 235A44.9 0.2 25.5 1 0 1223.2 196.3A44.9 0.2 25.5 1 0 1304.3 235ZM1308.3 226A44.9 0.2 25.5 1 0 1227.2 187.3A44.9 0.2 25.5 1 0 1308.3 226Z"/>
<path fill="url(#cr)" fill-opacity="0.15" fill-rule="evenodd" d="M1014.1 960.2A44.9 0.3 -174.9 1 0 1103.6 968.2A44.9 0.3 -174.9 1 0 1014.1 960.2ZM1018.1 951.2A44.9 0.3 -174.9 1 0 1107.6 959.2A44.9 0.3 -174.9 1 0 1018.1 951.2Z"/>
<path fill="url(#cr)" fill-opacity="1.00" fill-rule="evenodd" d="M1366.5 283A44.9 0.4 36.9 1 0 1294.6 229.1A44.9 0.4 36.9 1 0 1366.5 283ZM1370.5 274A44.9 0.4 36.9 1 0 1298.6 220.1A44.9 0.4 36.9 1 0 1370.5 274Z"/>
<path fill="url(#cr)" fill-opacity="1.00" fill-rule="evenodd" d="M1425.5 353.4A44.9 0.7 50.2 1 0 1367.9 284.4A44.9 0.7 50.2 1 0 1425.5 353.4ZM1429.6 344.5A44.9 0.7 50.2 1 0 1372 275.5A44.9 0.7 50.2 1 0 1429.6 344.5Z"/>
<path fill="url(#cr)" fill-opacity="0.42" fill-rule="evenodd" d="M1190.3 956.4A44.9 0.7 159.4 1 0 1274.5 924.9A44.9 0.7 159.4 1 0 1190.3 956.4ZM1194.4 947.4A44.9 0.7 159.4 1 0 1278.5 915.9A44.9 0.7 159.4 1 0 1194.4 947.4Z"/>
<path fill="url(#cr)" fill-opacity="1.00" fill-rule="evenodd" d="M1468.6 440.7A44.9 0.9 64.3 1 0 1429.6 359.8A44.9 0.9 64.3 1 0 1468.6 440.7ZM1472.6 431.7A44.9 0.9 64.3 1 0 1433.6 350.8A44.9 0.9 64.3 1 0 1472.6 431.7Z"/>
<path fill="url(#cr)" fill-opacity="1.00" fill-rule="evenodd" d="M1488.6 530.4A44.9 1.1 77.6 1 0 1469.2 442.7A44.9 1.1 77.6 1 0 1488.6 530.4ZM1492.6 521.4A44.9 1.1 77.6 1 0 1473.3 433.7A44.9 1.1 77.6 1 0 1492.6 521.4Z"/>
<path fill="url(#cr)" fill-opacity="0.74" fill-rule="evenodd" d="M1340.9 882A44.9 1.1 135 1 0 1404.5 818.5A44.9 1.1 135 1 0 1340.9 882ZM1345 873A44.9 1.1 135 1 0 1408.5 809.5A44.9 1.1 135 1 0 1345 873Z"/>
<path fill="url(#cr)" fill-opacity="1.00" fill-rule="evenodd" d="M1488.9 609.1A44.9 1.1 88.9 1 0 1487.3 519.2A44.9 1.1 88.9 1 0 1488.9 609.1ZM1493 600.1A44.9 1.1 88.9 1 0 1491.3 510.2A44.9 1.1 88.9 1 0 1493 600.1Z"/>
<path fill="url(#cr)" fill-opacity="1.00" fill-rule="evenodd" d="M1451.1 744.3A44.9 1.2 109.3 1 0 1480.8 659.5A44.9 1.2 109.3 1 0 1451.1 744.3ZM1455.1 735.3A44.9 1.2 109.3 1 0 1484.9 650.5A44.9 1.2 109.3 1 0 1455.1 735.3Z"/>
<path fill="url(#cr)" fill-opacity="0.25" fill-rule="evenodd" d="M711.7 471A44.9 4 -81.8 1 0 698.9 559.9A44.9 4 -81.8 1 0 711.7 471ZM715.8 462A44.9 4 -81.8 1 0 702.9 551A44.9 4 -81.8 1 0 715.8 462Z"/>
<path fill="url(#cr)" fill-opacity="1.00" fill-rule="evenodd" d="M918.7 217.8A44.9 4.6 -32.9 1 0 843.3 266.6A44.9 4.6 -32.9 1 0 918.7 217.8ZM922.8 208.8A44.9 4.6 -32.9 1 0 847.3 257.6A44.9 4.6 -32.9 1 0 922.8 208.8Z"/>
<path fill="url(#cr)" fill-opacity="0.59" fill-rule="evenodd" d="M784.8 326.2A44.9 4.7 -58.1 1 0 737.4 402.4A44.9 4.7 -58.1 1 0 784.8 326.2ZM788.9 317.2A44.9 4.7 -58.1 1 0 741.4 393.5A44.9 4.7 -58.1 1 0 788.9 317.2Z"/>
<path fill="url(#cr)" fill-opacity="1.00" fill-rule="evenodd" d="M1245.6 207.6A44.9 5.2 16.1 1 0 1159.3 182.7A44.9 5.2 16.1 1 0 1245.6 207.6ZM1249.7 198.6A44.9 5.2 16.1 1 0 1163.4 173.7A44.9 5.2 16.1 1 0 1249.7 198.6Z"/>
<path fill="url(#cr)" fill-opacity="0.15" fill-rule="evenodd" d="M940.1 934.4A44.9 5.2 -163.6 1 0 1026.3 959.8A44.9 5.2 -163.6 1 0 940.1 934.4ZM944.1 925.4A44.9 5.2 -163.6 1 0 1030.3 950.8A44.9 5.2 -163.6 1 0 944.1 925.4Z"/>
<path fill="url(#cr)" fill-opacity="1.00" fill-rule="evenodd" d="M1086.2 177.6A44.9 5.4 -7.7 1 0 997.1 189.6A44.9 5.4 -7.7 1 0 1086.2 177.6ZM1090.2 168.6A44.9 5.4 -7.7 1 0 1001.2 180.6A44.9 5.4 -7.7 1 0 1090.2 168.6Z"/>
<path fill="url(#cr)" fill-opacity="0.37" fill-rule="evenodd" d="M1099.1 964.3A44.9 6.4 172.7 1 0 1188.3 952.9A44.9 6.4 172.7 1 0 1099.1 964.3ZM1103.2 955.4A44.9 6.4 172.7 1 0 1192.3 943.9A44.9 6.4 172.7 1 0 1103.2 955.4Z"/>
<path fill="url(#cr)" fill-opacity="1.00" fill-rule="evenodd" d="M1474 671.3A44.9 6.4 98.1 1 0 1486.7 582.3A44.9 6.4 98.1 1 0 1474 671.3ZM1478 662.3A44.9 6.4 98.1 1 0 1490.8 573.3A44.9 6.4 98.1 1 0 1478 662.3Z"/>
<path fill="url(#cr)" fill-opacity="0.69" fill-rule="evenodd" d="M1266.7 924.3A44.9 6.4 147.4 1 0 1342.4 875.8A44.9 6.4 147.4 1 0 1266.7 924.3ZM1270.7 915.3A44.9 6.4 147.4 1 0 1346.4 866.9A44.9 6.4 147.4 1 0 1270.7 915.3Z"/>
<path fill="url(#cr)" fill-opacity="0.99" fill-rule="evenodd" d="M1400.4 816A44.9 7 122 1 0 1448.1 739.8A44.9 7 122 1 0 1400.4 816ZM1404.5 807A44.9 7 122 1 0 1452.1 730.8A44.9 7 122 1 0 1404.5 807Z"/>
<path fill="url(#cr)" fill-opacity="0.15" fill-rule="evenodd" d="M702.6 557.4A44.9 7.3 -94.5 1 0 709.7 646.9A44.9 7.3 -94.5 1 0 702.6 557.4ZM706.7 548.4A44.9 7.3 -94.5 1 0 713.8 638A44.9 7.3 -94.5 1 0 706.7 548.4Z"/>
<path fill="url(#cr)" fill-opacity="0.15" fill-rule="evenodd" d="M864.9 887.5A44.9 8.2 -150.7 1 0 943.2 931.5A44.9 8.2 -150.7 1 0 864.9 887.5ZM868.9 878.5A44.9 8.2 -150.7 1 0 947.2 922.5A44.9 8.2 -150.7 1 0 868.9 878.5Z"/>
<path fill="url(#cr)" fill-opacity="0.15" fill-rule="evenodd" d="M711 646A44.9 8.2 -107.6 1 0 738.2 731.7A44.9 8.2 -107.6 1 0 711 646ZM715 637A44.9 8.2 -107.6 1 0 742.2 722.7A44.9 8.2 -107.6 1 0 715 637Z"/>
<path fill="url(#cr)" fill-opacity="1.00" fill-rule="evenodd" d="M1319.6 254A44.9 8.7 28.8 1 0 1240.8 210.7A44.9 8.7 28.8 1 0 1319.6 254ZM1323.6 245A44.9 8.7 28.8 1 0 1244.8 201.8A44.9 8.7 28.8 1 0 1323.6 245Z"/>
<path fill="url(#cr)" fill-opacity="0.15" fill-rule="evenodd" d="M799.5 826.3A44.9 8.7 -137.5 1 0 865.7 887A44.9 8.7 -137.5 1 0 799.5 826.3ZM803.5 817.3A44.9 8.7 -137.5 1 0 869.7 878A44.9 8.7 -137.5 1 0 803.5 817.3Z"/>
<path fill="url(#cr)" fill-opacity="0.15" fill-rule="evenodd" d="M743.8 741.6A44.9 8.7 -122.5 1 0 792.1 817.4A44.9 8.7 -122.5 1 0 743.8 741.6ZM747.8 732.6A44.9 8.7 -122.5 1 0 796.2 808.4A44.9 8.7 -122.5 1 0 747.8 732.6Z"/>
<path fill="url(#cr)" fill-opacity="1.00" fill-rule="evenodd" d="M1481.7 584.5A44.9 9.5 85.3 1 0 1474.3 494.9A44.9 9.5 85.3 1 0 1481.7 584.5ZM1485.8 575.5A44.9 9.5 85.3 1 0 1478.3 485.9A44.9 9.5 85.3 1 0 1485.8 575.5Z"/>
<path fill="url(#cr)" fill-opacity="1.00" fill-rule="evenodd" d="M1384.7 315.1A44.9 9.7 41.9 1 0 1317.9 255.1A44.9 9.7 41.9 1 0 1384.7 315.1ZM1388.7 306.1A44.9 9.7 41.9 1 0 1321.9 246.1A44.9 9.7 41.9 1 0 1388.7 306.1Z"/>
<path fill="url(#cr)" fill-opacity="0.44" fill-rule="evenodd" d="M745.8 401.9A44.9 9.8 -70.7 1 0 716.1 486.7A44.9 9.8 -70.7 1 0 745.8 401.9ZM749.8 392.9A44.9 9.8 -70.7 1 0 720.1 477.7A44.9 9.8 -70.7 1 0 749.8 392.9Z"/>
<path fill="url(#cr)" fill-opacity="1.00" fill-rule="evenodd" d="M1473.2 495.6A44.9 10.2 72 1 0 1445.4 410.1A44.9 10.2 72 1 0 1473.2 495.6ZM1477.2 486.6A44.9 10.2 72 1 0 1449.4 401.2A44.9 10.2 72 1 0 1477.2 486.6Z"/>
<path fill="url(#cr)" fill-opacity="1.00" fill-rule="evenodd" d="M1440.3 399.8A44.9 10.3 57 1 0 1391.3 324.5A44.9 10.3 57 1 0 1440.3 399.8ZM1444.3 390.8A44.9 10.3 57 1 0 1395.3 315.5A44.9 10.3 57 1 0 1444.3 390.8Z"/>
<path fill="url(#cr)" fill-opacity="0.95" fill-rule="evenodd" d="M853.5 269.1A44.9 10.3 -45.2 1 0 790.2 332.9A44.9 10.3 -45.2 1 0 853.5 269.1ZM857.5 260.2A44.9 10.3 -45.2 1 0 794.2 323.9A44.9 10.3 -45.2 1 0 857.5 260.2Z"/>
<path fill="url(#cr)" fill-opacity="1.00" fill-rule="evenodd" d="M999.5 197.6A44.9 10.7 -20.9 1 0 915.6 229.6A44.9 10.7 -20.9 1 0 999.5 197.6ZM1003.6 188.6A44.9 10.7 -20.9 1 0 919.6 220.6A44.9 10.7 -20.9 1 0 1003.6 188.6Z"/>
<path fill="url(#cr)" fill-opacity="1.00" fill-rule="evenodd" d="M1170.4 193.7A44.9 10.8 4.7 1 0 1080.8 186.3A44.9 10.8 4.7 1 0 1170.4 193.7ZM1174.4 184.8A44.9 10.8 4.7 1 0 1084.9 177.3A44.9 10.8 4.7 1 0 1174.4 184.8Z"/>
<path fill="url(#cr)" fill-opacity="0.32" fill-rule="evenodd" d="M1012.7 947.1A44.9 11.3 -174.5 1 0 1102.1 955.7A44.9 11.3 -174.5 1 0 1012.7 947.1ZM1016.7 938.1A44.9 11.3 -174.5 1 0 1106.2 946.8A44.9 11.3 -174.5 1 0 1016.7 938.1Z"/>
<path fill="url(#cr)" fill-opacity="0.65" fill-rule="evenodd" d="M1183.2 943.4A44.9 12.1 159.8 1 0 1267.5 912.3A44.9 12.1 159.8 1 0 1183.2 943.4ZM1187.2 934.4A44.9 12.1 159.8 1 0 1271.5 903.3A44.9 12.1 159.8 1 0 1187.2 934.4Z"/>
<path fill="url(#cr)" fill-opacity="1.00" fill-rule="evenodd" d="M1437.2 739.6A44.9 12.2 109.3 1 0 1467 654.8A44.9 12.2 109.3 1 0 1437.2 739.6ZM1441.3 730.6A44.9 12.2 109.3 1 0 1471 645.8A44.9 12.2 109.3 1 0 1441.3 730.6Z"/>
<path fill="url(#cr)" fill-opacity="0.95" fill-rule="evenodd" d="M1329.2 872.1A44.9 12.4 135.2 1 0 1392.9 808.7A44.9 12.4 135.2 1 0 1329.2 872.1ZM1333.2 863.1A44.9 12.4 135.2 1 0 1397 799.8A44.9 12.4 135.2 1 0 1333.2 863.1Z"/>
<path fill="url(#cr)" fill-opacity="0.25" fill-rule="evenodd" d="M724.8 490.2A44.9 13.8 -84.4 1 0 716.1 579.6A44.9 13.8 -84.4 1 0 724.8 490.2ZM728.9 481.2A44.9 13.8 -84.4 1 0 720.1 570.7A44.9 13.8 -84.4 1 0 728.9 481.2Z"/>
<path fill="url(#cr)" fill-opacity="1.00" fill-rule="evenodd" d="M928 235.1A44.9 14.7 -33.1 1 0 852.8 284.2A44.9 14.7 -33.1 1 0 928 235.1ZM932.1 226.1A44.9 14.7 -33.1 1 0 856.8 275.2A44.9 14.7 -33.1 1 0 932.1 226.1Z"/>
<path fill="url(#cr)" fill-opacity="0.25" fill-rule="evenodd" d="M927.5 907.3A44.9 14.8 -160.5 1 0 1012.2 937.3A44.9 14.8 -160.5 1 0 927.5 907.3ZM931.5 898.4A44.9 14.8 -160.5 1 0 1016.2 928.3A44.9 14.8 -160.5 1 0 931.5 898.4Z"/>
<path fill="url(#cr)" fill-opacity="1.00" fill-rule="evenodd" d="M1254.1 232.8A44.9 14.9 18.4 1 0 1168.8 204.4A44.9 14.9 18.4 1 0 1254.1 232.8ZM1258.1 223.8A44.9 14.9 18.4 1 0 1172.9 195.4A44.9 14.9 18.4 1 0 1258.1 223.8Z"/>
<path fill="url(#cr)" fill-opacity="0.78" fill-rule="evenodd" d="M803 338.2A44.9 15.4 -58.2 1 0 755.6 414.6A44.9 15.4 -58.2 1 0 803 338.2ZM807 329.2A44.9 15.4 -58.2 1 0 759.7 405.6A44.9 15.4 -58.2 1 0 807 329.2Z"/>
<path fill="url(#cr)" fill-opacity="1.00" fill-rule="evenodd" d="M1456.6 650.7A44.9 16 95.4 1 0 1465 561.3A44.9 16 95.4 1 0 1456.6 650.7ZM1460.7 641.7A44.9 16 95.4 1 0 1469.1 552.3A44.9 16 95.4 1 0 1460.7 641.7Z"/>
<path fill="url(#cr)" fill-opacity="1.00" fill-rule="evenodd" d="M1086.9 200.6A44.9 16.1 -8.1 1 0 997.9 213.2A44.9 16.1 -8.1 1 0 1086.9 200.6ZM1090.9 191.6A44.9 16.1 -8.1 1 0 1002 204.2A44.9 16.1 -8.1 1 0 1090.9 191.6Z"/>
<path fill="url(#cr)" fill-opacity="0.88" fill-rule="evenodd" d="M1252.6 905.3A44.9 16.5 147.6 1 0 1328.5 857.1A44.9 16.5 147.6 1 0 1252.6 905.3ZM1256.6 896.3A44.9 16.5 147.6 1 0 1332.5 848.1A44.9 16.5 147.6 1 0 1256.6 896.3Z"/>
<path fill="url(#cr)" fill-opacity="0.15" fill-rule="evenodd" d="M725.9 583.4A44.9 16.8 -98.9 1 0 739.7 672.2A44.9 16.8 -98.9 1 0 725.9 583.4ZM729.9 574.4A44.9 16.8 -98.9 1 0 743.8 663.2A44.9 16.8 -98.9 1 0 729.9 574.4Z"/>
<path fill="url(#cr)" fill-opacity="0.59" fill-rule="evenodd" d="M1093.5 939.2A44.9 17 173.1 1 0 1182.7 928.4A44.9 17 173.1 1 0 1093.5 939.2ZM1097.6 930.3A44.9 17 173.1 1 0 1186.8 919.4A44.9 17 173.1 1 0 1097.6 930.3Z"/>
<path fill="url(#cr)" fill-opacity="0.20" fill-rule="evenodd" d="M852.7 846.5A44.9 17.5 -145.8 1 0 927 897A44.9 17.5 -145.8 1 0 852.7 846.5ZM856.7 837.5A44.9 17.5 -145.8 1 0 931 888A44.9 17.5 -145.8 1 0 856.7 837.5Z"/>
<path fill="url(#cr)" fill-opacity="1.00" fill-rule="evenodd" d="M1377.4 802.3A44.9 17.6 122.1 1 0 1425.1 726.2A44.9 17.6 122.1 1 0 1377.4 802.3ZM1381.4 793.4A44.9 17.6 122.1 1 0 1429.2 717.2A44.9 17.6 122.1 1 0 1381.4 793.4Z"/>
<path fill="url(#cr)" fill-opacity="1.00" fill-rule="evenodd" d="M1327.8 293.2A44.9 18.1 32.9 1 0 1252.4 244.3A44.9 18.1 32.9 1 0 1327.8 293.2ZM1331.9 284.2A44.9 18.1 32.9 1 0 1256.4 235.3A44.9 18.1 32.9 1 0 1331.9 284.2Z"/>
<path fill="url(#cr)" fill-opacity="0.15" fill-rule="evenodd" d="M746.4 677.2A44.9 18.2 -114 1 0 783 759.3A44.9 18.2 -114 1 0 746.4 677.2ZM750.4 668.2A44.9 18.2 -114 1 0 787 750.3A44.9 18.2 -114 1 0 750.4 668.2Z"/>
<path fill="url(#cr)" fill-opacity="0.15" fill-rule="evenodd" d="M791.3 770.8A44.9 18.4 -130.5 1 0 849.7 839.1A44.9 18.4 -130.5 1 0 791.3 770.8ZM795.4 761.8A44.9 18.4 -130.5 1 0 853.7 830.1A44.9 18.4 -130.5 1 0 795.4 761.8Z"/>
<path fill="url(#cr)" fill-opacity="1.00" fill-rule="evenodd" d="M1454.5 557A44.9 18.8 80.6 1 0 1439.8 468.4A44.9 18.8 80.6 1 0 1454.5 557ZM1458.6 548.1A44.9 18.8 80.6 1 0 1443.8 459.4A44.9 18.8 80.6 1 0 1458.6 548.1Z"/>
<path fill="url(#cr)" fill-opacity="1.00" fill-rule="evenodd" d="M1388.8 369A44.9 19.6 48.3 1 0 1329 301.9A44.9 19.6 48.3 1 0 1388.8 369ZM1392.8 360A44.9 19.6 48.3 1 0 1333.1 292.9A44.9 19.6 48.3 1 0 1392.8 360Z"/>
<path fill="url(#cr)" fill-opacity="1.00" fill-rule="evenodd" d="M1433.7 462.8A44.9 19.8 65 1 0 1395.8 381.4A44.9 19.8 65 1 0 1433.7 462.8ZM1437.7 453.9A44.9 19.8 65 1 0 1399.8 372.4A44.9 19.8 65 1 0 1437.7 453.9Z"/>
<path fill="url(#cr)" fill-opacity="1.00" fill-rule="evenodd" d="M873.9 291.1A44.9 19.9 -45.4 1 0 810.8 355A44.9 19.9 -45.4 1 0 873.9 291.1ZM878 282.1A44.9 19.9 -45.4 1 0 814.8 346A44.9 19.9 -45.4 1 0 878 282.1Z"/>
<path fill="url(#cr)" fill-opacity="1.00" fill-rule="evenodd" d="M1008.6 226.7A44.9 20.2 -21.2 1 0 924.8 259.2A44.9 20.2 -21.2 1 0 1008.6 226.7ZM1012.6 217.8A44.9 20.2 -21.2 1 0 928.8 250.2A44.9 20.2 -21.2 1 0 1012.6 217.8Z"/>
<path fill="url(#cr)" fill-opacity="0.62" fill-rule="evenodd" d="M773.5 418.6A44.9 20.2 -71.8 1 0 745.4 504A44.9 20.2 -71.8 1 0 773.5 418.6ZM777.5 409.7A44.9 20.2 -71.8 1 0 749.4 495A44.9 20.2 -71.8 1 0 777.5 409.7Z"/>
<path fill="url(#cr)" fill-opacity="1.00" fill-rule="evenodd" d="M1171.4 228.9A44.9 21.1 5.4 1 0 1082 220.5A44.9 21.1 5.4 1 0 1171.4 228.9ZM1175.5 219.9A44.9 21.1 5.4 1 0 1086 211.5A44.9 21.1 5.4 1 0 1175.5 219.9Z"/>
<path fill="url(#cr)" fill-opacity="0.54" fill-rule="evenodd" d="M1007.1 909.8A44.9 21.5 -173 1 0 1096.3 920.8A44.9 21.5 -173 1 0 1007.1 909.8ZM1011.2 900.9A44.9 21.5 -173 1 0 1100.3 911.8A44.9 21.5 -173 1 0 1011.2 900.9Z"/>
<path fill="url(#cr)" fill-opacity="0.83" fill-rule="evenodd" d="M1169.7 912.4A44.9 21.5 160.1 1 0 1254.2 881.8A44.9 21.5 160.1 1 0 1169.7 912.4ZM1173.7 903.4A44.9 21.5 160.1 1 0 1258.2 872.8A44.9 21.5 160.1 1 0 1173.7 903.4Z"/>
<path fill="url(#cr)" fill-opacity="1.00" fill-rule="evenodd" d="M1304.2 848.6A44.9 21.8 135.4 1 0 1368.2 785.5A44.9 21.8 135.4 1 0 1304.2 848.6ZM1308.3 839.6A44.9 21.8 135.4 1 0 1372.3 776.5A44.9 21.8 135.4 1 0 1308.3 839.6Z"/>
<path fill="url(#cr)" fill-opacity="1.00" fill-rule="evenodd" d="M1404.9 721.4A44.9 22.3 108.3 1 0 1433 636.1A44.9 22.3 108.3 1 0 1404.9 721.4ZM1408.9 712.4A44.9 22.3 108.3 1 0 1437.1 627.1A44.9 22.3 108.3 1 0 1408.9 712.4Z"/>
<path fill="url(#cr)" fill-opacity="1.00" fill-rule="evenodd" d="M944.7 263.2A44.9 22.8 -33.4 1 0 869.6 312.6A44.9 22.8 -33.4 1 0 944.7 263.2ZM948.7 254.2A44.9 22.8 -33.4 1 0 873.7 303.6A44.9 22.8 -33.4 1 0 948.7 254.2Z"/>
<path fill="url(#cr)" fill-opacity="0.44" fill-rule="evenodd" d="M762.1 514.2A44.9 23.9 -87.9 1 0 758.8 604A44.9 23.9 -87.9 1 0 762.1 514.2ZM766.1 505.3A44.9 23.9 -87.9 1 0 762.8 595A44.9 23.9 -87.9 1 0 766.1 505.3Z"/>
<path fill="url(#cr)" fill-opacity="1.00" fill-rule="evenodd" d="M1232.1 875.7A44.9 24.4 147.9 1 0 1308.2 827.9A44.9 24.4 147.9 1 0 1232.1 875.7ZM1236.2 866.7A44.9 24.4 147.9 1 0 1312.3 818.9A44.9 24.4 147.9 1 0 1236.2 866.7Z"/>
<path fill="url(#cr)" fill-opacity="0.47" fill-rule="evenodd" d="M921.2 854.9A44.9 24.8 -156.4 1 0 1003.6 890.8A44.9 24.8 -156.4 1 0 921.2 854.9ZM925.3 845.9A44.9 24.8 -156.4 1 0 1007.6 881.9A44.9 24.8 -156.4 1 0 925.3 845.9Z"/>
<path fill="url(#cr)" fill-opacity="1.00" fill-rule="evenodd" d="M1256.2 283.2A44.9 25 21.5 1 0 1172.6 250.2A44.9 25 21.5 1 0 1256.2 283.2ZM1260.2 274.2A44.9 25 21.5 1 0 1176.6 241.2A44.9 25 21.5 1 0 1260.2 274.2Z"/>
<path fill="url(#cr)" fill-opacity="1.00" fill-rule="evenodd" d="M844.6 357.1A44.9 25.3 -57.2 1 0 795.9 432.6A44.9 25.3 -57.2 1 0 844.6 357.1ZM848.6 348.1A44.9 25.3 -57.2 1 0 799.9 423.6A44.9 25.3 -57.2 1 0 848.6 348.1Z"/>
<path fill="url(#cr)" fill-opacity="1.00" fill-rule="evenodd" d="M1084.1 245.9A44.9 25.8 -9.7 1 0 995.5 260.9A44.9 25.8 -9.7 1 0 1084.1 245.9ZM1088.1 236.9A44.9 25.8 -9.7 1 0 999.5 252A44.9 25.8 -9.7 1 0 1088.1 236.9Z"/>
<path fill="url(#cr)" fill-opacity="1.00" fill-rule="evenodd" d="M1415.1 625.3A44.9 25.9 91.6 1 0 1417.6 535.5A44.9 25.9 91.6 1 0 1415.1 625.3ZM1419.1 616.3A44.9 25.9 91.6 1 0 1421.6 526.5A44.9 25.9 91.6 1 0 1419.1 616.3Z"/>
<path fill="url(#cr)" fill-opacity="0.31" fill-rule="evenodd" d="M770.9 608.1A44.9 25.9 -104.4 1 0 793.3 695.2A44.9 25.9 -104.4 1 0 770.9 608.1ZM774.9 599.2A44.9 25.9 -104.4 1 0 797.3 686.2A44.9 25.9 -104.4 1 0 774.9 599.2Z"/>
<path fill="url(#cr)" fill-opacity="0.41" fill-rule="evenodd" d="M852.6 785.1A44.9 26.4 -139.5 1 0 921 843.5A44.9 26.4 -139.5 1 0 852.6 785.1ZM856.7 776.1A44.9 26.4 -139.5 1 0 925 834.5A44.9 26.4 -139.5 1 0 856.7 776.1Z"/>
<path fill="url(#cr)" fill-opacity="0.81" fill-rule="evenodd" d="M1091.8 891.9A44.9 26.7 172.3 1 0 1180.9 880A44.9 26.7 172.3 1 0 1091.8 891.9ZM1095.9 883A44.9 26.7 172.3 1 0 1184.9 871A44.9 26.7 172.3 1 0 1095.9 883Z"/>
<path fill="url(#cr)" fill-opacity="0.36" fill-rule="evenodd" d="M802.5 699.9A44.9 27 -121.9 1 0 850 776.2A44.9 27 -121.9 1 0 802.5 699.9ZM806.6 690.9A44.9 27 -121.9 1 0 854 767.2A44.9 27 -121.9 1 0 806.6 690.9Z"/>
<path fill="url(#cr)" fill-opacity="1.00" fill-rule="evenodd" d="M1324.4 352.9A44.9 27.1 38.4 1 0 1253.9 297.1A44.9 27.1 38.4 1 0 1324.4 352.9ZM1328.4 343.9A44.9 27.1 38.4 1 0 1257.9 288.1A44.9 27.1 38.4 1 0 1328.4 343.9Z"/>
<path fill="url(#cr)" fill-opacity="1.00" fill-rule="evenodd" d="M1331.2 782A44.9 27.2 123.4 1 0 1380.7 707A44.9 27.2 123.4 1 0 1331.2 782ZM1335.2 773A44.9 27.2 123.4 1 0 1384.7 698A44.9 27.2 123.4 1 0 1335.2 773Z"/>
<path fill="url(#cr)" fill-opacity="1.00" fill-rule="evenodd" d="M1405.9 530.9A44.9 27.6 74.4 1 0 1381.7 444.4A44.9 27.6 74.4 1 0 1405.9 530.9ZM1410 521.9A44.9 27.6 74.4 1 0 1385.8 435.4A44.9 27.6 74.4 1 0 1410 521.9Z"/>
<path fill="url(#cr)" fill-opacity="1.00" fill-rule="evenodd" d="M1374.2 438.5A44.9 28.2 56.3 1 0 1324.3 363.7A44.9 28.2 56.3 1 0 1374.2 438.5ZM1378.3 429.5A44.9 28.2 56.3 1 0 1328.4 354.7A44.9 28.2 56.3 1 0 1378.3 429.5Z"/>
<path fill="url(#cr)" fill-opacity="1.00" fill-rule="evenodd" d="M922.2 315.4A44.9 28.5 -42.2 1 0 855.7 375.8A44.9 28.5 -42.2 1 0 922.2 315.4ZM926.2 306.4A44.9 28.5 -42.2 1 0 859.7 366.8A44.9 28.5 -42.2 1 0 926.2 306.4Z"/>
<path fill="url(#cr)" fill-opacity="1.00" fill-rule="evenodd" d="M1006.5 277.1A44.9 28.6 -25 1 0 925 315.1A44.9 28.6 -25 1 0 1006.5 277.1ZM1010.5 268.1A44.9 28.6 -25 1 0 929.1 306.1A44.9 28.6 -25 1 0 1010.5 268.1Z"/>
<path fill="url(#cr)" fill-opacity="1.00" fill-rule="evenodd" d="M1167.7 860.4A44.9 29.8 157 1 0 1250.4 825.3A44.9 29.8 157 1 0 1167.7 860.4ZM1171.7 851.4A44.9 29.8 157 1 0 1254.4 816.3A44.9 29.8 157 1 0 1171.7 851.4Z"/>
<path fill="url(#cr)" fill-opacity="0.89" fill-rule="evenodd" d="M824.9 443.7A44.9 29.9 -73.3 1 0 799.1 529.8A44.9 29.9 -73.3 1 0 824.9 443.7ZM829 434.7A44.9 29.9 -73.3 1 0 803.1 520.8A44.9 29.9 -73.3 1 0 829 434.7Z"/>
<path fill="url(#cr)" fill-opacity="1.00" fill-rule="evenodd" d="M1251.9 822.7A44.9 30 139.1 1 0 1319.8 764A44.9 30 139.1 1 0 1251.9 822.7ZM1255.9 813.8A44.9 30 139.1 1 0 1323.9 755A44.9 30 139.1 1 0 1255.9 813.8Z"/>
<path fill="url(#cr)" fill-opacity="1.00" fill-rule="evenodd" d="M1170.3 289.6A44.9 30.6 6.3 1 0 1081 279.7A44.9 30.6 6.3 1 0 1170.3 289.6ZM1174.4 280.6A44.9 30.6 6.3 1 0 1085 270.8A44.9 30.6 6.3 1 0 1174.4 280.6Z"/>
<path fill="url(#cr)" fill-opacity="0.76" fill-rule="evenodd" d="M1004.1 846.9A44.9 30.9 -170.8 1 0 1092.8 861.2A44.9 30.9 -170.8 1 0 1004.1 846.9ZM1008.1 837.9A44.9 30.9 -170.8 1 0 1096.8 852.2A44.9 30.9 -170.8 1 0 1008.1 837.9Z"/>
<path fill="url(#cr)" fill-opacity="1.00" fill-rule="evenodd" d="M1349.2 695A44.9 31.6 106.7 1 0 1375 608.9A44.9 31.6 106.7 1 0 1349.2 695ZM1353.2 686A44.9 31.6 106.7 1 0 1379.1 600A44.9 31.6 106.7 1 0 1353.2 686Z"/>
<path fill="url(#cr)" fill-opacity="0.69" fill-rule="evenodd" d="M820 539.3A44.9 32.5 -92.7 1 0 824.2 629A44.9 32.5 -92.7 1 0 820 539.3ZM824.1 530.3A44.9 32.5 -92.7 1 0 828.3 620A44.9 32.5 -92.7 1 0 824.1 530.3Z"/>
<path fill="url(#cr)" fill-opacity="0.56" fill-rule="evenodd" d="M829.3 628A44.9 33.1 -111.6 1 0 862.4 711.5A44.9 33.1 -111.6 1 0 829.3 628ZM833.4 619A44.9 33.1 -111.6 1 0 866.5 702.5A44.9 33.1 -111.6 1 0 833.4 619Z"/>
<path fill="url(#cr)" fill-opacity="0.68" fill-rule="evenodd" d="M924.3 781.8A44.9 33.1 -150.7 1 0 1002.7 825.8A44.9 33.1 -150.7 1 0 924.3 781.8ZM928.4 772.8A44.9 33.1 -150.7 1 0 1006.7 816.8A44.9 33.1 -150.7 1 0 928.4 772.8Z"/>
<path fill="url(#cr)" fill-opacity="0.60" fill-rule="evenodd" d="M865.6 712.9A44.9 33.3 -131.4 1 0 925 780.3A44.9 33.3 -131.4 1 0 865.6 712.9ZM869.7 703.9A44.9 33.3 -131.4 1 0 929.1 771.3A44.9 33.3 -131.4 1 0 869.7 703.9Z"/>
<path fill="url(#cr)" fill-opacity="1.00" fill-rule="evenodd" d="M1249.8 354.3A44.9 33.4 26 1 0 1169.1 314.9A44.9 33.4 26 1 0 1249.8 354.3ZM1253.9 345.3A44.9 33.4 26 1 0 1173.1 305.9A44.9 33.4 26 1 0 1253.9 345.3Z"/>
<path fill="url(#cr)" fill-opacity="1.00" fill-rule="evenodd" d="M903.2 387A44.9 33.6 -55.7 1 0 852.6 461.2A44.9 33.6 -55.7 1 0 903.2 387ZM907.2 378A44.9 33.6 -55.7 1 0 856.6 452.3A44.9 33.6 -55.7 1 0 907.2 378Z"/>
<path fill="url(#cr)" fill-opacity="1.00" fill-rule="evenodd" d="M1084.4 310A44.9 34 -12 1 0 996.5 328.7A44.9 34 -12 1 0 1084.4 310ZM1088.5 301A44.9 34 -12 1 0 1000.6 319.7A44.9 34 -12 1 0 1088.5 301Z"/>
<path fill="url(#cr)" fill-opacity="1.00" fill-rule="evenodd" d="M1353.9 599.1A44.9 34 86.2 1 0 1347.8 509.4A44.9 34 86.2 1 0 1353.9 599.1ZM1357.9 590.1A44.9 34 86.2 1 0 1351.9 500.4A44.9 34 86.2 1 0 1357.9 590.1Z"/>
<path fill="url(#cr)" fill-opacity="1.00" fill-rule="evenodd" d="M1308.9 423.8A44.9 34.1 45.6 1 0 1246 359.6A44.9 34.1 45.6 1 0 1308.9 423.8ZM1312.9 414.8A44.9 34.1 45.6 1 0 1250 350.7A44.9 34.1 45.6 1 0 1312.9 414.8Z"/>
<path fill="url(#cr)" fill-opacity="1.00" fill-rule="evenodd" d="M1345.1 509.7A44.9 34.3 66.2 1 0 1308.7 427.5A44.9 34.3 66.2 1 0 1345.1 509.7ZM1349.1 500.7A44.9 34.3 66.2 1 0 1312.8 418.5A44.9 34.3 66.2 1 0 1349.1 500.7Z"/>
<path fill="url(#cr)" fill-opacity="1.00" fill-rule="evenodd" d="M1087.6 825.7A44.9 34.7 171.3 1 0 1176.4 812.1A44.9 34.7 171.3 1 0 1087.6 825.7ZM1091.6 816.7A44.9 34.7 171.3 1 0 1180.4 803.1A44.9 34.7 171.3 1 0 1091.6 816.7Z"/>
<path fill="url(#cr)" fill-opacity="1.00" fill-rule="evenodd" d="M992.2 340.3A44.9 34.9 -34 1 0 917.7 390.6A44.9 34.9 -34 1 0 992.2 340.3ZM996.2 331.3A44.9 34.9 -34 1 0 921.7 381.6A44.9 34.9 -34 1 0 996.2 331.3Z"/>
<path fill="url(#cr)" fill-opacity="1.00" fill-rule="evenodd" d="M1268.6 750.7A44.9 35.1 125.4 1 0 1320.6 677.5A44.9 35.1 125.4 1 0 1268.6 750.7ZM1272.6 741.7A44.9 35.1 125.4 1 0 1324.7 668.5A44.9 35.1 125.4 1 0 1272.6 741.7Z"/>
<path fill="url(#cr)" fill-opacity="1.00" fill-rule="evenodd" d="M1178.7 796.1A44.9 36 148.5 1 0 1255.4 749.2A44.9 36 148.5 1 0 1178.7 796.1ZM1182.8 787.1A44.9 36 148.5 1 0 1259.4 740.2A44.9 36 148.5 1 0 1182.8 787.1Z"/>
<path fill="url(#cr)" fill-opacity="1.00" fill-rule="evenodd" d="M890 472.4A44.9 37.1 -75.5 1 0 867.6 559.4A44.9 37.1 -75.5 1 0 890 472.4ZM894.1 463.4A44.9 37.1 -75.5 1 0 871.6 550.4A44.9 37.1 -75.5 1 0 894.1 463.4Z"/>
<path fill="url(#cr)" fill-opacity="1.00" fill-rule="evenodd" d="M1167.3 364.7A44.9 37.7 7.7 1 0 1078.2 352.7A44.9 37.7 7.7 1 0 1167.3 364.7ZM1171.3 355.7A44.9 37.7 7.7 1 0 1082.2 343.7A44.9 37.7 7.7 1 0 1171.3 355.7Z"/>
<path fill="url(#cr)" fill-opacity="0.76" fill-rule="evenodd" d="M888 642.6A44.9 37.8 -120.9 1 0 934.2 719.6A44.9 37.8 -120.9 1 0 888 642.6ZM892.1 633.6A44.9 37.8 -120.9 1 0 938.3 710.6A44.9 37.8 -120.9 1 0 892.1 633.6Z"/>
<path fill="url(#cr)" fill-opacity="0.95" fill-rule="evenodd" d="M1004.3 769.4A44.9 37.8 -167.6 1 0 1092.1 788.7A44.9 37.8 -167.6 1 0 1004.3 769.4ZM1008.4 760.4A44.9 37.8 -167.6 1 0 1096.1 779.7A44.9 37.8 -167.6 1 0 1008.4 760.4Z"/>
<path fill="url(#cr)" fill-opacity="0.90" fill-rule="evenodd" d="M884.1 561.3A44.9 38.4 -99.6 1 0 899 649.9A44.9 38.4 -99.6 1 0 884.1 561.3ZM888.1 552.3A44.9 38.4 -99.6 1 0 903.1 640.9A44.9 38.4 -99.6 1 0 888.1 552.3Z"/>
<path fill="url(#cr)" fill-opacity="1.00" fill-rule="evenodd" d="M1281.1 665.4A44.9 38.4 104.3 1 0 1303.2 578.3A44.9 38.4 104.3 1 0 1281.1 665.4ZM1285.1 656.4A44.9 38.4 104.3 1 0 1307.3 569.4A44.9 38.4 104.3 1 0 1285.1 656.4Z"/>
<path fill="url(#cr)" fill-opacity="1.00" fill-rule="evenodd" d="M1285.2 493.5A44.9 38.6 55.2 1 0 1234 419.7A44.9 38.6 55.2 1 0 1285.2 493.5ZM1289.3 484.5A44.9 38.6 55.2 1 0 1238 410.7A44.9 38.6 55.2 1 0 1289.3 484.5Z"/>
<path fill="url(#cr)" fill-opacity="0.86" fill-rule="evenodd" d="M936 702.5A44.9 38.7 -142.3 1 0 1007.1 757.4A44.9 38.7 -142.3 1 0 936 702.5ZM940.1 693.5A44.9 38.7 -142.3 1 0 1011.2 748.4A44.9 38.7 -142.3 1 0 940.1 693.5Z"/>
<path fill="url(#cr)" fill-opacity="1.00" fill-rule="evenodd" d="M1236.7 431.9A44.9 39.1 32.6 1 0 1161 383.4A44.9 39.1 32.6 1 0 1236.7 431.9ZM1240.7 422.9A44.9 39.1 32.6 1 0 1165 374.5A44.9 39.1 32.6 1 0 1240.7 422.9Z"/>
<path fill="url(#cr)" fill-opacity="1.00" fill-rule="evenodd" d="M1288.3 575.9A44.9 39.4 77.9 1 0 1269.5 488A44.9 39.4 77.9 1 0 1288.3 575.9ZM1292.3 566.9A44.9 39.4 77.9 1 0 1273.5 479.1A44.9 39.4 77.9 1 0 1292.3 566.9Z"/>
<path fill="url(#cr)" fill-opacity="1.00" fill-rule="evenodd" d="M979.5 421.4A44.9 39.8 -51.1 1 0 923 491.3A44.9 39.8 -51.1 1 0 979.5 421.4ZM983.5 412.4A44.9 39.8 -51.1 1 0 927.1 482.3A44.9 39.8 -51.1 1 0 983.5 412.4Z"/>
<path fill="url(#cr)" fill-opacity="1.00" fill-rule="evenodd" d="M1080.6 386.5A44.9 40 -18.1 1 0 995.2 414.5A44.9 40 -18.1 1 0 1080.6 386.5ZM1084.7 377.5A44.9 40 -18.1 1 0 999.3 405.5A44.9 40 -18.1 1 0 1084.7 377.5Z"/>
<path fill="url(#cr)" fill-opacity="1.00" fill-rule="evenodd" d="M1088.1 747A44.9 40.6 167.1 1 0 1175.7 726.9A44.9 40.6 167.1 1 0 1088.1 747ZM1092.1 738A44.9 40.6 167.1 1 0 1179.7 717.9A44.9 40.6 167.1 1 0 1092.1 738Z"/>
<path fill="url(#cr)" fill-opacity="1.00" fill-rule="evenodd" d="M1188.9 714.8A44.9 40.8 131.3 1 0 1248.2 647.3A44.9 40.8 131.3 1 0 1188.9 714.8ZM1192.9 705.8A44.9 40.8 131.3 1 0 1252.3 638.4A44.9 40.8 131.3 1 0 1192.9 705.8Z"/>
<path fill="url(#cr)" fill-opacity="1.00" fill-rule="evenodd" d="M947 603.8A44.9 41.8 -119.8 1 0 991.6 681.8A44.9 41.8 -119.8 1 0 947 603.8ZM951 594.8A44.9 41.8 -119.8 1 0 995.6 672.8A44.9 41.8 -119.8 1 0 951 594.8Z"/>
<path fill="url(#cr)" fill-opacity="1.00" fill-rule="evenodd" d="M962.3 510.1A44.9 42.1 -83 1 0 951.4 599.3A44.9 42.1 -83 1 0 962.3 510.1ZM966.3 501.1A44.9 42.1 -83 1 0 955.4 590.3A44.9 42.1 -83 1 0 966.3 501.1Z"/>
<path fill="url(#cr)" fill-opacity="1.00" fill-rule="evenodd" d="M1226.2 530.6A44.9 42.4 53.9 1 0 1173.2 458A44.9 42.4 53.9 1 0 1226.2 530.6ZM1230.2 521.6A44.9 42.4 53.9 1 0 1177.3 449.1A44.9 42.4 53.9 1 0 1230.2 521.6Z"/>
<path fill="url(#cr)" fill-opacity="1.00" fill-rule="evenodd" d="M1002.8 673.1A44.9 42.5 -157.3 1 0 1085.7 707.8A44.9 42.5 -157.3 1 0 1002.8 673.1ZM1006.8 664.1A44.9 42.5 -157.3 1 0 1089.7 698.8A44.9 42.5 -157.3 1 0 1006.8 664.1Z"/>
<path fill="url(#cr)" fill-opacity="1.00" fill-rule="evenodd" d="M1168.2 457.3A44.9 42.5 13.8 1 0 1081 436A44.9 42.5 13.8 1 0 1168.2 457.3ZM1172.3 448.4A44.9 42.5 13.8 1 0 1085 427A44.9 42.5 13.8 1 0 1172.3 448.4Z"/>
<path fill="url(#cr)" fill-opacity="1.00" fill-rule="evenodd" d="M1207.8 627.1A44.9 42.9 95.3 1 0 1216.1 537.6A44.9 42.9 95.3 1 0 1207.8 627.1ZM1211.9 618.1A44.9 42.9 95.3 1 0 1220.1 528.7A44.9 42.9 95.3 1 0 1211.9 618.1Z"/>
<path fill="url(#cr)" fill-opacity="1.00" fill-rule="evenodd" d="M1074.8 471.3A44.9 43.7 -37 1 0 1003 525.3A44.9 43.7 -37 1 0 1074.8 471.3ZM1078.9 462.3A44.9 43.7 -37 1 0 1007.1 516.3A44.9 43.7 -37 1 0 1078.9 462.3Z"/>
<path fill="url(#cr)" fill-opacity="1.00" fill-rule="evenodd" d="M1089.5 659.5A44.9 44.1 152.3 1 0 1169 617.7A44.9 44.1 152.3 1 0 1089.5 659.5ZM1093.5 650.5A44.9 44.1 152.3 1 0 1173.1 608.7A44.9 44.1 152.3 1 0 1093.5 650.5Z"/>
<path fill="url(#cr)" fill-opacity="1.00" fill-rule="evenodd" d="M1024.7 553.7A44.9 44.5 -114.5 1 0 1061.9 635.5A44.9 44.5 -114.5 1 0 1024.7 553.7ZM1028.7 544.7A44.9 44.5 -114.5 1 0 1065.9 626.5A44.9 44.5 -114.5 1 0 1028.7 544.7Z"/>
<path fill="url(#cr)" fill-opacity="1.00" fill-rule="evenodd" d="M1155.7 574.7A44.9 44.7 46.2 1 0 1093.5 509.8A44.9 44.7 46.2 1 0 1155.7 574.7ZM1159.7 565.7A44.9 44.7 46.2 1 0 1097.6 500.8A44.9 44.7 46.2 1 0 1159.7 565.7Z"/>
<path fill="#fff" fill-opacity="0.02" d="M1180.2 177.9L1204.3 184L1206.8 189.9L1182.7 183.8Z"/>
<path fill="#fff" fill-opacity="0.02" d="M1023.3 170.5L1047.6 168.5L1042 174.2L1017.7 176.2Z"/>
<path fill="#fff" fill-opacity="0.05" d="M1257.5 212L1278.9 221.6L1284.9 230.2L1263.5 220.6Z"/>
<path fill="#fff" fill-opacity="0.04" d="M1465.7 513.8L1471.4 518.4L1472.3 543.1L1466.7 538.5Z"/>
<path fill="#fff" fill-opacity="0.06" d="M1329.7 261.7L1347.1 273.1L1354.9 286.1L1337.5 274.6Z"/>
<path fill="#fff" fill-opacity="0.06" d="M1443.8 426.2L1452 434.6L1456.8 457.1L1448.6 448.6Z"/>
<path fill="#fff" fill-opacity="0.07" d="M1396.8 336.3L1409.3 347.4L1416.7 365.6L1404.2 354.5Z"/>
<path fill="#fff" fill-opacity="0.05" d="M942.2 200.5L964 195.1L954.9 204.2L933.1 209.6Z"/>
<path fill="#fff" fill-opacity="0.07" d="M1104.8 174.7L1129.9 177L1128.4 182.9L1103.4 180.6Z"/>
<path fill="#fff" fill-opacity="0.03" d="M1442.4 675.6L1450.5 672.6L1443.8 696.3L1435.7 699.2Z"/>
<path fill="#fff" fill-opacity="0.05" d="M876.9 244.4L896 238.3L885.9 252.4L866.9 258.5Z"/>
<path fill="#fff" fill-opacity="0.11" d="M1189.4 199.6L1213.3 205.8L1215.5 215.1L1191.6 208.9Z"/>
<path fill="#fff" fill-opacity="0.07" d="M1448.7 581.5L1457.6 583L1455 608L1446.1 606.5Z"/>
<path fill="#fff" fill-opacity="0.13" d="M1023.8 191.5L1048.2 190.3L1043 199.9L1018.6 201Z"/>
<path fill="#fff" fill-opacity="0.04" d="M1389.9 744.5L1403.2 740.1L1394.6 761.6L1381.4 766Z"/>
<path fill="#fff" fill-opacity="0.15" d="M1268.3 246.4L1289.7 255L1294 268.6L1272.6 260.1Z"/>
<path fill="#fff" fill-opacity="0.16" d="M1432.1 486.7L1443.2 492L1444.3 516.3L1433.1 511Z"/>
<path fill="#fff" fill-opacity="0.17" d="M1338.5 310.6L1356.4 319.9L1361.4 337.8L1343.4 328.5Z"/>
<path fill="#fff" fill-opacity="0.18" d="M1396.8 395.9L1411 404L1414.7 425.8L1400.5 417.8Z"/>
<path fill="#fff" fill-opacity="0.04" d="M829.4 304.7L846.5 300L837.4 318.9L820.3 323.7Z"/>
<path fill="#fff" fill-opacity="0.17" d="M950.1 226.5L972.7 223.4L965.3 237L942.6 240.1Z"/>
<path fill="#fff" fill-opacity="0.19" d="M1106.1 206.3L1131.1 209L1129.3 220.6L1104.3 218Z"/>
<path fill="#fff" fill-opacity="0.03" d="M1322.7 798.3L1340.5 794.1L1331.8 813.3L1314 817.5Z"/>
<path fill="#fff" fill-opacity="0.11" d="M1406.1 655.8L1419.3 655L1413.9 679.2L1400.7 680Z"/>
<path fill="#fff" fill-opacity="0.15" d="M892 270L912.6 266.3L904.4 283.4L883.8 287Z"/>
<path fill="#fff" fill-opacity="0.25" d="M1192.9 245.2L1216.9 250.8L1217.8 265.7L1193.9 260.1Z"/>
<path fill="#fff" fill-opacity="0.02" d="M806.4 373.6L823.1 371.3L816 393.6L799.4 396Z"/>
<path fill="#fff" fill-opacity="0.26" d="M1020.9 234.7L1045.4 234.7L1040.7 249.6L1016.2 249.6Z"/>
<path fill="#fff" fill-opacity="0.23" d="M1401.2 555.3L1415.5 558L1413.5 583L1399.2 580.3Z"/>
<path fill="#fff" fill-opacity="0.28" d="M1268.1 301L1289.9 308.1L1292.2 326.5L1270.4 319.4Z"/>
<path fill="#fff" fill-opacity="0.13" d="M1341.5 722.9L1359.1 721L1352.4 743.6L1334.8 745.5Z"/>
<path fill="#fff" fill-opacity="0.29" d="M1376.4 461.7L1392.7 467.1L1393.3 491.1L1377 485.7Z"/>
<path fill="#fff" fill-opacity="0.30" d="M1329.7 375.6L1348.8 382.5L1350.9 404.1L1331.8 397.2Z"/>
<path fill="#fff" fill-opacity="0.18" d="M873.3 325.2L893.6 323L886.6 343.5L866.3 345.7Z"/>
<path fill="#fff" fill-opacity="0.31" d="M948.4 276.6L971.4 275.2L965.1 293.2L942.2 294.5Z"/>
<path fill="#fff" fill-opacity="0.01" d="M1191.3 822.9L1214.7 822.1L1208.8 840.3L1185.4 841.2Z"/>
<path fill="#fff" fill-opacity="0.10" d="M1269.7 772.6L1290.7 770.9L1284 791.7L1263.1 793.3Z"/>
<path fill="#fff" fill-opacity="0.34" d="M1105.2 263.5L1130.2 266.4L1128.1 283.4L1103.1 280.5Z"/>
<path fill="#fff" fill-opacity="0.24" d="M1346.3 628L1364.2 628.9L1360 653.5L1342 652.6Z"/>
<path fill="#fff" fill-opacity="0.38" d="M1188.6 311.2L1212.7 316.1L1212.3 335.6L1188.3 330.7Z"/>
<path fill="#fff" fill-opacity="0.16" d="M861.4 401.3L881.8 401.1L876.3 424.5L856 424.6Z"/>
<path fill="#fff" fill-opacity="0.39" d="M1021.3 297.9L1045.9 299L1041.7 318.3L1017.1 317.2Z"/>
<path fill="#fff" fill-opacity="0.40" d="M1333.3 528.8L1352.3 532.3L1350.4 557.2L1331.4 553.7Z"/>
<path fill="#fff" fill-opacity="0.40" d="M1257.1 366.8L1279.4 372.5L1279.8 394.2L1257.5 388.5Z"/>
<path fill="#fff" fill-opacity="0.40" d="M1307.9 442.9L1328.2 448L1327.9 471.7L1307.6 466.7Z"/>
<path fill="#fff" fill-opacity="0.38" d="M937.2 343.5L960.1 343.5L954.7 364.9L931.8 365Z"/>
<path fill="#fff" fill-opacity="0.23" d="M1277.7 691L1298.7 691.2L1293.6 714.7L1272.5 714.5Z"/>
<path fill="#fff" fill-opacity="0.14" d="M1198.9 750.4L1222.3 750.8L1217.2 772.4L1193.9 772Z"/>
<path fill="#fff" fill-opacity="0.07" d="M861.2 491.3L882 493.2L878.4 518L857.6 516.1Z"/>
<path fill="#fff" fill-opacity="0.46" d="M1102.5 335.5L1127.5 338.5L1125 359.5L1100 356.4Z"/>
<path fill="#fff" fill-opacity="0.40" d="M1274.2 597.2L1295.6 599.3L1292.2 624.1L1270.7 622Z"/>
<path fill="#fff" fill-opacity="0.48" d="M1239.8 431.3L1262.6 435.8L1261.5 459.4L1238.7 454.9Z"/>
<path fill="#fff" fill-opacity="0.49" d="M1178.5 383.1L1202.7 387.3L1201.2 409.8L1177 405.6Z"/>
<path fill="#fff" fill-opacity="0.49" d="M1259.8 506.5L1282 510.2L1279.9 534.9L1257.8 531.3Z"/>
<path fill="#fff" fill-opacity="0.35" d="M932.8 432.3L955.9 433.8L951.7 457.8L928.6 456.4Z"/>
<path fill="#fff" fill-opacity="0.50" d="M1018.5 377L1043.2 378.9L1039.4 401.5L1014.7 399.6Z"/>
<path fill="#fff" fill-opacity="0.14" d="M1112.3 713.2L1137 715.4L1133.5 738.2L1108.7 736Z"/>
<path fill="#fff" fill-opacity="0.29" d="M1199.8 656.9L1223.4 658.7L1219.3 682.8L1195.8 681Z"/>
<path fill="#fff" fill-opacity="0.01" d="M949.4 617.5L973.2 621.2L971.1 645.7L947.3 642Z"/>
<path fill="#fff" fill-opacity="0.21" d="M937.7 529.6L961.1 532.4L958.1 557.4L934.7 554.6Z"/>
<path fill="#fff" fill-opacity="0.55" d="M1179.8 469.1L1203.9 472.7L1201.7 497.1L1177.5 493.5Z"/>
<path fill="#fff" fill-opacity="0.07" d="M1024.1 665.7L1048.9 669L1046.4 692.8L1021.6 689.4Z"/>
<path fill="#fff" fill-opacity="0.55" d="M1104.5 422L1129.4 425.2L1126.7 448.8L1101.8 445.7Z"/>
<path fill="#fff" fill-opacity="0.54" d="M1192.6 557.2L1216.4 560.1L1213.4 585.1L1189.6 582.2Z"/>
<path fill="#fff" fill-opacity="0.52" d="M1019.2 473.5L1043.9 476.1L1040.6 500.7L1015.9 498Z"/>
<path fill="#fff" fill-opacity="0.32" d="M1109.4 613.7L1134.3 616.4L1131.1 641.1L1106.2 638.3Z"/>
<path fill="#fff" fill-opacity="0.31" d="M1023.3 569.3L1048.1 572.4L1045.2 597.4L1020.5 594.3Z"/>
<path fill="#fff" fill-opacity="0.58" d="M1104.6 517L1129.5 520.1L1126.6 545L1101.7 541.9Z"/>
<path fill="none" stroke="#e2852c" stroke-width="0.95" shape-rendering="auto" d="M738.6 394.9A49.1 1.3 -70.7 1 0 706.1 487.5A49.1 1.3 -70.7 1 0 738.6 394.9ZM738.3 395.2A46.3 0.7 -70.3 1 0 707.2 482.5A46.3 0.7 -70.3 1 0 738.3 395.2ZM739.3 393.6A44.9 1.6 -69.9 1 0 708.4 478A44.9 1.6 -69.9 1 0 739.3 393.6ZM735.5 400.9A47.2 0.4 -71.4 1 0 705.4 490.4A47.2 0.4 -71.4 1 0 735.5 400.9ZM699.3 529.8A49.1 1.3 -91.1 1 0 701.2 627.9A49.1 1.3 -91.1 1 0 699.3 529.8ZM699.2 530.2A46.3 0.6 -90.7 1 0 700.4 622.8A46.3 0.6 -90.7 1 0 699.2 530.2ZM699.6 528.4A44.9 1.5 -90.3 1 0 700 618.3A44.9 1.5 -90.3 1 0 699.6 528.4ZM698.6 536.4A47.2 0.4 -91.8 1 0 701.5 630.8A47.2 0.4 -91.8 1 0 698.6 536.4ZM850.3 258.3A49.1 1.2 -45 1 0 780.8 327.7A49.1 1.2 -45 1 0 850.3 258.3ZM849.8 258.5A46.3 0.5 -44.7 1 0 783.9 323.6A46.3 0.5 -44.7 1 0 849.8 258.5ZM851.5 257.4A44.9 1.4 -44.2 1 0 787 320.1A44.9 1.4 -44.2 1 0 851.5 257.4ZM844.8 262.5A47.2 0.5 -45.7 1 0 778.8 330.2A47.2 0.5 -45.7 1 0 844.8 262.5ZM698.8 608.4A49.1 1.1 -102.4 1 0 720 704.3A49.1 1.1 -102.4 1 0 698.8 608.4ZM698.8 608.8A46.3 0.5 -102.1 1 0 718.2 699.4A46.3 0.5 -102.1 1 0 698.8 608.8ZM698.8 607.1A44.9 1.4 -101.6 1 0 716.9 695.1A44.9 1.4 -101.6 1 0 698.8 607.1ZM699.4 615A47.2 0.5 -103.1 1 0 720.9 707A47.2 0.5 -103.1 1 0 699.4 615ZM717.9 698.4A49.1 1 -115.7 1 0 760.5 786.8A49.1 1 -115.7 1 0 717.9 698.4ZM718 698.7A46.3 0.4 -115.4 1 0 757.7 782.4A46.3 0.4 -115.4 1 0 718 698.7ZM717.5 697.1A44.9 1.3 -114.9 1 0 755.4 778.6A44.9 1.3 -114.9 1 0 717.5 697.1ZM720 704.5A47.2 0.7 -116.4 1 0 762 789.1A47.2 0.7 -116.4 1 0 720 704.5ZM1001.7 185.4A49.1 0.8 -20.6 1 0 909.8 219.9A49.1 0.8 -20.6 1 0 1001.7 185.4ZM1001.3 185.5A46.3 0.2 -20.2 1 0 914.4 217.5A46.3 0.2 -20.2 1 0 1001.3 185.5ZM1003 185.2A44.9 1.1 -19.8 1 0 918.4 215.6A44.9 1.1 -19.8 1 0 1003 185.2ZM995.3 187A47.2 0.9 -21.2 1 0 907.3 221.2A47.2 0.9 -21.2 1 0 995.3 187ZM760.1 786.2A49.1 0.7 -129.8 1 0 823 861.5A49.1 0.7 -129.8 1 0 760.1 786.2ZM760.2 786.5A46.3 0.2 -129.5 1 0 819.1 858A46.3 0.2 -129.5 1 0 760.2 786.5ZM759.4 785A44.9 1 -129 1 0 816 854.8A44.9 1 -129 1 0 759.4 785ZM763.6 791.5A47.2 1 -130.5 1 0 825 863.4A47.2 1 -130.5 1 0 763.6 791.5ZM818.4 857.2A49.1 0.4 -143.1 1 0 896.9 916.1A49.1 0.4 -143.1 1 0 818.4 857.2ZM818.6 857.5A46.3 0.2 -142.8 1 0 892.4 913.5A46.3 0.2 -142.8 1 0 818.6 857.5ZM817.5 856.3A44.9 0.8 -142.3 1 0 888.6 911.2A44.9 0.8 -142.3 1 0 817.5 856.3ZM823.1 861.6A47.2 1.2 -143.8 1 0 899.4 917.4A47.2 1.2 -143.8 1 0 823.1 861.6ZM1178 183.5A49.1 0.3 5.1 1 0 1080.3 174.7A49.1 0.3 5.1 1 0 1178 183.5ZM1177.6 183.4A46.3 0.3 5.5 1 0 1085.4 174.6A46.3 0.3 5.5 1 0 1177.6 183.4ZM1179.4 183.8A44.9 0.6 5.9 1 0 1090 174.6A44.9 0.6 5.9 1 0 1179.4 183.8ZM1171.5 182.3A47.2 1.4 4.4 1 0 1077.3 175A47.2 1.4 4.4 1 0 1171.5 182.3ZM880.1 906A49.1 0.2 -154.5 1 0 968.7 948.2A49.1 0.2 -154.5 1 0 880.1 906ZM884.5 908.7A46.3 0.7 -154.8 1 0 968.3 948A46.3 0.7 -154.8 1 0 884.5 908.7ZM888.4 911.1A44.9 0.2 -155.3 1 0 970 948.6A44.9 0.2 -155.3 1 0 888.4 911.1ZM877.8 904.1A47.2 1.8 -153.8 1 0 962.6 945.8A47.2 1.8 -153.8 1 0 877.8 904.1ZM1307.9 237A49.1 0.2 25.5 1 0 1219.3 194.8A49.1 0.2 25.5 1 0 1307.9 237ZM1307.5 236.9A46.3 0.7 25.8 1 0 1224.2 196.5A46.3 0.7 25.8 1 0 1307.5 236.9ZM1309 237.8A44.9 0.2 26.3 1 0 1228.5 198A44.9 0.2 26.3 1 0 1309 237.8ZM1302.2 233.8A47.2 1.8 24.8 1 0 1216.4 194.2A47.2 1.8 24.8 1 0 1302.2 233.8ZM1010 959.5A49.1 0.3 -174.9 1 0 1107.7 968.3A49.1 0.3 -174.9 1 0 1010 959.5ZM1015 960.6A46.3 0.3 -175.2 1 0 1107.3 968.3A46.3 0.3 -175.2 1 0 1015 960.6ZM1019.5 961.4A44.9 0.6 -175.7 1 0 1109.1 968.2A44.9 0.6 -175.7 1 0 1019.5 961.4ZM1007.1 958.7A47.2 1.4 -174.2 1 0 1101.1 968.3A47.2 1.4 -174.2 1 0 1007.1 958.7ZM1369.6 285.8A49.1 0.4 36.9 1 0 1291.1 226.9A49.1 0.4 36.9 1 0 1369.6 285.8ZM1365.9 282.2A46.3 0.2 36.5 1 0 1291.5 227.1A46.3 0.2 36.5 1 0 1365.9 282.2ZM1362.5 279.1A44.9 0.8 36.1 1 0 1289.8 226.2A44.9 0.8 36.1 1 0 1362.5 279.1ZM1371.7 288A47.2 1.2 37.6 1 0 1296.9 230.4A47.2 1.2 37.6 1 0 1371.7 288ZM1427.9 356.8A49.1 0.7 50.2 1 0 1365 281.5A49.1 0.7 50.2 1 0 1427.9 356.8ZM1425.2 352.5A46.3 0.2 49.8 1 0 1365.4 281.8A46.3 0.2 49.8 1 0 1425.2 352.5ZM1422.5 348.7A44.9 1 49.4 1 0 1363.9 280.5A44.9 1 49.4 1 0 1422.5 348.7ZM1429.5 359.5A47.2 1 50.9 1 0 1369.9 286.2A47.2 1 50.9 1 0 1429.5 359.5ZM1186.3 957.6A49.1 0.8 159.4 1 0 1278.2 923.1A49.1 0.8 159.4 1 0 1186.3 957.6ZM1191.3 956.4A46.3 0.2 159.1 1 0 1277.9 923.3A46.3 0.2 159.1 1 0 1191.3 956.4ZM1195.8 955.1A44.9 1.1 158.6 1 0 1279.5 922.4A44.9 1.1 158.6 1 0 1195.8 955.1ZM1183.4 958.2A47.2 0.9 160.1 1 0 1272.3 926.1A47.2 0.9 160.1 1 0 1183.4 958.2ZM1470.1 444.6A49.1 1 64.3 1 0 1427.5 356.2A49.1 1 64.3 1 0 1470.1 444.6ZM1468.5 439.8A46.3 0.4 63.9 1 0 1427.8 356.5A46.3 0.4 63.9 1 0 1468.5 439.8ZM1466.8 435.4A44.9 1.2 63.4 1 0 1426.6 355A44.9 1.2 63.4 1 0 1466.8 435.4ZM1471.1 447.5A47.2 0.7 65 1 0 1431.1 361.9A47.2 0.7 65 1 0 1471.1 447.5ZM1489.2 534.6A49.1 1.1 77.6 1 0 1468 438.7A49.1 1.1 77.6 1 0 1489.2 534.6ZM1488.7 529.4A46.3 0.5 77.2 1 0 1468.2 439.1A46.3 0.5 77.2 1 0 1488.7 529.4ZM1488.1 524.9A44.9 1.4 76.8 1 0 1467.5 437.4A44.9 1.4 76.8 1 0 1488.1 524.9ZM1489.5 537.5A47.2 0.5 78.3 1 0 1470.3 445A47.2 0.5 78.3 1 0 1489.5 537.5ZM1337.7 884.7A49.1 1.2 135 1 0 1407.2 815.3A49.1 1.2 135 1 0 1337.7 884.7ZM1341.9 881.5A46.3 0.6 134.6 1 0 1407 815.6A46.3 0.6 134.6 1 0 1341.9 881.5ZM1345.2 878.6A44.9 1.4 134.2 1 0 1407.9 814.2A44.9 1.4 134.2 1 0 1345.2 878.6ZM1335.8 886.4A47.2 0.5 135.6 1 0 1403.3 820.3A47.2 0.5 135.6 1 0 1335.8 886.4ZM1488.7 613.2A49.1 1.3 88.9 1 0 1486.8 515.1A49.1 1.3 88.9 1 0 1488.7 613.2ZM1489.3 608.1A46.3 0.6 88.6 1 0 1487 515.5A46.3 0.6 88.6 1 0 1489.3 608.1ZM1489.5 603.5A44.9 1.5 88.1 1 0 1486.5 513.7A44.9 1.5 88.1 1 0 1489.5 603.5ZM1488.5 616.1A47.2 0.4 89.6 1 0 1487.8 521.6A47.2 0.4 89.6 1 0 1488.5 616.1ZM1449.4 748.1A49.1 1.3 109.3 1 0 1481.9 655.5A49.1 1.3 109.3 1 0 1449.4 748.1ZM1451.8 743.5A46.3 0.7 109 1 0 1481.9 655.9A46.3 0.7 109 1 0 1451.8 743.5ZM1453.5 739.3A44.9 1.6 108.5 1 0 1482.1 654.1A44.9 1.6 108.5 1 0 1453.5 739.3ZM1448.3 750.6A47.2 0.4 110 1 0 1480.6 661.9A47.2 0.4 110 1 0 1448.3 750.6ZM712.6 466.9A49.1 4.4 -81.8 1 0 698.6 564.1A49.1 4.4 -81.8 1 0 712.6 466.9ZM713 467.3A46.3 4.7 -81.4 1 0 699.2 558.9A46.3 4.7 -81.4 1 0 713 467.3ZM712.7 465.6A44.9 3.7 -81 1 0 698.7 554.4A44.9 3.7 -81 1 0 712.7 465.6ZM712.5 473.4A47.2 5.9 -82.5 1 0 700.1 567A47.2 5.9 -82.5 1 0 712.5 473.4ZM922.4 215.8A49.1 5 -32.9 1 0 840 269.1A49.1 5 -32.9 1 0 922.4 215.8ZM922.9 216A46.3 5.2 -32.4 1 0 844.7 265.7A46.3 5.2 -32.4 1 0 922.9 216ZM922.9 215.1A44.9 4.1 -32.2 1 0 846.8 263A44.9 4.1 -32.2 1 0 922.9 215.1ZM919.4 219.2A47.2 6.5 -33.3 1 0 840.4 271A47.2 6.5 -33.3 1 0 919.4 219.2ZM787.3 322.8A49.1 5.2 -58.1 1 0 735.4 406.2A49.1 5.2 -58.1 1 0 787.3 322.8ZM787.7 323.2A46.3 5.4 -57.7 1 0 738.2 401.5A46.3 5.4 -57.7 1 0 787.7 323.2ZM787.8 321.7A44.9 4.3 -57.3 1 0 739.2 397.4A44.9 4.3 -57.3 1 0 787.8 321.7ZM785.2 328.2A47.2 6.6 -58.7 1 0 736.1 408.9A47.2 6.6 -58.7 1 0 785.2 328.2ZM1249.5 209.1A49.1 5.7 16.1 1 0 1155.2 181.9A49.1 5.7 16.1 1 0 1249.5 209.1ZM1249.2 209.5A46.3 5.9 16.4 1 0 1160.3 183.3A46.3 5.9 16.4 1 0 1249.2 209.5ZM1250.8 209.2A44.9 4.8 16.9 1 0 1164.8 183.2A44.9 4.8 16.9 1 0 1250.8 209.2ZM1243.4 208.5A47.2 7.1 15.5 1 0 1152.3 183.3A47.2 7.1 15.5 1 0 1243.4 208.5ZM936.2 932.9A49.1 5.7 -163.6 1 0 1030.3 960.7A49.1 5.7 -163.6 1 0 936.2 932.9ZM940.9 935.5A46.3 4.8 -163.9 1 0 1030 961.1A46.3 4.8 -163.9 1 0 940.9 935.5ZM945.2 936.2A44.9 5.6 -164.4 1 0 1031.7 960.5A44.9 5.6 -164.4 1 0 945.2 936.2ZM933.6 933.2A47.2 3.8 -162.9 1 0 1023.9 961A47.2 3.8 -162.9 1 0 933.6 933.2ZM1090.3 177.3A49.1 5.9 -7.7 1 0 993.1 190.5A49.1 5.9 -7.7 1 0 1090.3 177.3ZM1089.9 177.9A46.3 6.1 -7.3 1 0 998.1 189.8A46.3 6.1 -7.3 1 0 1089.9 177.9ZM1091.7 177A44.9 5 -6.9 1 0 1002.5 187.7A44.9 5 -6.9 1 0 1091.7 177ZM1083.8 179.3A47.2 7.3 -8.4 1 0 990.3 193.1A47.2 7.3 -8.4 1 0 1083.8 179.3ZM1095 964.5A49.1 7 172.7 1 0 1192.3 952A49.1 7 172.7 1 0 1095 964.5ZM1100.1 965.1A46.3 6 172.4 1 0 1191.9 952.8A46.3 6 172.4 1 0 1100.1 965.1ZM1104.7 963.9A44.9 6.7 171.9 1 0 1193.7 951.2A44.9 6.7 171.9 1 0 1104.7 963.9ZM1092 966.2A47.2 5.1 173.4 1 0 1185.9 955.4A47.2 5.1 173.4 1 0 1092 966.2ZM1473.1 675.3A49.1 7 98.1 1 0 1487 578.2A49.1 7 98.1 1 0 1473.1 675.3ZM1475 670.3A46.3 6 97.8 1 0 1487.6 578.6A46.3 6 97.8 1 0 1475 670.3ZM1475 665.9A44.9 6.8 97.3 1 0 1486.5 576.8A44.9 6.8 97.3 1 0 1475 665.9ZM1474.1 678.1A47.2 5.1 98.8 1 0 1488.5 584.7A47.2 5.1 98.8 1 0 1474.1 678.1ZM1263 926.3A49.1 7 147.4 1 0 1345.7 873.3A49.1 7 147.4 1 0 1263 926.3ZM1268.8 924.1A46.3 6.1 146.9 1 0 1346.4 873.4A46.3 6.1 146.9 1 0 1268.8 924.1ZM1270.7 921.8A44.9 6.9 146.7 1 0 1345.7 872.4A44.9 6.9 146.7 1 0 1270.7 921.8ZM1264.2 927.7A47.2 5 147.6 1 0 1344 877.1A47.2 5 147.6 1 0 1264.2 927.7ZM1398 819.3A49.1 7.7 122 1 0 1450 736.1A49.1 7.7 122 1 0 1398 819.3ZM1402 815.3A46.3 6.7 121.6 1 0 1450.6 736.4A46.3 6.7 121.6 1 0 1402 815.3ZM1403.3 811.7A44.9 7.4 121.2 1 0 1449.9 734.8A44.9 7.4 121.2 1 0 1403.3 811.7ZM1398.6 821.6A47.2 5.7 122.5 1 0 1449.4 741.9A47.2 5.7 122.5 1 0 1398.6 821.6ZM702.6 553.2A49.1 8 -94.5 1 0 710.4 651.1A49.1 8 -94.5 1 0 702.6 553.2ZM703.4 553.6A46.3 8.1 -94.2 1 0 710.2 646A46.3 8.1 -94.2 1 0 703.4 553.6ZM702.2 551.8A44.9 7 -93.7 1 0 708 641.5A44.9 7 -93.7 1 0 702.2 551.8ZM704.9 559.8A47.2 9.3 -95.2 1 0 713.5 653.9A47.2 9.3 -95.2 1 0 704.9 559.8ZM861.4 885.1A49.1 8.9 -150.7 1 0 947 933.2A49.1 8.9 -150.7 1 0 861.4 885.1ZM863.5 885.4A46.3 9 -150.5 1 0 944.1 931A46.3 9 -150.5 1 0 863.5 885.4ZM859.6 884.1A44.9 8 -149.7 1 0 937.2 929.4A44.9 8 -149.7 1 0 859.6 884.1ZM871.2 889.4A47.2 10 -152 1 0 954.6 933.8A47.2 10 -152 1 0 871.2 889.4ZM710 642A49.1 9 -107.6 1 0 739.7 735.5A49.1 9 -107.6 1 0 710 642ZM711 642.4A46.3 9 -107.3 1 0 738.6 730.8A46.3 9 -107.3 1 0 711 642.4ZM709.3 640.6A44.9 7.9 -106.8 1 0 735.2 726.6A44.9 7.9 -106.8 1 0 709.3 640.6ZM714 648.4A47.2 10.2 -108.4 1 0 743.9 738.1A47.2 10.2 -108.4 1 0 714 648.4ZM1323 256.3A49.1 9.5 28.8 1 0 1237 209A49.1 9.5 28.8 1 0 1323 256.3ZM1320.7 253.4A46.3 8.3 28.7 1 0 1239.4 209A46.3 8.3 28.7 1 0 1320.7 253.4ZM1314.4 250.4A44.9 8.8 27.8 1 0 1234.9 208.5A44.9 8.8 27.8 1 0 1314.4 250.4ZM1329.8 258.8A47.2 7.8 30.1 1 0 1248.1 211.4A47.2 7.8 30.1 1 0 1329.8 258.8ZM796.6 823.2A49.1 9.5 -137.5 1 0 869 889.6A49.1 9.5 -137.5 1 0 796.6 823.2ZM798.2 823.5A46.3 9.6 -137.3 1 0 866.3 886.4A46.3 9.6 -137.3 1 0 798.2 823.5ZM795.1 822A44.9 8.5 -136.6 1 0 860.4 883.8A44.9 8.5 -136.6 1 0 795.1 822ZM804.5 828.4A47.2 10.6 -138.6 1 0 875.4 890.9A47.2 10.6 -138.6 1 0 804.5 828.4ZM741.8 738A49.1 9.6 -122.5 1 0 794.6 820.7A49.1 9.6 -122.5 1 0 741.8 738ZM743.1 738.3A46.3 9.6 -122.3 1 0 792.6 816.6A46.3 9.6 -122.3 1 0 743.1 738.3ZM740.7 736.6A44.9 8.5 -121.7 1 0 787.9 813.1A44.9 8.5 -121.7 1 0 740.7 736.6ZM747.8 743.9A47.2 10.7 -123.5 1 0 799.9 822.7A47.2 10.7 -123.5 1 0 747.8 743.9ZM1481.7 588.6A49.1 10.4 85.3 1 0 1473.6 490.8A49.1 10.4 85.3 1 0 1481.7 588.6ZM1482.9 583.5A46.3 9.3 84.9 1 0 1474.7 491.2A46.3 9.3 84.9 1 0 1482.9 583.5ZM1481.4 578.9A44.9 9.9 84.4 1 0 1472.6 489.4A44.9 9.9 84.4 1 0 1481.4 578.9ZM1484.2 591.5A47.2 8.4 86 1 0 1477.6 497.3A47.2 8.4 86 1 0 1484.2 591.5ZM1387.6 318.1A49.1 10.6 41.9 1 0 1314.5 252.5A49.1 10.6 41.9 1 0 1387.6 318.1ZM1385.7 314.3A46.3 9.4 41.8 1 0 1316.6 252.6A46.3 9.4 41.8 1 0 1385.7 314.3ZM1380.4 310.7A44.9 9.9 41 1 0 1312.6 251.7A44.9 9.9 41 1 0 1380.4 310.7ZM1393.1 320.9A47.2 8.8 43.1 1 0 1324.1 256.3A47.2 8.8 43.1 1 0 1393.1 320.9ZM747.5 398.1A49.1 10.8 -70.7 1 0 715 490.7A49.1 10.8 -70.7 1 0 747.5 398.1ZM748.4 398.5A46.3 10.7 -70.3 1 0 717.2 485.7A46.3 10.7 -70.3 1 0 748.4 398.5ZM747.3 396.8A44.9 9.5 -69.9 1 0 716.4 481.2A44.9 9.5 -69.9 1 0 747.3 396.8ZM748.2 404.2A47.2 12 -71.2 1 0 717.8 493.6A47.2 12 -71.2 1 0 748.2 404.2ZM1474.1 499.7A49.1 11.1 72 1 0 1443.8 406.3A49.1 11.1 72 1 0 1474.1 499.7ZM1474.2 494.6A46.3 9.9 71.7 1 0 1445.1 406.6A46.3 9.9 71.7 1 0 1474.2 494.6ZM1471.5 490.1A44.9 10.5 71.2 1 0 1442.5 405A44.9 10.5 71.2 1 0 1471.5 490.1ZM1477.5 502.6A47.2 9.1 72.9 1 0 1449.7 412.3A47.2 9.1 72.9 1 0 1477.5 502.6ZM1442.2 403.5A49.1 11.2 57 1 0 1388.7 321.2A49.1 11.2 57 1 0 1442.2 403.5ZM1441.2 398.9A46.3 10 56.7 1 0 1390.4 321.5A46.3 10 56.7 1 0 1441.2 398.9ZM1437.3 394.7A44.9 10.5 56.1 1 0 1387.1 320.1A44.9 10.5 56.1 1 0 1437.3 394.7ZM1446.6 406.4A47.2 9.3 57.9 1 0 1396.5 326.3A47.2 9.3 57.9 1 0 1446.6 406.4ZM856.7 266.4A49.1 11.3 -45.2 1 0 787.5 336.1A49.1 11.3 -45.2 1 0 856.7 266.4ZM857.8 266.8A46.3 11.1 -44.7 1 0 791.9 331.9A46.3 11.1 -44.7 1 0 857.8 266.8ZM856.4 265.4A44.9 9.9 -44.5 1 0 792.3 328.4A44.9 9.9 -44.5 1 0 856.4 265.4ZM856.5 271.1A47.2 12.5 -45.4 1 0 790.2 338.4A47.2 12.5 -45.4 1 0 856.5 271.1ZM1003.5 196.4A49.1 11.6 -20.9 1 0 911.8 231.4A49.1 11.6 -20.9 1 0 1003.5 196.4ZM1003.1 197.7A46.3 11.5 -20.6 1 0 916.4 230.3A46.3 11.5 -20.6 1 0 1003.1 197.7ZM1004.9 195.5A44.9 10.4 -20 1 0 920.5 226.2A44.9 10.4 -20 1 0 1004.9 195.5ZM997.1 201.5A47.2 12.7 -21.8 1 0 909.4 236.5A47.2 12.7 -21.8 1 0 997.1 201.5ZM1174.5 194.4A49.1 11.8 4.7 1 0 1076.7 186.3A49.1 11.8 4.7 1 0 1174.5 194.4ZM1174.1 195.5A46.3 11.6 5.1 1 0 1081.8 187.3A46.3 11.6 5.1 1 0 1174.1 195.5ZM1175.9 193.9A44.9 10.4 5.6 1 0 1086.4 185.2A44.9 10.4 5.6 1 0 1175.9 193.9ZM1168 196.7A47.2 12.9 4.1 1 0 1073.8 190A47.2 12.9 4.1 1 0 1168 196.7ZM1008.6 946.4A49.1 12.3 -174.5 1 0 1106.3 955.8A49.1 12.3 -174.5 1 0 1008.6 946.4ZM1013.6 948.7A46.3 11.1 -174.9 1 0 1105.9 957A46.3 11.1 -174.9 1 0 1013.6 948.7ZM1018.1 947.6A44.9 11.6 -175.3 1 0 1107.7 954.9A44.9 11.6 -175.3 1 0 1018.1 947.6ZM1005.8 949.1A47.2 10.2 -173.8 1 0 1099.7 959.2A47.2 10.2 -173.8 1 0 1005.8 949.1ZM1179.2 944.5A49.1 13.2 159.8 1 0 1271.3 910.6A49.1 13.2 159.8 1 0 1179.2 944.5ZM1184.2 944.6A46.3 11.9 159.5 1 0 1270.9 912.2A46.3 11.9 159.5 1 0 1184.2 944.6ZM1188.7 941.5A44.9 12.4 158.9 1 0 1272.5 909.1A44.9 12.4 158.9 1 0 1188.7 941.5ZM1176.2 948.6A47.2 11.2 160.7 1 0 1265.3 917.3A47.2 11.2 160.7 1 0 1176.2 948.6ZM1435.5 743.4A49.1 13.3 109.3 1 0 1468 650.7A49.1 13.3 109.3 1 0 1435.5 743.4ZM1439.1 738.7A46.3 12.1 108.9 1 0 1469.1 651.1A46.3 12.1 108.9 1 0 1439.1 738.7ZM1438.7 734.6A44.9 12.6 108.6 1 0 1467.3 649.4A44.9 12.6 108.6 1 0 1438.7 734.6ZM1438.2 746A47.2 11.2 109.8 1 0 1470.3 657.1A47.2 11.2 109.8 1 0 1438.2 746ZM1326 874.8A49.1 13.5 135.2 1 0 1395.6 805.6A49.1 13.5 135.2 1 0 1326 874.8ZM1331.7 871.6A46.3 12.3 134.7 1 0 1396.9 805.7A46.3 12.3 134.7 1 0 1331.7 871.6ZM1331.9 868.5A44.9 12.9 134.5 1 0 1394.9 804.4A44.9 12.9 134.5 1 0 1331.9 868.5ZM1329.4 876.8A47.2 11.4 135.3 1 0 1396.6 810.4A47.2 11.4 135.3 1 0 1329.4 876.8ZM725.5 486.1A49.1 15 -84.4 1 0 716 583.8A49.1 15 -84.4 1 0 725.5 486.1ZM727 486.5A46.3 14.7 -84 1 0 717.3 578.6A46.3 14.7 -84 1 0 727 486.5ZM724.9 484.8A44.9 13.4 -83.6 1 0 714.8 574.1A44.9 13.4 -83.6 1 0 724.9 484.8ZM728.7 492.6A47.2 16 -85.1 1 0 720.6 586.7A47.2 16 -85.1 1 0 728.7 492.6ZM931.7 233.1A49.1 16.1 -33.1 1 0 849.5 286.7A49.1 16.1 -33.1 1 0 931.7 233.1ZM933.6 233.3A46.3 15.6 -32.5 1 0 855.5 283.1A46.3 15.6 -32.5 1 0 933.6 233.3ZM930.2 232A44.9 14.2 -32.6 1 0 854.5 280.4A44.9 14.2 -32.6 1 0 930.2 232ZM934.5 237.2A47.2 17.1 -32.8 1 0 855.1 288.4A47.2 17.1 -32.8 1 0 934.5 237.2ZM923.7 905.7A49.1 16.2 -160.5 1 0 1016.2 938.4A49.1 16.2 -160.5 1 0 923.7 905.7ZM928.1 905.9A46.3 15.9 -160.7 1 0 1015.5 936.5A46.3 15.9 -160.7 1 0 928.1 905.9ZM922 904.2A44.9 15 -159.6 1 0 1006.2 935.6A44.9 15 -159.6 1 0 922 904.2ZM937.8 909.9A47.2 16.4 -162.5 1 0 1027.9 938.4A47.2 16.4 -162.5 1 0 937.8 909.9ZM1257.9 234.4A49.1 16.3 18.4 1 0 1164.8 203.4A49.1 16.3 18.4 1 0 1257.9 234.4ZM1257.4 232.4A46.3 14.8 18.7 1 0 1169.7 202.8A46.3 14.8 18.7 1 0 1257.4 232.4ZM1248.7 229.5A44.9 14.7 17.5 1 0 1163 202.6A44.9 14.7 17.5 1 0 1248.7 229.5ZM1268.7 237.5A47.2 14.9 20.4 1 0 1180.1 204.6A47.2 14.9 20.4 1 0 1268.7 237.5ZM805.4 334.9A49.1 16.9 -58.2 1 0 753.7 418.3A49.1 16.9 -58.2 1 0 805.4 334.9ZM807 335.2A46.3 16.4 -57.7 1 0 757.5 413.5A46.3 16.4 -57.7 1 0 807 335.2ZM804.6 333.7A44.9 15 -57.5 1 0 756.3 409.4A44.9 15 -57.5 1 0 804.6 333.7ZM807.6 340.4A47.2 17.9 -58.5 1 0 758.2 421A47.2 17.9 -58.5 1 0 807.6 340.4ZM1455.9 654.8A49.1 17.5 95.4 1 0 1465.1 557.1A49.1 17.5 95.4 1 0 1455.9 654.8ZM1458.7 649.8A46.3 16 95 1 0 1466.7 557.5A46.3 16 95 1 0 1458.7 649.8ZM1456.7 645.3A44.9 16.4 94.5 1 0 1463.8 555.7A44.9 16.4 94.5 1 0 1456.7 645.3ZM1460.1 657.7A47.2 15.2 96 1 0 1470 563.7A47.2 15.2 96 1 0 1460.1 657.7ZM1091.1 200.3A49.1 17.5 -8.1 1 0 993.9 214.1A49.1 17.5 -8.1 1 0 1091.1 200.3ZM1090.7 202.1A46.3 17.1 -7.7 1 0 998.9 214.6A46.3 17.1 -7.7 1 0 1090.7 202.1ZM1092.5 199.4A44.9 15.8 -7.2 1 0 1003.3 210.6A44.9 15.8 -7.2 1 0 1092.5 199.4ZM1084.5 205.5A47.2 18.4 -8.9 1 0 991.1 220.1A47.2 18.4 -8.9 1 0 1084.5 205.5ZM1248.9 907.2A49.1 18 147.6 1 0 1331.8 854.6A49.1 18 147.6 1 0 1248.9 907.2ZM1256 905A46.3 16.7 146.9 1 0 1333.6 854.4A46.3 16.7 146.9 1 0 1256 905ZM1254.5 902.3A44.9 17.1 147.1 1 0 1329.9 853.5A44.9 17.1 147.1 1 0 1254.5 902.3ZM1255.8 909.4A47.2 15.7 147.2 1 0 1335.2 858.2A47.2 15.7 147.2 1 0 1255.8 909.4ZM725.5 579.3A49.1 18.4 -98.9 1 0 740.7 676.2A49.1 18.4 -98.9 1 0 725.5 579.3ZM727.4 579.6A46.3 17.9 -98.5 1 0 741.2 671.3A46.3 17.9 -98.5 1 0 727.4 579.6ZM724.5 577.8A44.9 16.5 -98 1 0 737 666.8A44.9 16.5 -98 1 0 724.5 577.8ZM731 585.9A47.2 19.2 -99.7 1 0 747 679A47.2 19.2 -99.7 1 0 731 585.9ZM1089.4 939.4A49.1 18.6 173.1 1 0 1186.8 927.6A49.1 18.6 173.1 1 0 1089.4 939.4ZM1094.5 941.2A46.3 17 172.7 1 0 1186.4 929.5A46.3 17 172.7 1 0 1094.5 941.2ZM1099.1 938.3A44.9 17.3 172.2 1 0 1188.1 926A44.9 17.3 172.2 1 0 1099.1 938.3ZM1086.4 944.2A47.2 16.4 173.9 1 0 1180.3 934.2A47.2 16.4 173.9 1 0 1086.4 944.2ZM849.4 843.9A49.1 19.1 -145.8 1 0 930.6 899.1A49.1 19.1 -145.8 1 0 849.4 843.9ZM852.9 844.2A46.3 18.6 -145.8 1 0 929.6 896.2A46.3 18.6 -145.8 1 0 852.9 844.2ZM847.8 842.4A44.9 17.5 -144.8 1 0 921.2 894.2A44.9 17.5 -144.8 1 0 847.8 842.4ZM861.4 849.2A47.2 19.5 -147.5 1 0 941.1 899.9A47.2 19.5 -147.5 1 0 861.4 849.2ZM1374.9 805.7A49.1 19.2 122.1 1 0 1427.1 722.6A49.1 19.2 122.1 1 0 1374.9 805.7ZM1380.1 801.7A46.3 17.7 121.6 1 0 1428.6 722.7A46.3 17.7 121.6 1 0 1380.1 801.7ZM1378.9 797.9A44.9 18.1 121.4 1 0 1425.7 721.2A44.9 18.1 121.4 1 0 1378.9 797.9ZM1379.8 808.2A47.2 16.9 122.3 1 0 1430.3 728.3A47.2 16.9 122.3 1 0 1379.8 808.2ZM1331.1 295.7A49.1 19.8 32.9 1 0 1248.7 242.3A49.1 19.8 32.9 1 0 1331.1 295.7ZM1330.5 292.5A46.3 18.1 33 1 0 1252.8 242A46.3 18.1 33 1 0 1330.5 292.5ZM1323 288.9A44.9 18.1 31.9 1 0 1246.7 241.4A44.9 18.1 31.9 1 0 1323 288.9ZM1340.3 299A47.2 18.1 34.7 1 0 1262.6 245.2A47.2 18.1 34.7 1 0 1340.3 299ZM745 673.3A49.1 19.9 -114 1 0 784.9 762.9A49.1 19.9 -114 1 0 745 673.3ZM747.3 673.6A46.3 19.3 -113.8 1 0 784.7 758.4A46.3 19.3 -113.8 1 0 747.3 673.6ZM743.8 671.8A44.9 18 -113.1 1 0 779 754.5A44.9 18 -113.1 1 0 743.8 671.8ZM752.5 679.7A47.2 20.5 -115.2 1 0 792.7 765.2A47.2 20.5 -115.2 1 0 752.5 679.7ZM788.9 767.4A49.1 20.1 -130.5 1 0 852.6 842.1A49.1 20.1 -130.5 1 0 788.9 767.4ZM791.7 767.7A46.3 19.6 -130.4 1 0 851.7 838.3A46.3 19.6 -130.4 1 0 791.7 767.7ZM787.4 765.9A44.9 18.3 -129.5 1 0 844.6 835.2A44.9 18.3 -129.5 1 0 787.4 765.9ZM798.6 773.4A47.2 20.6 -131.9 1 0 861.8 843.7A47.2 20.6 -131.9 1 0 798.6 773.4ZM1454.9 561.2A49.1 20.6 80.6 1 0 1438.8 464.4A49.1 20.6 80.6 1 0 1454.9 561.2ZM1456.7 556A46.3 18.9 80.2 1 0 1440.9 464.7A46.3 18.9 80.2 1 0 1456.7 556ZM1453.3 551.4A44.9 19.1 79.6 1 0 1437.1 463A44.9 19.1 79.6 1 0 1453.3 551.4ZM1460.3 564.2A47.2 18.3 81.4 1 0 1446.3 470.7A47.2 18.3 81.4 1 0 1460.3 564.2ZM1391.3 372.3A49.1 21.4 48.3 1 0 1326 299A49.1 21.4 48.3 1 0 1391.3 372.3ZM1391.1 368.1A46.3 19.6 48.2 1 0 1329.4 299A46.3 19.6 48.2 1 0 1391.1 368.1ZM1385 363.9A44.9 19.7 47.3 1 0 1324 297.9A44.9 19.7 47.3 1 0 1385 363.9ZM1399 375.5A47.2 19.4 49.8 1 0 1338 303.3A47.2 19.4 49.8 1 0 1399 375.5ZM1435.2 466.7A49.1 21.7 65 1 0 1393.7 377.8A49.1 21.7 65 1 0 1435.2 466.7ZM1435.9 461.9A46.3 19.9 64.8 1 0 1396.4 378A46.3 19.9 64.8 1 0 1435.9 461.9ZM1431.1 457.4A44.9 20 64 1 0 1391.8 376.6A44.9 20 64 1 0 1431.1 457.4ZM1441.6 469.9A47.2 19.5 66.2 1 0 1403.5 383.4A47.2 19.5 66.2 1 0 1441.6 469.9ZM877.1 288.3A49.1 21.7 -45.4 1 0 808.1 358.2A49.1 21.7 -45.4 1 0 877.1 288.3ZM879.2 288.7A46.3 20.8 -44.7 1 0 813.4 353.8A46.3 20.8 -44.7 1 0 879.2 288.7ZM875.3 287.1A44.9 19.4 -44.8 1 0 811.5 350.3A44.9 19.4 -44.8 1 0 875.3 287.1ZM881.3 293.5A47.2 22.4 -45.2 1 0 814.7 360.5A47.2 22.4 -45.2 1 0 881.3 293.5ZM1012.5 225.5A49.1 22 -21.2 1 0 921 261A49.1 22 -21.2 1 0 1012.5 225.5ZM1015.1 225.6A46.3 20.9 -20.4 1 0 928.2 257.8A46.3 20.9 -20.4 1 0 1015.1 225.6ZM1008.7 223.7A44.9 19.5 -21 1 0 924.8 255.9A44.9 19.5 -21 1 0 1008.7 223.7ZM1020.1 229.8A47.2 22.5 -20 1 0 931.3 262A47.2 22.5 -20 1 0 1020.1 229.8ZM775.1 414.8A49.1 22.1 -71.8 1 0 744.4 508A49.1 22.1 -71.8 1 0 775.1 414.8ZM777.1 415.2A46.3 21.3 -71.3 1 0 747.4 502.9A46.3 21.3 -71.3 1 0 777.1 415.2ZM773.9 413.5A44.9 19.8 -71 1 0 744.6 498.5A44.9 19.8 -71 1 0 773.9 413.5ZM779.5 421A47.2 22.7 -72.2 1 0 750.6 510.9A47.2 22.7 -72.2 1 0 779.5 421ZM1175.5 229.6A49.1 23 5.4 1 0 1077.8 220.4A49.1 23 5.4 1 0 1175.5 229.6ZM1177 228.5A46.3 21.4 6.1 1 0 1084.9 218.7A46.3 21.4 6.1 1 0 1177 228.5ZM1167.5 225.7A44.9 20.6 4.7 1 0 1078 218.3A44.9 20.6 4.7 1 0 1167.5 225.7ZM1187.8 233.7A47.2 22.3 7.8 1 0 1094.1 220.9A47.2 22.3 7.8 1 0 1187.8 233.7ZM1003 909A49.1 23.4 -173 1 0 1100.5 921A49.1 23.4 -173 1 0 1003 909ZM1009.8 909A46.3 22.5 -173.7 1 0 1101.9 919.3A46.3 22.5 -173.7 1 0 1009.8 909ZM1003 906.7A44.9 21.9 -172.3 1 0 1092.1 918.8A44.9 21.9 -172.3 1 0 1003 906.7ZM1019 913.5A47.2 22.4 -175.4 1 0 1113.2 921.1A47.2 22.4 -175.4 1 0 1019 913.5ZM1165.7 913.6A49.1 23.5 160.1 1 0 1258 880.1A49.1 23.5 160.1 1 0 1165.7 913.6ZM1173.7 912.2A46.3 22 159.2 1 0 1260.3 879.3A46.3 22 159.2 1 0 1173.7 912.2ZM1169.5 909.5A44.9 22.1 160 1 0 1253.9 878.7A44.9 22.1 160 1 0 1169.5 909.5ZM1177.4 916.6A47.2 21.3 158.8 1 0 1265.5 882.4A47.2 21.3 158.8 1 0 1177.4 916.6ZM1301.1 851.3A49.1 23.8 135.4 1 0 1371 782.4A49.1 23.8 135.4 1 0 1301.1 851.3ZM1307.7 848.1A46.3 22.1 134.7 1 0 1372.9 782.3A46.3 22.1 134.7 1 0 1307.7 848.1ZM1305.4 844.7A44.9 22.3 134.8 1 0 1368.7 780.9A44.9 22.3 134.8 1 0 1305.4 844.7ZM1308.8 853.9A47.2 21.4 135.1 1 0 1375.7 787.2A47.2 21.4 135.1 1 0 1308.8 853.9ZM1403.3 725.3A49.1 24.4 108.3 1 0 1434.1 632A49.1 24.4 108.3 1 0 1403.3 725.3ZM1407.8 720.6A46.3 22.6 107.7 1 0 1436 632.3A46.3 22.6 107.7 1 0 1407.8 720.6ZM1405.2 716.3A44.9 22.7 107.4 1 0 1432.2 630.6A44.9 22.7 107.4 1 0 1405.2 716.3ZM1409.5 727.9A47.2 22 108.7 1 0 1439.8 638.4A47.2 22 108.7 1 0 1409.5 727.9ZM948.3 261.1A49.1 24.9 -33.4 1 0 866.3 315.1A49.1 24.9 -33.4 1 0 948.3 261.1ZM950.8 261.3A46.3 23.8 -32.6 1 0 872.8 311.2A46.3 23.8 -32.6 1 0 950.8 261.3ZM945.2 259.5A44.9 22.2 -33 1 0 869.8 308.4A44.9 22.2 -33 1 0 945.2 259.5ZM954.9 266A47.2 25.4 -32.6 1 0 875.3 316.9A47.2 25.4 -32.6 1 0 954.9 266ZM762.5 510.1A49.1 26.1 -87.9 1 0 758.9 608.2A49.1 26.1 -87.9 1 0 762.5 510.1ZM765.1 510.5A46.3 25.1 -87.5 1 0 761 603A46.3 25.1 -87.5 1 0 765.1 510.5ZM761.2 508.7A44.9 23.6 -86.9 1 0 756.4 598.5A44.9 23.6 -86.9 1 0 761.2 508.7ZM769.1 516.6A47.2 26.5 -88.7 1 0 766.9 611.1A47.2 26.5 -88.7 1 0 769.1 516.6ZM1228.5 877.7A49.1 26.7 147.9 1 0 1311.6 825.5A49.1 26.7 147.9 1 0 1228.5 877.7ZM1236 875.3A46.3 25 147 1 0 1313.7 824.9A46.3 25 147 1 0 1236 875.3ZM1232.4 872.2A44.9 25 147.5 1 0 1308.2 823.9A44.9 25 147.5 1 0 1232.4 872.2ZM1238.9 880.7A47.2 24.3 146.9 1 0 1318.1 829.1A47.2 24.3 146.9 1 0 1238.9 880.7ZM917.5 853A49.1 27.1 -156.4 1 0 1007.5 892.2A49.1 27.1 -156.4 1 0 917.5 853ZM922.9 853.1A46.3 26 -156.8 1 0 1008.1 889.6A46.3 26 -156.8 1 0 922.9 853.1ZM916.6 850.7A44.9 25 -155.4 1 0 998.3 888.1A44.9 25 -155.4 1 0 916.6 850.7ZM932.1 858.5A47.2 26.5 -158.8 1 0 1020.2 892.7A47.2 26.5 -158.8 1 0 932.1 858.5ZM1259.9 285A49.1 27.3 21.5 1 0 1168.6 248.9A49.1 27.3 21.5 1 0 1259.9 285ZM1260.6 282.5A46.3 25.3 22 1 0 1174.7 247.9A46.3 25.3 22 1 0 1260.6 282.5ZM1251.7 278.9A44.9 24.7 20.5 1 0 1167.5 247.3A44.9 24.7 20.5 1 0 1251.7 278.9ZM1271.3 289.2A47.2 25.8 24 1 0 1184.9 250.8A47.2 25.8 24 1 0 1271.3 289.2ZM847.1 353.8A49.1 27.6 -57.2 1 0 793.8 436.3A49.1 27.6 -57.2 1 0 847.1 353.8ZM849.6 354.1A46.3 26.4 -56.5 1 0 798.5 431.4A46.3 26.4 -56.5 1 0 849.6 354.1ZM844.9 352.4A44.9 24.8 -56.5 1 0 795.2 427.3A44.9 24.8 -56.5 1 0 844.9 352.4ZM853.2 359.6A47.2 28 -57.1 1 0 801.9 438.9A47.2 28 -57.1 1 0 853.2 359.6ZM1088.2 245.4A49.1 28.2 -9.7 1 0 991.5 261.9A49.1 28.2 -9.7 1 0 1088.2 245.4ZM1090.6 245A46.3 26.5 -8.7 1 0 999.1 259.1A46.3 26.5 -8.7 1 0 1090.6 245ZM1082 242.3A44.9 25.2 -9.9 1 0 993.5 257.8A44.9 25.2 -9.9 1 0 1082 242.3ZM1099.2 250.3A47.2 28 -7.5 1 0 1005.5 262.7A47.2 28 -7.5 1 0 1099.2 250.3ZM1414.7 629.5A49.1 28.2 91.6 1 0 1417.4 531.3A49.1 28.2 91.6 1 0 1414.7 629.5ZM1418.1 624.3A46.3 26.2 91.2 1 0 1420 531.7A46.3 26.2 91.2 1 0 1418.1 624.3ZM1414.2 619.8A44.9 26.2 90.6 1 0 1415.2 530A44.9 26.2 90.6 1 0 1414.2 619.8ZM1421.9 632.3A47.2 25.8 92.4 1 0 1425.8 537.9A47.2 25.8 92.4 1 0 1421.9 632.3ZM770.1 604A49.1 28.3 -104.4 1 0 794.6 699.1A49.1 28.3 -104.4 1 0 770.1 604ZM773.2 604.4A46.3 27.2 -104.1 1 0 795.8 694.2A46.3 27.2 -104.1 1 0 773.2 604.4ZM768.8 602.5A44.9 25.7 -103.4 1 0 789.6 690A44.9 25.7 -103.4 1 0 768.8 602.5ZM778.6 610.7A47.2 28.5 -105.6 1 0 804 701.7A47.2 28.5 -105.6 1 0 778.6 610.7ZM849.6 782.2A49.1 28.8 -139.5 1 0 924.3 846A49.1 28.8 -139.5 1 0 849.6 782.2ZM854.1 782.4A46.3 27.7 -139.7 1 0 924.7 842.4A46.3 27.7 -139.7 1 0 854.1 782.4ZM848.5 780.2A44.9 26.4 -138.4 1 0 915.7 839.9A44.9 26.4 -138.4 1 0 848.5 780.2ZM862.1 788.5A47.2 28.6 -141.7 1 0 936.2 847.1A47.2 28.6 -141.7 1 0 862.1 788.5ZM1087.7 892.2A49.1 29.1 172.3 1 0 1185 879.1A49.1 29.1 172.3 1 0 1087.7 892.2ZM1095.5 891.4A46.3 27.6 171.4 1 0 1187.1 877.6A46.3 27.6 171.4 1 0 1095.5 891.4ZM1089.5 888.4A44.9 27.2 172.7 1 0 1178.6 877A44.9 27.2 172.7 1 0 1089.5 888.4ZM1102.7 896.6A47.2 27.3 170.1 1 0 1195.7 880.4A47.2 27.3 170.1 1 0 1102.7 896.6ZM800.5 696.2A49.1 29.5 -121.9 1 0 852.4 779.6A49.1 29.5 -121.9 1 0 800.5 696.2ZM804.3 696.5A46.3 28.3 -121.8 1 0 853.1 775.3A46.3 28.3 -121.8 1 0 804.3 696.5ZM799.4 694.5A44.9 26.9 -120.7 1 0 845.3 771.7A44.9 26.9 -120.7 1 0 799.4 694.5ZM811 702.8A47.2 29.4 -123.6 1 0 863.3 781.5A47.2 29.4 -123.6 1 0 811 702.8ZM1327.5 355.7A49.1 29.6 38.4 1 0 1250.5 294.7A49.1 29.6 38.4 1 0 1327.5 355.7ZM1328.1 352A46.3 27.5 38.5 1 0 1255.6 294.3A46.3 27.5 38.5 1 0 1328.1 352ZM1320.3 347.8A44.9 27 37.2 1 0 1248.8 293.4A44.9 27 37.2 1 0 1320.3 347.8ZM1337.4 359.6A47.2 27.7 40.5 1 0 1265.6 298.2A47.2 27.7 40.5 1 0 1337.4 359.6ZM1328.7 785.3A49.1 29.7 123.4 1 0 1382.8 703.4A49.1 29.7 123.4 1 0 1328.7 785.3ZM1334.8 781.3A46.3 27.7 122.7 1 0 1384.9 703.4A46.3 27.7 122.7 1 0 1334.8 781.3ZM1331.4 777.4A44.9 27.6 122.7 1 0 1380 701.8A44.9 27.6 122.7 1 0 1331.4 777.4ZM1337.5 788A47.2 27.2 123.3 1 0 1389.4 709.1A47.2 27.2 123.3 1 0 1337.5 788ZM1406.8 535A49.1 30.1 74.4 1 0 1380.4 440.4A49.1 30.1 74.4 1 0 1406.8 535ZM1409.1 529.9A46.3 27.9 74.1 1 0 1383.7 440.8A46.3 27.9 74.1 1 0 1409.1 529.9ZM1404 525.2A44.9 27.8 73.3 1 0 1378.1 439.2A44.9 27.8 73.3 1 0 1404 525.2ZM1414.7 538.1A47.2 27.8 75.6 1 0 1391.3 446.6A47.2 27.8 75.6 1 0 1414.7 538.1ZM1376.3 442.1A49.1 30.8 56.3 1 0 1321.8 360.4A49.1 30.8 56.3 1 0 1376.3 442.1ZM1377.6 437.5A46.3 28.6 56.2 1 0 1326.1 360.5A46.3 28.6 56.2 1 0 1377.6 437.5ZM1371.2 432.9A44.9 28.3 55.1 1 0 1319.7 359.2A44.9 28.3 55.1 1 0 1371.2 432.9ZM1385.1 445.6A47.2 28.6 58 1 0 1335.1 365.4A47.2 28.6 58 1 0 1385.1 445.6ZM925.5 312.8A49.1 31.1 -42.2 1 0 852.8 378.8A49.1 31.1 -42.2 1 0 925.5 312.8ZM928.2 313.1A46.3 29.6 -41.4 1 0 858.7 374.3A46.3 29.6 -41.4 1 0 928.2 313.1ZM922 311.1A44.9 28 -41.7 1 0 854.9 370.9A44.9 28 -41.7 1 0 922 311.1ZM933.5 318.4A47.2 31.2 -41.5 1 0 862.7 380.9A47.2 31.2 -41.5 1 0 933.5 318.4ZM1010.4 275.6A49.1 31.3 -25 1 0 921.4 317A49.1 31.3 -25 1 0 1010.4 275.6ZM1013 275.6A46.3 29.6 -24 1 0 928.4 313.3A46.3 29.6 -24 1 0 1013 275.6ZM1005.4 273.2A44.9 28.1 -24.8 1 0 923.9 310.9A44.9 28.1 -24.8 1 0 1005.4 273.2ZM1020 281A47.2 31.2 -23.4 1 0 933.3 318.5A47.2 31.2 -23.4 1 0 1020 281ZM1163.8 861.8A49.1 32.6 157 1 0 1254.1 823.4A49.1 32.6 157 1 0 1163.8 861.8ZM1171.7 859.9A46.3 30.7 156 1 0 1256.3 822.3A46.3 30.7 156 1 0 1171.7 859.9ZM1166.4 856.5A44.9 30.4 157 1 0 1249.1 821.3A44.9 30.4 157 1 0 1166.4 856.5ZM1177.3 865.7A47.2 30.3 155.3 1 0 1263.2 826.3A47.2 30.3 155.3 1 0 1177.3 865.7ZM826.4 439.8A49.1 32.6 -73.3 1 0 798.1 533.8A49.1 32.6 -73.3 1 0 826.4 439.8ZM829.4 440.2A46.3 31.2 -72.6 1 0 801.8 528.7A46.3 31.2 -72.6 1 0 829.4 440.2ZM824.3 438.5A44.9 29.5 -72.3 1 0 797 524.2A44.9 29.5 -72.3 1 0 824.3 438.5ZM834.2 446.1A47.2 32.7 -73.7 1 0 807.6 536.8A47.2 32.7 -73.7 1 0 834.2 446.1ZM1248.6 825.3A49.1 32.8 139.1 1 0 1322.8 761.1A49.1 32.8 139.1 1 0 1248.6 825.3ZM1255.9 822.2A46.3 30.8 138.2 1 0 1325 760.5A46.3 30.8 138.2 1 0 1255.9 822.2ZM1251.4 818.5A44.9 30.5 138.7 1 0 1318.9 759.2A44.9 30.5 138.7 1 0 1251.4 818.5ZM1260 828.5A47.2 30.3 138.3 1 0 1330.5 765.6A47.2 30.3 138.3 1 0 1260 828.5ZM1174.4 290.3A49.1 33.4 6.3 1 0 1076.8 279.5A49.1 33.4 6.3 1 0 1174.4 290.3ZM1176.1 288.8A46.3 31.3 7.1 1 0 1084.2 277.3A46.3 31.3 7.1 1 0 1176.1 288.8ZM1166.8 285.1A44.9 30.2 5.5 1 0 1077.3 276.5A44.9 30.2 5.5 1 0 1166.8 285.1ZM1186.4 295.7A47.2 32.4 9.2 1 0 1093.1 280.7A47.2 32.4 9.2 1 0 1186.4 295.7ZM1000 846A49.1 33.8 -170.8 1 0 1096.9 861.6A49.1 33.8 -170.8 1 0 1000 846ZM1007 845.7A46.3 32.1 -171.7 1 0 1098.7 859.1A46.3 32.1 -171.7 1 0 1007 845.7ZM1000.4 842.5A44.9 31.3 -170 1 0 1088.9 858.1A44.9 31.3 -170 1 0 1000.4 842.5ZM1015.7 851.9A47.2 32.3 -173.7 1 0 1109.6 862.2A47.2 32.3 -173.7 1 0 1015.7 851.9ZM1347.8 698.9A49.1 34.6 106.7 1 0 1376 604.9A49.1 34.6 106.7 1 0 1347.8 698.9ZM1353 694.2A46.3 32.3 106 1 0 1378.6 605.1A46.3 32.3 106 1 0 1353 694.2ZM1348.5 689.8A44.9 32 105.7 1 0 1372.9 603.3A44.9 32 105.7 1 0 1348.5 689.8ZM1357.2 701.7A47.2 32 107.1 1 0 1385 611.4A47.2 32 107.1 1 0 1357.2 701.7ZM820.1 535.1A49.1 35.5 -92.7 1 0 824.6 633.2A49.1 35.5 -92.7 1 0 820.1 535.1ZM823.8 535.5A46.3 33.9 -92.2 1 0 827.3 628.1A46.3 33.9 -92.2 1 0 823.8 535.5ZM818.5 533.7A44.9 32.3 -91.5 1 0 820.8 623.6A44.9 32.3 -91.5 1 0 818.5 533.7ZM829.3 541.7A47.2 35.3 -93.8 1 0 835.6 636A47.2 35.3 -93.8 1 0 829.3 541.7ZM828 624A49.1 36.1 -111.6 1 0 864.2 715.3A49.1 36.1 -111.6 1 0 828 624ZM832.2 624.3A46.3 34.5 -111.4 1 0 866 710.6A46.3 34.5 -111.4 1 0 832.2 624.3ZM826.9 622.3A44.9 33 -110.3 1 0 858.1 706.6A44.9 33 -110.3 1 0 826.9 622.3ZM838.6 630.9A47.2 35.7 -113.5 1 0 876.2 717.6A47.2 35.7 -113.5 1 0 838.6 630.9ZM920.8 779.5A49.1 36.2 -150.7 1 0 1006.4 827.6A49.1 36.2 -150.7 1 0 920.8 779.5ZM926.7 779.5A46.3 34.5 -151.2 1 0 1007.8 824.2A46.3 34.5 -151.2 1 0 926.7 779.5ZM920.6 776.5A44.9 33.3 -149.4 1 0 997.9 822.2A44.9 33.3 -149.4 1 0 920.6 776.5ZM935 786.4A47.2 35.2 -153.7 1 0 1019.7 828.3A47.2 35.2 -153.7 1 0 935 786.4ZM863.1 709.6A49.1 36.4 -131.4 1 0 928 783.3A49.1 36.4 -131.4 1 0 863.1 709.6ZM868 709.8A46.3 34.7 -131.5 1 0 929.4 779.1A46.3 34.7 -131.5 1 0 868 709.8ZM862.4 707.3A44.9 33.3 -130 1 0 920.2 776.1A44.9 33.3 -130 1 0 862.4 707.3ZM875.3 716.6A47.2 35.7 -133.9 1 0 940.9 784.7A47.2 35.7 -133.9 1 0 875.3 716.6ZM1253.5 356.3A49.1 36.5 26 1 0 1165.2 313.3A49.1 36.5 26 1 0 1253.5 356.3ZM1254.8 353.4A46.3 34.1 26.6 1 0 1171.9 312A46.3 34.1 26.6 1 0 1254.8 353.4ZM1246.1 349A44.9 33.2 24.8 1 0 1164.5 311.3A44.9 33.2 24.8 1 0 1246.1 349ZM1264.5 361.5A47.2 34.8 29 1 0 1181.9 315.7A47.2 34.8 29 1 0 1264.5 361.5ZM905.7 383.7A49.1 36.7 -55.7 1 0 850.4 464.8A49.1 36.7 -55.7 1 0 905.7 383.7ZM908.9 384.1A46.3 34.9 -54.8 1 0 855.5 459.8A46.3 34.9 -54.8 1 0 908.9 384.1ZM902.3 382.2A44.9 33.2 -55 1 0 850.7 455.7A44.9 33.2 -55 1 0 902.3 382.2ZM915.1 389.8A47.2 36.5 -55.2 1 0 861.2 467.5A47.2 36.5 -55.2 1 0 915.1 389.8ZM1088.5 309.4A49.1 37.1 -12 1 0 992.5 329.8A49.1 37.1 -12 1 0 1088.5 309.4ZM1090.9 308.9A46.3 35 -10.8 1 0 999.9 326.3A46.3 35 -10.8 1 0 1090.9 308.9ZM1081.9 305.5A44.9 33.5 -12.3 1 0 994.1 324.6A44.9 33.5 -12.3 1 0 1081.9 305.5ZM1100.2 315.6A47.2 36.4 -9.2 1 0 1007 330.8A47.2 36.4 -9.2 1 0 1100.2 315.6ZM1353.9 603.2A49.1 37.2 86.2 1 0 1347.3 505.3A49.1 37.2 86.2 1 0 1353.9 603.2ZM1357.8 598.1A46.3 34.7 85.7 1 0 1350.9 505.7A46.3 34.7 85.7 1 0 1357.8 598.1ZM1352.4 593.5A44.9 34.2 84.9 1 0 1344.3 504A44.9 34.2 84.9 1 0 1352.4 593.5ZM1363.4 606.2A47.2 34.7 87.3 1 0 1359 511.8A47.2 34.7 87.3 1 0 1363.4 606.2ZM1311.6 426.9A49.1 37.2 45.6 1 0 1242.9 356.8A49.1 37.2 45.6 1 0 1311.6 426.9ZM1313.2 422.8A46.3 34.7 45.8 1 0 1248.6 356.4A46.3 34.7 45.8 1 0 1313.2 422.8ZM1305.7 418.1A44.9 34 44.2 1 0 1241.3 355.5A44.9 34 44.2 1 0 1305.7 418.1ZM1321.6 431.3A47.2 35.2 48.2 1 0 1258.7 360.9A47.2 35.2 48.2 1 0 1321.6 431.3ZM1346.5 513.5A49.1 37.5 66.2 1 0 1306.9 423.8A49.1 37.5 66.2 1 0 1346.5 513.5ZM1349.1 508.6A46.3 35 66 1 0 1311.4 424A46.3 35 66 1 0 1349.1 508.6ZM1342.8 503.8A44.9 34.4 64.7 1 0 1304.4 422.6A44.9 34.4 64.7 1 0 1342.8 503.8ZM1356 517A47.2 35.1 68.1 1 0 1320.7 429.4A47.2 35.1 68.1 1 0 1356 517ZM1083.4 826.1A49.1 37.9 171.3 1 0 1180.5 811.2A49.1 37.9 171.3 1 0 1083.4 826.1ZM1091.2 825A46.3 35.9 170.1 1 0 1182.5 809A46.3 35.9 170.1 1 0 1091.2 825ZM1084.8 821.1A44.9 35.2 171.7 1 0 1173.8 808.2A44.9 35.2 171.7 1 0 1084.8 821.1ZM1099 831.8A47.2 35.9 168.4 1 0 1191.6 812.9A47.2 35.9 168.4 1 0 1099 831.8ZM995.7 338.2A49.1 38.1 -34 1 0 914.4 393.1A49.1 38.1 -34 1 0 995.7 338.2ZM998.7 338.3A46.3 36 -32.8 1 0 920.8 388.6A46.3 36 -32.8 1 0 998.7 338.3ZM990.6 335.7A44.9 34.4 -33.7 1 0 915.8 385.6A44.9 34.4 -33.7 1 0 990.6 335.7ZM1006.5 344.4A47.2 37.6 -32.3 1 0 926.6 394.9A47.2 37.6 -32.3 1 0 1006.5 344.4ZM1266 754A49.1 38.3 125.4 1 0 1322.9 674A49.1 38.3 125.4 1 0 1266 754ZM1272.9 750.1A46.3 36 124.4 1 0 1325.2 673.7A46.3 36 124.4 1 0 1272.9 750.1ZM1267.6 746A44.9 35.5 124.6 1 0 1318.6 672A44.9 35.5 124.6 1 0 1267.6 746ZM1278.1 757.1A47.2 35.8 124.8 1 0 1332 679.6A47.2 35.8 124.8 1 0 1278.1 757.1ZM1175.1 798.1A49.1 39.3 148.5 1 0 1258.8 746.8A49.1 39.3 148.5 1 0 1175.1 798.1ZM1182.9 795.6A46.3 37.1 147.3 1 0 1260.9 745.5A46.3 37.1 147.3 1 0 1182.9 795.6ZM1176.9 791.5A44.9 36.4 148.3 1 0 1253.4 744.4A44.9 36.4 148.3 1 0 1176.9 791.5ZM1189.5 802.5A47.2 37 146.7 1 0 1268.4 750.5A47.2 37 146.7 1 0 1189.5 802.5ZM891.3 468.4A49.1 40.5 -75.5 1 0 866.7 563.4A49.1 40.5 -75.5 1 0 891.3 468.4ZM895.2 468.9A46.3 38.5 -74.6 1 0 870.7 558.2A46.3 38.5 -74.6 1 0 895.2 468.9ZM888.7 467.1A44.9 36.8 -74.3 1 0 864.4 553.6A44.9 36.8 -74.3 1 0 888.7 467.1ZM901.6 474.8A47.2 40 -76 1 0 878.7 566.4A47.2 40 -76 1 0 901.6 474.8ZM1171.3 365.5A49.1 41.2 7.7 1 0 1074.1 352.3A49.1 41.2 7.7 1 0 1171.3 365.5ZM1173.1 363.8A46.3 38.6 8.8 1 0 1081.6 349.6A46.3 38.6 8.8 1 0 1173.1 363.8ZM1164 359.2A44.9 37.4 6.6 1 0 1074.7 348.8A44.9 37.4 6.6 1 0 1164 359.2ZM1182.9 372.4A47.2 39.8 11.6 1 0 1090.4 353.4A47.2 39.8 11.6 1 0 1182.9 372.4ZM886.1 638.9A49.1 41.3 -120.9 1 0 936.5 723.1A49.1 41.3 -120.9 1 0 886.1 638.9ZM891.2 639.1A46.3 39.3 -120.9 1 0 938.8 718.5A46.3 39.3 -120.9 1 0 891.2 639.1ZM885.6 636.6A44.9 37.8 -119.2 1 0 929.5 715A44.9 37.8 -119.2 1 0 885.6 636.6ZM897.7 646.3A47.2 40.4 -123.9 1 0 950.3 724.8A47.2 40.4 -123.9 1 0 897.7 646.3ZM1000.3 768.3A49.1 41.3 -167.6 1 0 1096.2 789.4A49.1 41.3 -167.6 1 0 1000.3 768.3ZM1007.3 767.9A46.3 39.2 -168.6 1 0 1098.1 786.1A46.3 39.2 -168.6 1 0 1007.3 767.9ZM1001 763.8A44.9 38.1 -166.3 1 0 1088.3 785A44.9 38.1 -166.3 1 0 1001 763.8ZM1015.5 775.8A47.2 39.7 -171.5 1 0 1109 789.9A47.2 39.7 -171.5 1 0 1015.5 775.8ZM883.6 557.2A49.1 41.9 -99.6 1 0 899.9 654A49.1 41.9 -99.6 1 0 883.6 557.2ZM888.2 557.5A46.3 39.8 -99.1 1 0 902.9 649A46.3 39.8 -99.1 1 0 888.2 557.5ZM882.4 555.6A44.9 38.2 -97.9 1 0 894.8 644.6A44.9 38.2 -97.9 1 0 882.4 555.6ZM894.3 564A47.2 41.1 -101.5 1 0 913.2 656.6A47.2 41.1 -101.5 1 0 894.3 564ZM1279.9 669.4A49.1 42 104.3 1 0 1304.1 574.3A49.1 42 104.3 1 0 1279.9 669.4ZM1285.7 664.6A46.3 39.4 103.4 1 0 1307.1 574.5A46.3 39.4 103.4 1 0 1285.7 664.6ZM1279.8 660.2A44.9 38.7 102.9 1 0 1299.9 572.6A44.9 38.7 102.9 1 0 1279.8 660.2ZM1291.5 672.2A47.2 39.5 104.7 1 0 1315.5 580.8A47.2 39.5 104.7 1 0 1291.5 672.2ZM1287.4 497A49.1 42.2 55.2 1 0 1231.5 416.4A49.1 42.2 55.2 1 0 1287.4 497ZM1289.9 492.4A46.3 39.5 55.4 1 0 1237.2 416.2A46.3 39.5 55.4 1 0 1289.9 492.4ZM1282.9 487.4A44.9 38.6 53.4 1 0 1229.3 415.2A44.9 38.6 53.4 1 0 1282.9 487.4ZM1297.3 501.4A47.2 40 58.3 1 0 1247.6 421A47.2 40 58.3 1 0 1297.3 501.4ZM932.9 699.8A49.1 42.3 -142.3 1 0 1010.5 759.8A49.1 42.3 -142.3 1 0 932.9 699.8ZM938.8 699.8A46.3 40.2 -142.9 1 0 1012.7 755.7A46.3 40.2 -142.9 1 0 938.8 699.8ZM933.1 696.4A44.9 38.8 -140.6 1 0 1002.5 753.5A44.9 38.8 -140.6 1 0 933.1 696.4ZM946 707.9A47.2 41 -146.2 1 0 1024.6 760.4A47.2 41 -146.2 1 0 946 707.9ZM1240.1 434.3A49.1 42.7 32.6 1 0 1157.4 381.3A49.1 42.7 32.6 1 0 1240.1 434.3ZM1241.8 431A46.3 40 33.3 1 0 1164.4 380.1A46.3 40 33.3 1 0 1241.8 431ZM1233.7 425.7A44.9 38.9 30.9 1 0 1156.6 379.5A44.9 38.9 30.9 1 0 1233.7 425.7ZM1250.4 440.3A47.2 40.8 36.6 1 0 1174.6 383.9A47.2 40.8 36.6 1 0 1250.4 440.3ZM1289 580A49.1 43.1 77.9 1 0 1268.4 484A49.1 43.1 77.9 1 0 1289 580ZM1292.9 574.8A46.3 40.4 77.5 1 0 1272.9 484.4A46.3 40.4 77.5 1 0 1292.9 574.8ZM1286.7 570.1A44.9 39.5 76.1 1 0 1265.1 482.9A44.9 39.5 76.1 1 0 1286.7 570.1ZM1299.3 583.2A47.2 40.7 80 1 0 1282.9 490.2A47.2 40.7 80 1 0 1299.3 583.2ZM982.2 418.2A49.1 43.4 -51.1 1 0 920.5 494.6A49.1 43.4 -51.1 1 0 982.2 418.2ZM985.9 418.8A46.3 41.1 -49.6 1 0 925.9 489.4A46.3 41.1 -49.6 1 0 985.9 418.8ZM977.6 416.4A44.9 39.5 -50.3 1 0 920.2 485.6A44.9 39.5 -50.3 1 0 977.6 416.4ZM994.2 424.9A47.2 42.6 -49.7 1 0 933.1 497A47.2 42.6 -49.7 1 0 994.2 424.9ZM1084.6 385.3A49.1 43.7 -18.1 1 0 991.3 415.9A49.1 43.7 -18.1 1 0 1084.6 385.3ZM1087.2 385.2A46.3 41.2 -16.5 1 0 998.4 411.5A46.3 41.2 -16.5 1 0 1087.2 385.2ZM1077.8 381.2A44.9 39.6 -18.5 1 0 992.6 409.7A44.9 39.6 -18.5 1 0 1077.8 381.2ZM1097 393.2A47.2 42.5 -14.4 1 0 1005.5 416.6A47.2 42.5 -14.4 1 0 1097 393.2ZM1084 747.7A49.1 44.3 167.1 1 0 1179.7 725.8A49.1 44.3 167.1 1 0 1084 747.7ZM1091.9 746.5A46.3 41.9 165.3 1 0 1181.5 723.1A46.3 41.9 165.3 1 0 1091.9 746.5ZM1085.1 741.5A44.9 40.9 167.7 1 0 1172.9 722.4A44.9 40.9 167.7 1 0 1085.1 741.5ZM1100.1 754.7A47.2 42.2 163.2 1 0 1190.6 727.4A47.2 42.2 163.2 1 0 1100.1 754.7ZM1186 717.8A49.1 44.5 131.3 1 0 1250.9 644.1A49.1 44.5 131.3 1 0 1186 717.8ZM1193.7 714.4A46.3 41.9 129.7 1 0 1252.8 643.2A46.3 41.9 129.7 1 0 1193.7 714.4ZM1186.9 710A44.9 41 130.5 1 0 1245.3 641.6A44.9 41 130.5 1 0 1186.9 710ZM1200.8 721.8A47.2 42.1 129.8 1 0 1261.3 649.2A47.2 42.1 129.8 1 0 1200.8 721.8ZM945 600.1A49.1 45.7 -119.8 1 0 993.7 685.4A49.1 45.7 -119.8 1 0 945 600.1ZM950.6 600.3A46.3 43.4 -119.8 1 0 996.6 680.7A46.3 43.4 -119.8 1 0 950.6 600.3ZM945.4 597.4A44.9 41.8 -117.2 1 0 986.5 677.4A44.9 41.8 -117.2 1 0 945.4 597.4ZM956.1 608.4A47.2 44.4 -124.3 1 0 1009.3 686.4A47.2 44.4 -124.3 1 0 956.1 608.4ZM962.9 506A49.1 46 -83 1 0 951 603.5A49.1 46 -83 1 0 962.9 506ZM967.9 506.5A46.3 43.6 -81.8 1 0 954.7 598.2A46.3 43.6 -81.8 1 0 967.9 506.5ZM961 504.8A44.9 41.9 -81 1 0 946.9 593.6A44.9 41.9 -81 1 0 961 504.8ZM974.4 512.4A47.2 44.8 -84.5 1 0 965.3 606.5A47.2 44.8 -84.5 1 0 974.4 512.4ZM1228.6 534.1A49.1 46.3 53.9 1 0 1170.7 454.8A49.1 46.3 53.9 1 0 1228.6 534.1ZM1231.2 529.6A46.3 43.5 54.2 1 0 1177 454.5A46.3 43.5 54.2 1 0 1231.2 529.6ZM1224.6 523.9A44.9 42.4 51.1 1 0 1168.2 453.9A44.9 42.4 51.1 1 0 1224.6 523.9ZM1237.7 539.4A47.2 44.2 58.7 1 0 1188.6 458.7A47.2 44.2 58.7 1 0 1237.7 539.4ZM999 671.4A49.1 46.4 -157.3 1 0 1089.5 709.3A49.1 46.4 -157.3 1 0 999 671.4ZM1005.6 671.5A46.3 43.9 -158.8 1 0 1092 704.9A46.3 43.9 -158.8 1 0 1005.6 671.5ZM1000.2 666.2A44.9 42.6 -155 1 0 1081.6 704.2A44.9 42.6 -155 1 0 1000.2 666.2ZM1012.8 681.6A47.2 44.7 -163.8 1 0 1103.5 708A47.2 44.7 -163.8 1 0 1012.8 681.6ZM1172.2 458.4A49.1 46.4 13.8 1 0 1076.9 435.1A49.1 46.4 13.8 1 0 1172.2 458.4ZM1173.9 456.8A46.3 43.7 15.5 1 0 1084.6 432A46.3 43.7 15.5 1 0 1173.9 456.8ZM1165.3 450.6A44.9 42.3 11.9 1 0 1077.3 432.1A44.9 42.3 11.9 1 0 1165.3 450.6ZM1182.7 467.6A47.2 44.7 20.3 1 0 1094.1 434.9A47.2 44.7 20.3 1 0 1182.7 467.6ZM1207.4 631.2A49.1 46.8 95.3 1 0 1216.4 533.5A49.1 46.8 95.3 1 0 1207.4 631.2ZM1213.3 626.2A46.3 44 94 1 0 1219.7 533.8A46.3 44 94 1 0 1213.3 626.2ZM1206.9 621.7A44.9 43 92.7 1 0 1211.1 532A44.9 43 92.7 1 0 1206.9 621.7ZM1219.4 634A47.2 44.5 96.8 1 0 1230.6 540.2A47.2 44.5 96.8 1 0 1219.4 634ZM1078.2 468.9A49.1 47.7 -37 1 0 999.8 527.9A49.1 47.7 -37 1 0 1078.2 468.9ZM1082.2 470.3A46.3 45.1 -33.7 1 0 1005.1 521.7A46.3 45.1 -33.7 1 0 1082.2 470.3ZM1072.1 466.2A44.9 43.5 -36.4 1 0 999.8 519.5A44.9 43.5 -36.4 1 0 1072.1 466.2ZM1092.9 478.5A47.2 46.3 -31.2 1 0 1012.1 527.5A47.2 46.3 -31.2 1 0 1092.9 478.5ZM1085.8 661.4A49.1 48.2 152.3 1 0 1172.7 615.7A49.1 48.2 152.3 1 0 1085.8 661.4ZM1094.6 660.6A46.3 45.4 148.3 1 0 1173.4 611.9A46.3 45.4 148.3 1 0 1094.6 660.6ZM1086.4 654A44.9 44.2 152.4 1 0 1166 612.4A44.9 44.2 152.4 1 0 1086.4 654ZM1103.8 669.8A47.2 46.1 145.7 1 0 1181.9 616.6A47.2 46.1 145.7 1 0 1103.8 669.8ZM1023 549.9A49.1 48.6 -114.5 1 0 1063.7 639.2A49.1 48.6 -114.5 1 0 1023 549.9ZM1028.9 550A46.3 45.9 -114.2 1 0 1067 634.5A46.3 45.9 -114.2 1 0 1028.9 550ZM1026.2 546.4A44.9 44.5 -108.1 1 0 1054 631.8A44.9 44.5 -108.1 1 0 1026.2 546.4ZM1028.6 561.5A47.2 46.9 -126.9 1 0 1085.4 637.1A47.2 46.9 -126.9 1 0 1028.6 561.5ZM1158.5 577.7A49.1 48.8 46.2 1 0 1090.6 506.8A49.1 48.8 46.2 1 0 1158.5 577.7ZM1160.2 574.3A46.3 46 48.1 1 0 1098.4 505.4A46.3 46 48.1 1 0 1160.2 574.3ZM1156.7 564.5A44.9 44.7 38.2 1 0 1086.1 508.9A44.9 44.7 38.2 1 0 1156.7 564.5ZM1161.2 588.3A47.2 46.8 61 1 0 1115.4 505.6A47.2 46.8 61 1 0 1161.2 588.3Z"/>
</g>
<circle cx="1094.0" cy="571.5" r="396.5" fill="none" stroke="#e2852c" stroke-width="1.4"/>
</svg>
<div class="a" style="left:0.0px;top:0.0px;width:1941.0px;height:35.0px;background:#f7f7f7;border-top:1px solid #a2a2a2"></div>
<div class="a" style="left:0.0px;top:33.5px;width:1941.0px;height:1.0px;background:#fdfdfd"></div>
<div class="a" style="left:0.0px;top:34.3px;width:1941.0px;height:1.2px;background:#cdcdcd"></div>
<div class="a" style="left:0.0px;top:35.5px;width:1941.0px;height:82.0px;background:#f7f7f7"></div>
<div class="a" style="left:0.0px;top:116.0px;width:1941.0px;height:1.0px;background:#fdfdfd"></div>
<div class="a" style="left:0.0px;top:117.0px;width:1941.0px;height:1.0px;background:#9c9c9c"></div>
<div class="a" style="left:0.0px;top:118.0px;width:246.0px;height:898.0px;background:#f7f7f7"></div>
<div class="a" style="left:242.5px;top:118.0px;width:1.5px;height:898.0px;background:#fbfbfb"></div>
<div class="a" style="left:244.0px;top:118.0px;width:2.0px;height:898.0px;background:#ababab"></div>
<div class="a" style="left:0.0px;top:1016.0px;width:1941.0px;height:17.0px;background:#f3f3f3"></div>
<div class="a" style="left:0.0px;top:1016.0px;width:1941.0px;height:1.0px;background:#909090"></div>
<div class="a" style="left:0.0px;top:1032.0px;width:1941.0px;height:1.0px;background:#a8a8a8"></div>
<div class="a" style="left:1939.0px;top:1016.0px;width:1.0px;height:17.0px;background:#a8a8a8"></div>
<div class="a" style="left:0.0px;top:1033.0px;width:1941.0px;height:18.0px;background:#f0f0f0"></div>
<svg style="left:4.0px;top:4.0px" width="24" height="24" viewBox="0 0 24 24"><g fill="none" stroke="#cc2229" stroke-width="1.7" stroke-linecap="round" stroke-linejoin="round"><path d="M9.3 1.6 C12 1.3 15 1.2 15.2 2.3 C14.5 5 12.5 8 10.4 10.6"/><path d="M4.8 11.2 C8 11 12.5 11.3 12.4 12.6 C12 15 8 18.5 1.6 20.6"/><path d="M6 12.8 L2 20.2"/><path d="M21 8.6 L15 8.9 C13 9.2 13.5 10.5 15.5 12.5 C18.5 15.2 19.8 16.8 18.2 17.6 L12.2 18.3"/></g></svg>
<div class="t" style="left:30.3px;top:12.4px;font-size:12.50px;color:#d2232a;font-weight:bold;font-style:italic;">SOLID</div>
<div class="t" style="left:68.6px;top:13.0px;font-size:11.80px;color:#d2232a;font-weight:normal;font-style:italic;">WORKS</div>
<div class="t" style="left:144.6px;top:14.0px;font-size:11.80px;color:#1b1b28;font-weight:normal;font-style:normal;">File</div>
<div class="t" style="left:179.3px;top:14.0px;font-size:11.80px;color:#1b1b28;font-weight:normal;font-style:normal;">Edit</div>
<div class="t" style="left:215.1px;top:14.0px;font-size:11.80px;color:#1b1b28;font-weight:normal;font-style:normal;">View</div>
<div class="t" style="left:257.2px;top:14.0px;font-size:11.80px;color:#1b1b28;font-weight:normal;font-style:normal;">Insert</div>
<div class="t" style="left:302.2px;top:14.0px;font-size:11.80px;color:#1b1b28;font-weight:normal;font-style:normal;">Tools</div>
<div class="t" style="left:345.7px;top:14.0px;font-size:11.80px;color:#1b1b28;font-weight:normal;font-style:normal;">Window</div>
<svg style="left:403.0px;top:9.0px" width="16" height="16" viewBox="0 0 16 16"><path d="M9 2 L14 7 L12 8 L9.5 10.5 L10 13 L8.5 13.5 L2.5 7.5 L3 6 L5.5 6.5 L8 4 Z" fill="#8f8f8f"/><path d="M5 11 L2 14" stroke="#8f8f8f" stroke-width="1.5"/></svg>
<div class="a" style="left:424.0px;top:2.0px;width:1.0px;height:32.0px;background:#cfcfcf"></div>
<svg style="left:446.0px;top:8.0px" width="18" height="18" viewBox="0 0 18 18"><path d="M2 9 L9 2 L16 9 M4 7.5 V16 H14 V7.5 M7.5 16 V11 H10.5 V16" fill="none" stroke="#a9a9a9" stroke-width="1.3"/></svg>
<svg style="left:479.0px;top:8.0px" width="14" height="18" viewBox="0 0 14 18"><path d="M1 1 H9 L13 5 V17 H1 Z" fill="#fafafa" stroke="#b0b0b0" stroke-width="1.2"/><path d="M9 1 V5 H13" fill="none" stroke="#b0b0b0"/></svg>
<svg style="left:504.0px;top:16.0px" width="6" height="4" viewBox="0 0 6 4"><path d="M0 0h6l-3 3z" fill="#555"/></svg>
<svg style="left:520.0px;top:8.0px" width="20" height="18" viewBox="0 0 20 18"><path d="M1 4 H7 L9 6 H15 V16 H1 Z" fill="#f0f0f0" stroke="#b0b0b0" stroke-width="1.2"/><path d="M1 16 L5 9 H19 L15 16" fill="#e8e8e8" stroke="#b0b0b0" stroke-width="1.2"/><path d="M11 2 C15 2 16 4 16 7" fill="none" stroke="#b0b0b0" stroke-width="1.2"/></svg>
<svg style="left:549.0px;top:16.0px" width="6" height="4" viewBox="0 0 6 4"><path d="M0 0h6l-3 3z" fill="#555"/></svg>
<svg style="left:566.0px;top:9.0px" width="18" height="18" viewBox="0 0 18 18"><path d="M1 1 H14 L17 4 V17 H1 Z" fill="#d6d6d6" stroke="#b0b0b0" stroke-width="1.2"/><rect x="4" y="1.5" width="9" height="5" fill="#f2f2f2" stroke="#b5b5b5"/><rect x="4" y="10" width="10" height="7" fill="#c2c2c2"/></svg>
<svg style="left:594.0px;top:16.0px" width="6" height="4" viewBox="0 0 6 4"><path d="M0 0h6l-3 3z" fill="#555"/></svg>
<svg style="left:610.0px;top:8.0px" width="20" height="18" viewBox="0 0 20 18"><rect x="5" y="1" width="10" height="5" fill="#fff" stroke="#111" stroke-width="1.2"/><rect x="1" y="6" width="18" height="8" rx="1" fill="#2a8fc8" stroke="#111" stroke-width="1.2"/><rect x="4" y="11" width="12" height="6" fill="#fff" stroke="#111" stroke-width="1.2"/></svg>
<svg style="left:638.0px;top:16.0px" width="6" height="4" viewBox="0 0 6 4"><path d="M0 0h6l-3 3z" fill="#555"/></svg>
<svg style="left:655.0px;top:9.0px" width="18" height="16" viewBox="0 0 18 16"><path d="M4 6 C8 2 15 3 15 9 C15 12 13 14 11 15" fill="none" stroke="#b5b5b5" stroke-width="2"/><path d="M1 2 L3 9 L9 6 Z" fill="#b5b5b5"/></svg>
<svg style="left:683.0px;top:16.0px" width="6" height="4" viewBox="0 0 6 4"><path d="M0 0h6l-3 3z" fill="#555"/></svg>
<svg style="left:700.0px;top:9.0px" width="18" height="16" viewBox="0 0 18 16"><path d="M14 6 C10 2 3 3 3 9 C3 12 5 14 7 15" fill="none" stroke="#b5b5b5" stroke-width="2"/><path d="M17 2 L15 9 L9 6 Z" fill="#b5b5b5"/></svg>
<svg style="left:728.0px;top:16.0px" width="6" height="4" viewBox="0 0 6 4"><path d="M0 0h6l-3 3z" fill="#555"/></svg>
<svg style="left:746.0px;top:8.0px" width="14" height="19" viewBox="0 0 14 19"><path d="M2 1 L2 15 L5.5 11.5 L8.5 18 L10.5 17 L7.5 10.5 L12 10.5 Z" fill="#fbfbfb" stroke="#b5b5b5" stroke-width="1.2"/></svg>
<svg style="left:772.0px;top:16.0px" width="6" height="4" viewBox="0 0 6 4"><path d="M0 0h6l-3 3z" fill="#555"/></svg>
<svg style="left:792.0px;top:9.0px" width="10" height="18" viewBox="0 0 10 18"><rect x="1" y="1" width="8" height="16" rx="4" fill="#c8c8c8" stroke="#b0b0b0"/><path d="M5 4 V8" stroke="#888" stroke-width="1.5"/></svg>
<svg style="left:819.0px;top:9.0px" width="17" height="17" viewBox="0 0 17 17"><rect x="1" y="1" width="15" height="15" fill="#fafafa" stroke="#b5b5b5"/><path d="M3.5 4.5 h2 M3.5 8.5 h2 M3.5 12.5 h2 M7.5 4.5 h6 M7.5 8.5 h6 M7.5 12.5 h6" stroke="#b5b5b5" stroke-width="1.5"/></svg>
<svg style="left:849.0px;top:9.0px" width="18" height="18" viewBox="0 0 18 18"><g transform="translate(9 9)"><path d="M-1.5 -8 h3 l0.5 2.3 l1.8 0.8 l2 -1.3 l2.1 2.1 l-1.3 2 l0.8 1.8 l2.3 0.5 v3 l-2.3 0.5 l-0.8 1.8 l1.3 2 l-2.1 2.1 l-2 -1.3 l-1.8 0.8 l-0.5 2.3 h-3 l-0.5 -2.3 l-1.8 -0.8 l-2 1.3 l-2.1 -2.1 l1.3 -2 l-0.8 -1.8 l-2.3 -0.5 v-3 l2.3 -0.5 l0.8 -1.8 l-1.3 -2 l2.1 -2.1 l2 1.3 l1.8 -0.8 Z" fill="#fff" stroke="#222" stroke-width="1.3"/><circle r="2.8" fill="none" stroke="#222" stroke-width="1.3"/></g></svg>
<svg style="left:877.0px;top:16.0px" width="6" height="4" viewBox="0 0 6 4"><path d="M0 0h6l-3 3z" fill="#555"/></svg>
<div class="t" style="left:1156.6px;top:12.4px;font-size:11.10px;color:#222;font-weight:normal;font-style:normal;">Golf Ball.SLDPRT *</div>
<div class="a" style="left:1518.5px;top:6.5px;width:204.0px;height:22.0px;background:#fff;border:1px solid #cacaca"></div>
<svg style="left:1525.0px;top:10.0px" width="15" height="14" viewBox="0 0 15 14"><rect width="15" height="14" fill="#1e1e1e"/><path d="M3 3.5 L7 7 L3 10.5" fill="none" stroke="#fff" stroke-width="1.3"/><path d="M8 11 H12" stroke="#fff" stroke-width="1.2"/></svg>
<div class="t" style="left:1547.7px;top:11.2px;font-size:12.00px;color:#555;font-weight:normal;font-style:normal;">offset</div>
<svg style="left:1691.0px;top:10.0px" width="14" height="14" viewBox="0 0 14 14"><circle cx="6" cy="6" r="4.5" fill="none" stroke="#8a8a8a" stroke-width="1.3"/><path d="M9.3 9.3 L13 13" stroke="#8a8a8a" stroke-width="1.5"/></svg>
<svg style="left:1713.0px;top:16.0px" width="6" height="4" viewBox="0 0 6 4"><path d="M0 0h6l-3 3z" fill="#8a8a8a"/></svg>
<svg style="left:1733.0px;top:8.0px" width="20" height="20" viewBox="0 0 20 20"><circle cx="10" cy="10" r="8.5" fill="none" stroke="#333" stroke-width="1.3"/><circle cx="10" cy="7.5" r="3.2" fill="none" stroke="#333" stroke-width="1.3"/><path d="M4.5 15.5 C6 11.5 14 11.5 15.5 15.5" fill="none" stroke="#333" stroke-width="1.3"/></svg>
<svg style="left:1770.0px;top:8.0px" width="20" height="20" viewBox="0 0 20 20"><circle cx="10" cy="10" r="8.5" fill="none" stroke="#333" stroke-width="1.3"/><path d="M7 7.5 C7 4 13 4 13 7.5 C13 10 10 10 10 12.5" fill="none" stroke="#333" stroke-width="1.5"/><circle cx="10" cy="15" r="1" fill="#333"/></svg>
<div class="a" style="left:1811.0px;top:22.0px;width:11.0px;height:2.0px;background:#222"></div>
<svg style="left:1845.0px;top:10.0px" width="16" height="16" viewBox="0 0 16 16"><rect x="0.75" y="0.75" width="14.5" height="14.5" fill="none" stroke="#333" stroke-width="1.3"/><path d="M8 1 V15 M2.5 8 H6 M10 8 H13.5 M4.5 6 L2.5 8 L4.5 10 M11.5 6 L13.5 8 L11.5 10" fill="none" stroke="#333" stroke-width="1.1"/></svg>
<svg style="left:1882.0px;top:10.0px" width="16" height="16" viewBox="0 0 16 16"><rect x="0.75" y="5.25" width="9.5" height="9.5" fill="none" stroke="#333" stroke-width="1.3"/><path d="M4.5 5 V1 H15 V11 H10.5" fill="none" stroke="#333" stroke-width="1.3"/></svg>
<svg style="left:1920.0px;top:12.0px" width="12" height="12" viewBox="0 0 12 12"><path d="M1 1 L11 11 M11 1 L1 11" stroke="#333" stroke-width="1.4"/></svg>
<svg style="left:26.0px;top:41.0px" width="20" height="20" viewBox="0 0 20 20"><path d="M3 8 L8 5 L8 17 L3 19 Z" fill="#e9e9e9" stroke="#c3c3c3" stroke-width="1.1" stroke-linejoin="round"/><path d="M8 5 L14 3 L18 6 L18 17 L13 19 L8 17 Z" fill="#e9e9e9" stroke="#c3c3c3" stroke-width="1.1" stroke-linejoin="round"/><path d="M13 6 L18 6 M13 6 V19" fill="none" stroke="#c3c3c3" stroke-width="1.1"/><path d="M3 8 L13 6" stroke="#c3c3c3" fill="none"/></svg>
<div class="t" style="left:36.5px;top:62.8px;width:0;font-size:11.40px;color:#aaaaaa;font-weight:normal;"><div style="position:absolute;left:-100px;width:200px;text-align:center">Extruded</div></div>
<div class="t" style="left:36.5px;top:75.9px;width:0;font-size:11.40px;color:#aaaaaa;font-weight:normal;"><div style="position:absolute;left:-100px;width:200px;text-align:center">Boss/Base</div></div>
<svg style="left:88.0px;top:41.0px" width="20" height="20" viewBox="0 0 20 20"><path d="M10 2 C16 2 19 7 17 12 C15 17 8 19 4 16 L8 13 C11 15 14 12 13 9 L6 10 C5 6 6 3 10 2 Z" fill="#e9e9e9" stroke="#c3c3c3" stroke-width="1.1" stroke-linejoin="round"/></svg>
<div class="t" style="left:97.0px;top:62.8px;width:0;font-size:11.40px;color:#aaaaaa;font-weight:normal;"><div style="position:absolute;left:-100px;width:200px;text-align:center">Revolved</div></div>
<div class="t" style="left:97.0px;top:75.9px;width:0;font-size:11.40px;color:#aaaaaa;font-weight:normal;"><div style="position:absolute;left:-100px;width:200px;text-align:center">Boss/Base</div></div>
<svg style="left:129.0px;top:40.0px" width="20" height="20" viewBox="0 0 20 20"><path d="M2 17 C4 19 7 18 8 15 L11 6 C12 3 15 2 17 4 C19 6 17 9 15 8" fill="none" stroke="#c8c8c8" stroke-width="3.5" stroke-linecap="round"/></svg>
<div class="t" style="left:156.0px;top:43.8px;font-size:11.40px;color:#aaaaaa;font-weight:normal;font-style:normal;">Swept Boss/Base</div>
<svg style="left:131.0px;top:66.0px" width="18" height="20" viewBox="0 0 18 20"><path d="M6 2 H12 L12 8 L16 16 L10 19 L3 16 L6 8 Z" fill="#e9e9e9" stroke="#c3c3c3" stroke-width="1.1" stroke-linejoin="round"/></svg>
<div class="t" style="left:156.0px;top:69.6px;font-size:11.40px;color:#aaaaaa;font-weight:normal;font-style:normal;">Lofted Boss/Base</div>
<svg style="left:129.0px;top:92.0px" width="20" height="20" viewBox="0 0 20 20"><path d="M2 9 L10 5 L18 8 L18 14 L10 18 L2 15 Z" fill="#e9e9e9" stroke="#c3c3c3" stroke-width="1.1" stroke-linejoin="round"/><path d="M2 9 L10 12 L18 8 M10 12 V18" fill="none" stroke="#c3c3c3" stroke-width="1.1"/><path d="M7 7 C9 9 11 9 13 6" fill="none" stroke="#c3c3c3"/></svg>
<div class="t" style="left:156.0px;top:96.1px;font-size:11.40px;color:#aaaaaa;font-weight:normal;font-style:normal;">Boundary Boss/Base</div>
<div class="a" style="left:270.5px;top:37.0px;width:1.0px;height:78.0px;background:#d0d0d0"></div>
<svg style="left:291.0px;top:41.0px" width="20" height="20" viewBox="0 0 20 20"><rect x="3" y="3" width="14" height="15" rx="2" fill="#e9e9e9" stroke="#c3c3c3" stroke-width="1.1" stroke-linejoin="round"/><rect x="7" y="7" width="7" height="8" fill="#f5f5f5" stroke="#c3c3c3"/><path d="M11 8 V13" stroke="#c8c8c8" stroke-width="1.5"/></svg>
<div class="t" style="left:300.5px;top:62.8px;width:0;font-size:11.40px;color:#aaaaaa;font-weight:normal;"><div style="position:absolute;left:-100px;width:200px;text-align:center">Extruded</div></div>
<div class="t" style="left:300.5px;top:75.9px;width:0;font-size:11.40px;color:#aaaaaa;font-weight:normal;"><div style="position:absolute;left:-100px;width:200px;text-align:center">Cut</div></div>
<svg style="left:342.0px;top:40.0px" width="20" height="20" viewBox="0 0 20 20"><path d="M3 7 L10 4 L17 7 V16 L10 19 L3 16 Z" fill="#e9e9e9" stroke="#c3c3c3" stroke-width="1.1" stroke-linejoin="round"/><circle cx="10" cy="12" r="3.5" fill="none" stroke="#c3c3c3" stroke-width="1.5"/><path d="M13 3 L18 8" stroke="#bbb" stroke-width="2"/><path d="M12 1 L13 2 M17 1 L16 3" stroke="#c8c8c8"/></svg>
<div class="t" style="left:352.0px;top:62.8px;width:0;font-size:11.40px;color:#aaaaaa;font-weight:normal;"><div style="position:absolute;left:-100px;width:200px;text-align:center">Hole</div></div>
<div class="t" style="left:352.0px;top:75.9px;width:0;font-size:11.40px;color:#aaaaaa;font-weight:normal;"><div style="position:absolute;left:-100px;width:200px;text-align:center">Wizard</div></div>
<svg style="left:348.0px;top:102.5px" width="6" height="4" viewBox="0 0 6 4"><path d="M0 0h6l-3 3.5z" fill="#8a8a8a"/></svg>
<svg style="left:393.0px;top:41.0px" width="20" height="20" viewBox="0 0 20 20"><path d="M3 6 C3 2 17 2 17 6 V17 L13 18 L13 9 C13 7 7 7 7 9 L7 18 L3 17 Z" fill="#e9e9e9" stroke="#c3c3c3" stroke-width="1.1" stroke-linejoin="round"/></svg>
<div class="t" style="left:403.4px;top:62.8px;width:0;font-size:11.40px;color:#aaaaaa;font-weight:normal;"><div style="position:absolute;left:-100px;width:200px;text-align:center">Revolved</div></div>
<div class="t" style="left:403.4px;top:75.9px;width:0;font-size:11.40px;color:#aaaaaa;font-weight:normal;"><div style="position:absolute;left:-100px;width:200px;text-align:center">Cut</div></div>
<svg style="left:434.0px;top:40.0px" width="20" height="20" viewBox="0 0 20 20"><path d="M3 5 L12 2 C16 2 17 6 17 9 L17 14 C15 13 13 14 13 16 L6 18 L3 17 Z" fill="#e9e9e9" stroke="#c3c3c3" stroke-width="1.1" stroke-linejoin="round"/></svg>
<div class="t" style="left:460.6px;top:44.3px;font-size:11.40px;color:#aaaaaa;font-weight:normal;font-style:normal;">Swept Cut</div>
<svg style="left:434.0px;top:67.0px" width="20" height="20" viewBox="0 0 20 20"><path d="M3 5 L10 2 L17 5 V15 L10 19 L3 16 Z" fill="#e9e9e9" stroke="#c3c3c3" stroke-width="1.1" stroke-linejoin="round"/><path d="M7 6 V16 M10 5 V15 M13 6 V15" fill="none" stroke="#c3c3c3"/></svg>
<div class="t" style="left:460.6px;top:70.5px;font-size:11.40px;color:#aaaaaa;font-weight:normal;font-style:normal;">Lofted Cut</div>
<svg style="left:434.0px;top:93.0px" width="20" height="20" viewBox="0 0 20 20"><path d="M2 9 L10 5 L18 8 L18 14 L10 18 L2 15 Z" fill="#e9e9e9" stroke="#c3c3c3" stroke-width="1.1" stroke-linejoin="round"/><path d="M2 9 L10 12 L18 8 M10 12 V18" fill="none" stroke="#c3c3c3" stroke-width="1.1"/><path d="M7 7 C9 10 12 10 14 6" fill="none" stroke="#c3c3c3"/></svg>
<div class="t" style="left:460.6px;top:96.3px;font-size:11.40px;color:#aaaaaa;font-weight:normal;font-style:normal;">Boundary Cut</div>
<div class="a" style="left:542.5px;top:37.0px;width:1.0px;height:78.0px;background:#d0d0d0"></div>
<svg style="left:551.0px;top:41.0px" width="20" height="20" viewBox="0 0 20 20"><path d="M3 7 L10 3 L17 6 L17 15 L10 19 L3 16 Z" fill="#e9e9e9" stroke="#c3c3c3" stroke-width="1.1" stroke-linejoin="round"/><path d="M3 7 L10 10 L17 6 M10 10 V19" fill="none" stroke="#c3c3c3"/><path d="M10 3 C14 4 15 6 14 8" fill="none" stroke="#c3c3c3"/></svg>
<div class="t" style="left:561.3px;top:62.8px;width:0;font-size:11.40px;color:#aaaaaa;font-weight:normal;"><div style="position:absolute;left:-100px;width:200px;text-align:center">Fillet</div></div>
<svg style="left:558.0px;top:102.5px" width="6" height="4" viewBox="0 0 6 4"><path d="M0 0h6l-3 3.5z" fill="#8a8a8a"/></svg>
<svg style="left:593.0px;top:40.0px" width="20" height="20" viewBox="0 0 20 20"><path d="M3 3 L8 6 L3 9 Z M11 3 L16 6 L11 9 Z M3 12 L8 15 L3 18 Z M11 12 L16 15 L11 18 Z" fill="none" stroke="#c3c3c3" stroke-width="1.3"/><path d="M9 2 V19" stroke="#d0d0d0" stroke-dasharray="2 2"/></svg>
<div class="t" style="left:602.8px;top:62.8px;width:0;font-size:11.40px;color:#aaaaaa;font-weight:normal;"><div style="position:absolute;left:-100px;width:200px;text-align:center">Linear</div></div>
<div class="t" style="left:602.8px;top:75.9px;width:0;font-size:11.40px;color:#aaaaaa;font-weight:normal;"><div style="position:absolute;left:-100px;width:200px;text-align:center">Pattern</div></div>
<svg style="left:600.0px;top:102.5px" width="6" height="4" viewBox="0 0 6 4"><path d="M0 0h6l-3 3.5z" fill="#8a8a8a"/></svg>
<svg style="left:630.0px;top:40.0px" width="20" height="20" viewBox="0 0 20 20"><path d="M3 17 L6 5 L10 2 L16 3 L17 6 L12 8 L9 17 Z" fill="#e9e9e9" stroke="#c3c3c3" stroke-width="1.1" stroke-linejoin="round"/><path d="M6 5 L12 8" fill="none" stroke="#c3c3c3"/></svg>
<div class="t" style="left:655.0px;top:44.3px;font-size:11.40px;color:#aaaaaa;font-weight:normal;font-style:normal;">Rib</div>
<svg style="left:629.0px;top:67.0px" width="20" height="20" viewBox="0 0 20 20"><path d="M2 8 L8 4 L14 6 L18 14 L12 18 L2 17 Z" fill="#e9e9e9" stroke="#c3c3c3" stroke-width="1.1" stroke-linejoin="round"/><path d="M8 4 L12 18 M2 8 L12 10" fill="none" stroke="#c3c3c3"/></svg>
<div class="t" style="left:655.0px;top:70.5px;font-size:11.40px;color:#aaaaaa;font-weight:normal;font-style:normal;">Draft</div>
<svg style="left:629.0px;top:93.0px" width="20" height="20" viewBox="0 0 20 20"><path d="M3 6 L10 3 L17 6 V16 L10 19 L3 16 Z" fill="#e9e9e9" stroke="#c3c3c3" stroke-width="1.1" stroke-linejoin="round"/><path d="M6 7 L10 6 L14 8 V15 L10 17 L6 15 Z" fill="none" stroke="#c3c3c3"/><path d="M10 6 L13 16" stroke="#aaa" stroke-width="1.5"/></svg>
<div class="t" style="left:655.0px;top:96.3px;font-size:11.40px;color:#aaaaaa;font-weight:normal;font-style:normal;">Shell</div>
<svg style="left:694.0px;top:40.0px" width="20" height="20" viewBox="0 0 20 20"><path d="M3 5 C3 2 17 2 17 5 V15 C17 18 3 18 3 15 Z" fill="#e9e9e9" stroke="#c3c3c3" stroke-width="1.1" stroke-linejoin="round"/><rect x="6" y="8" width="8" height="6" fill="none" stroke="#c3c3c3"/></svg>
<div class="t" style="left:719.7px;top:44.3px;font-size:11.40px;color:#aaaaaa;font-weight:normal;font-style:normal;">Wrap</div>
<svg style="left:694.0px;top:66.0px" width="20" height="20" viewBox="0 0 20 20"><path d="M2 16 L2 8 L8 4 L16 6 L16 12 L10 18 Z" fill="#e9e9e9" stroke="#c3c3c3" stroke-width="1.1" stroke-linejoin="round"/><path d="M9 6 L16 4 L19 8 L12 11 Z" fill="#e9e9e9" stroke="#c3c3c3" stroke-width="1.1" stroke-linejoin="round"/></svg>
<div class="t" style="left:719.7px;top:70.5px;font-size:11.40px;color:#aaaaaa;font-weight:normal;font-style:normal;">Intersect</div>
<svg style="left:694.0px;top:93.0px" width="20" height="20" viewBox="0 0 20 20"><path d="M2 4 H6 V17 H2 Z M14 4 H18 V17 H14 Z" fill="#e9e9e9" stroke="#c3c3c3" stroke-width="1.1" stroke-linejoin="round"/><path d="M10 2 V19" stroke="#bbb" stroke-dasharray="2 1.5"/><path d="M6 10 H9 M11 10 H14" stroke="#c3c3c3" stroke-width="1.5"/></svg>
<div class="t" style="left:719.7px;top:96.3px;font-size:11.40px;color:#aaaaaa;font-weight:normal;font-style:normal;">Mirror</div>
<div class="a" style="left:775.5px;top:37.0px;width:1.0px;height:78.0px;background:#d0d0d0"></div>
<svg style="left:798.0px;top:40.0px" width="20" height="20" viewBox="0 0 20 20"><circle cx="5" cy="4" r="2.5" fill="#d5d5d5"/><path d="M8 7 L16 5 L16 17 L8 19 Z" fill="#e9e9e9" stroke="#c3c3c3" stroke-width="1.1" stroke-linejoin="round"/><path d="M12 2 V20" stroke="#c3c3c3" stroke-width="1.2"/></svg>
<div class="t" style="left:808.0px;top:62.8px;width:0;font-size:11.40px;color:#aaaaaa;font-weight:normal;"><div style="position:absolute;left:-100px;width:200px;text-align:center">Reference</div></div>
<div class="t" style="left:808.0px;top:75.9px;width:0;font-size:11.40px;color:#aaaaaa;font-weight:normal;"><div style="position:absolute;left:-100px;width:200px;text-align:center">Geometry</div></div>
<svg style="left:805.0px;top:102.5px" width="6" height="4" viewBox="0 0 6 4"><path d="M0 0h6l-3 3.5z" fill="#8a8a8a"/></svg>
<svg style="left:851.0px;top:40.0px" width="20" height="20" viewBox="0 0 20 20"><path d="M4 2 C2 6 6 9 9 11 C13 14 9 18 7 19 M16 2 C18 6 14 9 11 11" fill="none" stroke="#c8c8c8" stroke-width="1.5"/></svg>
<div class="t" style="left:861.3px;top:62.8px;width:0;font-size:11.40px;color:#aaaaaa;font-weight:normal;"><div style="position:absolute;left:-100px;width:200px;text-align:center">Curves</div></div>
<svg style="left:858.0px;top:102.5px" width="6" height="4" viewBox="0 0 6 4"><path d="M0 0h6l-3 3.5z" fill="#8a8a8a"/></svg>
<div class="a" style="left:885.2px;top:37.0px;width:1.0px;height:78.0px;background:#d0d0d0"></div>
<svg style="left:906.0px;top:41.0px" width="20" height="20" viewBox="0 0 20 20"><path d="M3 5 L17 1 L19 6 L5 10 Z" fill="#f4d23c" stroke="#555" stroke-width="0.8"/><path d="M6 4 L6.5 6 M9 3 L9.5 5 M12 2 L12.5 4 M15 1.5 L15.5 3.5" stroke="#555" stroke-width="0.8"/><path d="M4 12 L14 17" stroke="#2a6fb0" stroke-width="2.4"/><path d="M12 13 L18 18 L11 19 Z" fill="#2a6fb0"/></svg>
<div class="t" style="left:916.6px;top:62.8px;width:0;font-size:11.40px;color:#1a1a1a;font-weight:normal;"><div style="position:absolute;left:-100px;width:200px;text-align:center">Instant3D</div></div>
<div class="a" style="left:948.2px;top:37.0px;width:1.0px;height:78.0px;background:#d0d0d0"></div>
<svg style="left:968.0px;top:41.0px" width="20" height="20" viewBox="0 0 20 20"><path d="M3 6 C3 2 17 2 17 6 V17 L13 18 L13 9 C13 7 7 7 7 9 L7 18 L3 17 Z" fill="#e9e9e9" stroke="#c3c3c3" stroke-width="1.1" stroke-linejoin="round"/></svg>
<div class="t" style="left:978.0px;top:62.8px;width:0;font-size:11.40px;color:#aaaaaa;font-weight:normal;"><div style="position:absolute;left:-100px;width:200px;text-align:center">Revolved</div></div>
<div class="t" style="left:978.0px;top:75.9px;width:0;font-size:11.40px;color:#aaaaaa;font-weight:normal;"><div style="position:absolute;left:-100px;width:200px;text-align:center">Cut</div></div>
<svg style="left:1920.0px;top:100.0px" width="12" height="8" viewBox="0 0 12 8"><path d="M1 7 L6 2 L11 7" fill="none" stroke="#333" stroke-width="1.5"/></svg>
<div class="t" style="left:8.6px;top:122.6px;font-size:12.00px;color:#2b2b33;font-weight:bold;font-style:normal;letter-spacing:-0.35px">Features</div>
<div class="a" style="left:64.3px;top:117.5px;width:56.5px;height:23.0px;background:#dcdcdc;border:1px solid #a9a9a9;border-bottom:none"></div>
<div class="a" style="left:120.5px;top:117.5px;width:61.0px;height:23.0px;background:#dcdcdc;border:1px solid #a9a9a9;border-bottom:none"></div>
<div class="t" style="left:75.0px;top:123.1px;font-size:11.40px;color:#2b2b33;font-weight:normal;font-style:normal;">Sketch</div>
<div class="t" style="left:129.3px;top:123.1px;font-size:11.50px;color:#2b2b33;font-weight:normal;font-style:normal;">Evaluate</div>
<div class="a" style="left:0.0px;top:140.0px;width:243.0px;height:2.0px;background:#8e8e8e"></div>
<div class="a" style="left:0.0px;top:144.5px;width:243.0px;height:1.0px;background:#d2d2d2"></div>
<svg style="left:118.0px;top:149.5px" width="7" height="7" viewBox="0 0 7 7"><circle cx="3.5" cy="3.5" r="2.6" fill="#e6e6e6" stroke="#9a9a9a" stroke-width="1.1"/></svg>
<div class="a" style="left:0.0px;top:160.0px;width:243.0px;height:1.0px;background:#cdcdcd"></div>
<div class="a" style="left:2.0px;top:165.0px;width:39.5px;height:26.0px;background:#d5d5d5;border:1px solid #a4a4a4"></div>
<div class="a" style="left:41.5px;top:165.0px;width:40.9px;height:26.0px;background:#f7f7f7;border:1px solid #a4a4a4;border-bottom:none"></div>
<div class="a" style="left:82.4px;top:165.0px;width:40.2px;height:26.0px;background:#d5d5d5;border:1px solid #a4a4a4"></div>
<div class="a" style="left:122.6px;top:165.0px;width:40.8px;height:26.0px;background:#d5d5d5;border:1px solid #a4a4a4"></div>
<div class="a" style="left:163.4px;top:165.0px;width:40.5px;height:26.0px;background:#d5d5d5;border:1px solid #a4a4a4"></div>
<div class="a" style="left:0.0px;top:190.0px;width:41.5px;height:1.0px;background:#a4a4a4"></div>
<div class="a" style="left:82.4px;top:190.0px;width:161.0px;height:1.0px;background:#a4a4a4"></div>
<svg style="left:10.0px;top:165.0px" width="24" height="24" viewBox="0 0 24 24"><path d="M4.3 9.3 L7.5 5.6 L12.5 4 L16.5 5.6 V10.5 L20.5 12.2 V18.6 L15.5 21.3 L4 14 Z" fill="#f6d321" stroke="#4a3a00" stroke-width="1.3" stroke-linejoin="round"/><path d="M7.5 5.6 L11.8 7.4 L16.5 5.6 M11.8 7.4 V11.4 L15.5 13.7 L20.5 12.2 M15.5 13.7 V21.3" fill="none" stroke="#5a4600" stroke-width="1"/><path d="M8.5 5.8 L12.5 4.6 L15.5 5.8 L11.8 7 Z M12.5 11.3 L16.5 10.8 L19.5 12.2 L15.5 13.2 Z" fill="#fff6a0"/><path d="M16 14.3 L20 12.8 V18.3 L16 20.5 Z M12.3 8 L16 6.3 V10.5 L12.3 11 Z" fill="#ffec50"/></svg>
<svg style="left:53.0px;top:169.0px" width="18" height="18" viewBox="0 0 18 18"><rect x="1" y="1" width="16" height="16" rx="1" fill="#fff" stroke="#1f5f8f" stroke-width="1.6"/><rect x="1" y="1" width="16" height="3" fill="#2f7fbf"/><path d="M3.5 7.5 h3 M3.5 10.5 h3 M3.5 13.5 h3" stroke="#2f7fbf" stroke-width="2"/><path d="M8 7.5 H15 M8 10.5 H15 M8 13.5 H15" stroke="#333" stroke-width="1.2"/></svg>
<svg style="left:94.0px;top:168.0px" width="18" height="20" viewBox="0 0 18 20"><path d="M3 2 V18 M3 6 H8 M3 15 H8" fill="none" stroke="#333" stroke-width="1.5"/><rect x="8" y="3" width="6" height="6" rx="1" fill="#fff" stroke="#333" stroke-width="1.3"/><rect x="9" y="12" width="6" height="6" rx="1" fill="#fff" stroke="#333" stroke-width="1.3"/><path d="M4.5 1.5 H7" stroke="#333" stroke-width="1.5"/></svg>
<svg style="left:134.0px;top:168.0px" width="19" height="19" viewBox="0 0 19 19"><circle cx="9.5" cy="9.5" r="6" fill="none" stroke="#111" stroke-width="1.8"/><path d="M9.5 0.5 V18.5 M0.5 9.5 H18.5" stroke="#111" stroke-width="1.8"/></svg>
<svg style="left:174.0px;top:168.0px" width="19" height="19" viewBox="0 0 19 19"><circle cx="9.5" cy="9.5" r="8.5" fill="#2a9d3a"/><path d="M9.5 9.5 L9.5 1 A8.5 8.5 0 0 0 1.2 11.5 Z" fill="#e03a2a"/><path d="M9.5 9.5 L18 9.5 A8.5 8.5 0 0 1 6 17.5 Z" fill="#f2c400"/><path d="M9.5 9.5 L9.5 1 A8.5 8.5 0 0 1 18 9.5 Z" fill="#3a6fd0"/><path d="M11 2 C15 3 17 7 15.5 11" fill="none" stroke="#111" stroke-width="2.2"/><circle cx="9.5" cy="9.5" r="8.5" fill="none" stroke="#333" stroke-width="0.8"/></svg>
<svg style="left:8.0px;top:197.0px" width="22" height="20" viewBox="0 0 22 20"><path d="M2 4 C2 1 14 1 14 4 V16 C14 19 2 19 2 16 Z" fill="#f4f4f4" stroke="#555" stroke-width="1.1"/><ellipse cx="8" cy="4" rx="6" ry="2" fill="#fff" stroke="#555" stroke-width="1"/><rect x="4" y="8" width="7" height="6" fill="#8fc3e8" stroke="#4a88b8" stroke-width="0.8"/><path d="M9 17 L19 6 L21 8 L11 19 L8 20 Z" fill="#f3c21a" stroke="#6a4a00" stroke-width="0.9"/><path d="M19 6 L21 8" stroke="#c0392b" stroke-width="2"/></svg>
<div class="t" style="left:34.6px;top:201.5px;font-size:12.40px;color:#1f1f2a;font-weight:bold;font-style:normal;letter-spacing:-0.5px">Decals</div>
<svg style="left:215.0px;top:199.0px" width="16" height="16" viewBox="0 0 16 16"><circle cx="8" cy="8" r="6.8" fill="#fff" stroke="#3a5a7a" stroke-width="1.6"/><path d="M5.6 6.3 C5.6 3.6 10.4 3.6 10.4 6.3 C10.4 8 8 8.2 8 10" fill="none" stroke="#3a5a7a" stroke-width="1.6"/><circle cx="8" cy="12" r="1" fill="#3a5a7a"/></svg>
<svg style="left:7.0px;top:228.0px" width="16" height="13" viewBox="0 0 16 13"><path d="M1.5 6.5 L5.5 11 L14.5 1.5" fill="none" stroke="#2f9a2f" stroke-width="2.4"/></svg>
<svg style="left:37.0px;top:229.0px" width="12" height="12" viewBox="0 0 12 12"><path d="M1 1 L11 11 M11 1 L1 11" stroke="#d42424" stroke-width="2"/></svg>
<svg style="left:61.0px;top:229.0px" width="16" height="12" viewBox="0 0 16 12"><path d="M1 6 H8" stroke="#8a8a8a" stroke-width="1.5"/><path d="M7 2 V10 L9 8 H13 L15 10 V2 L13 4 H9 Z" fill="#8a8a8a"/></svg>
<div class="a" style="left:2.0px;top:258.0px;width:240.0px;height:25.0px;background:#d6d6d6;border-top:1px solid #8f8f8f;border-bottom:2px solid #8a8a8a"></div>
<svg style="left:9.0px;top:263.0px" width="18" height="15" viewBox="0 0 18 15"><rect x="0.75" y="0.75" width="16.5" height="13.5" fill="#f4f4f4" stroke="#222" stroke-width="1.2"/><path d="M1 10 L5 6 L9 9 L12 7 L17 10 V14 H1 Z" fill="#555"/><circle cx="13" cy="4" r="1.6" fill="none" stroke="#333"/></svg>
<div class="t" style="left:34.6px;top:264.2px;font-size:12.00px;color:#555;font-weight:normal;font-style:normal;">Image</div>
<div class="a" style="left:113.5px;top:283.5px;width:128.0px;height:24.0px;background:#d6d6d6;border:1px solid #8f8f8f"></div>
<svg style="left:120.0px;top:288.0px" width="6" height="8" viewBox="0 0 6 8"><path d="M0 0 L5 4 L0 8 Z" fill="#222"/></svg>
<svg style="left:9.0px;top:287.0px" width="20" height="18" viewBox="0 0 20 18"><path d="M7 2 L15 9 L9 15 L2 8 Z" fill="#fff" stroke="#1b4f7a" stroke-width="1.8" stroke-linejoin="round"/><path d="M10 16 H18 L16 11" fill="none" stroke="#4aa3d8" stroke-width="1.3"/></svg>
<div class="t" style="left:34.6px;top:289.3px;font-size:12.40px;color:#555;font-weight:normal;font-style:normal;">Mapping</div>
<div class="a" style="left:0.0px;top:307.0px;width:2.0px;height:1.0px;background:#777"></div>
<div class="a" style="left:5.0px;top:324.0px;width:232.0px;height:1.0px;background:#cccccc"></div>
<div class="t" style="left:9.6px;top:334.4px;font-size:11.00px;color:#3a3a48;font-weight:bold;font-style:normal;">Message</div>
<svg style="left:223.0px;top:334.0px" width="12" height="8" viewBox="0 0 12 8"><path d="M1 7 L6 2 L11 7" fill="none" stroke="#444" stroke-width="1.6"/></svg>
<div class="a" style="left:5.0px;top:352.3px;width:232.5px;height:101.0px;background:#fdf57a"></div>
<div class="t" style="left:9.5px;top:353.9px;font-size:11.45px;color:#1d1d1d;font-weight:normal;font-style:normal;">Reference required:</div>
<div class="t" style="left:9.5px;top:379.7px;font-size:11.45px;color:#1d1d1d;font-weight:normal;font-style:normal;">- Select reference(s) onto which to apply</div>
<div class="t" style="left:9.5px;top:393.3px;font-size:11.45px;color:#1d1d1d;font-weight:normal;font-style:normal;">the decal.</div>
<div class="t" style="left:9.5px;top:419.6px;font-size:11.45px;color:#1d1d1d;font-weight:normal;font-style:normal;">- Alternatively, make changes to the decal</div>
<div class="t" style="left:9.5px;top:432.8px;font-size:11.45px;color:#1d1d1d;font-weight:normal;font-style:normal;">and then save it by pressing "Save Decal...".</div>
<div class="a" style="left:5.0px;top:457.5px;width:232.0px;height:1.0px;background:#cccccc"></div>
<div class="t" style="left:9.0px;top:467.5px;font-size:10.90px;color:#3a3a48;font-weight:bold;font-style:normal;">Selected Geometry</div>
<svg style="left:223.0px;top:467.0px" width="12" height="8" viewBox="0 0 12 8"><path d="M1 7 L6 2 L11 7" fill="none" stroke="#444" stroke-width="1.6"/></svg>
<div class="a" style="left:35.5px;top:486.3px;width:184.0px;height:97.5px;background:#cfe3f6;border:2px solid #64aee4"></div>
<div class="a" style="left:9.4px;top:486.5px;width:23.5px;height:24.4px;background:#f8f8f8;border:1px solid #a4a4a4"></div>
<div class="a" style="left:9.4px;top:510.8px;width:23.5px;height:24.4px;background:#f8f8f8;border:1px solid #a4a4a4"></div>
<div class="a" style="left:9.4px;top:535.2px;width:23.5px;height:24.4px;background:#b9b9b9;border:1px solid #a4a4a4"></div>
<div class="a" style="left:9.4px;top:559.6px;width:23.5px;height:24.4px;background:#f8f8f8;border:1px solid #a4a4a4"></div>
<svg style="left:11.5px;top:489.0px" width="19" height="19" viewBox="0 0 19 19"><path d="M3 6 L9 3 L16 5 L16 14 L10 17 L3 15 Z" fill="#fff" stroke="#222" stroke-width="1.1" stroke-linejoin="round"/><path d="M10 8 L16 5 V14 L10 17 Z" fill="#6cb6dd" stroke="#1c3c55" stroke-width="1"/><path d="M3 6 L10 8" stroke="#222" stroke-width="1.1"/></svg>
<svg style="left:11.5px;top:513.5px" width="19" height="19" viewBox="0 0 19 19"><path d="M2 9 C5 4 8 3 11 6 C13 8 15 6 17 3 L17 8 C15 12 12 12 10 10 C8 8 6 10 5 15 Z" fill="#5fb0dc" stroke="#1c3c55" stroke-width="1.1" stroke-linejoin="round"/></svg>
<svg style="left:11.5px;top:538.0px" width="19" height="19" viewBox="0 0 19 19"><path d="M3 6 L9 3 L16 5 L16 14 L10 17 L3 15 Z" fill="#6cb6dd" stroke="#1c3c55" stroke-width="1.1" stroke-linejoin="round"/><path d="M3 6 L10 8 L16 5 M10 8 V17" fill="none" stroke="#1c3c55" stroke-width="1.1"/></svg>
<svg style="left:11.5px;top:562.5px" width="19" height="19" viewBox="0 0 19 19"><path d="M3 8 C3 3 8 2 11 3 L11 6 C8 5 6 7 6 10 V15 L3 14 Z" fill="#fff" stroke="#222" stroke-width="1"/><path d="M7 9 L12 7 L17 8 V15 L12 17 L7 15 Z" fill="#6cb6dd" stroke="#1c3c55" stroke-width="1.1"/><path d="M7 9 L12 11 L17 8 M12 11 V17" fill="none" stroke="#1c3c55"/></svg>
<svg style="left:124.0px;top:585.0px" width="7" height="7" viewBox="0 0 7 7"><circle cx="3.5" cy="3.5" r="2.6" fill="#e6e6e6" stroke="#9a9a9a" stroke-width="1.1"/></svg>
<div class="a" style="left:243.0px;top:548.0px;width:10.0px;height:39.0px;background:#f7f7f7;border:1px solid #a8a8a8;border-left:none"></div>
<svg style="left:245.5px;top:563.5px" width="7" height="7" viewBox="0 0 7 7"><circle cx="3.5" cy="3.5" r="2.6" fill="#e6e6e6" stroke="#9a9a9a" stroke-width="1.1"/></svg>
<div class="a" style="left:117.0px;top:1013.0px;width:10.0px;height:2.0px;background:#d0d0d0"></div>
<svg style="left:249.0px;top:151.0px" width="7" height="8" viewBox="0 0 7 8"><path d="M0.5 0 L6 4 L0.5 8 Z" fill="#222"/></svg>
<svg style="left:266.0px;top:143.0px" width="24" height="24" viewBox="0 0 24 24"><path d="M4.3 9.3 L7.5 5.6 L12.5 4 L16.5 5.6 V10.5 L20.5 12.2 V18.6 L15.5 21.3 L4 14 Z" fill="#f6d321" stroke="#4a3a00" stroke-width="1.3" stroke-linejoin="round"/><path d="M7.5 5.6 L11.8 7.4 L16.5 5.6 M11.8 7.4 V11.4 L15.5 13.7 L20.5 12.2 M15.5 13.7 V21.3" fill="none" stroke="#5a4600" stroke-width="1"/><path d="M8.5 5.8 L12.5 4.6 L15.5 5.8 L11.8 7 Z M12.5 11.3 L16.5 10.8 L19.5 12.2 L15.5 13.2 Z" fill="#fff6a0"/><path d="M16 14.3 L20 12.8 V18.3 L16 20.5 Z M12.3 8 L16 6.3 V10.5 L12.3 11 Z" fill="#ffec50"/></svg>
<div class="t" style="left:291.9px;top:150.1px;font-size:11.80px;color:#222;font-weight:normal;font-style:normal;">Golf Ball (Default) &lt;&lt;Defa...</div>
<svg style="left:914.0px;top:123.0px" width="20" height="20" viewBox="0 0 20 20"><circle cx="11.5" cy="8" r="6.5" fill="#fff" stroke="#555" stroke-width="1.2"/><path d="M11.5 4 l-1.5 1.5 h3 z M11.5 12 l-1.5 -1.5 h3 z M7.5 8 l1.5 -1.5 v3 z M15.5 8 l-1.5 -1.5 v3 z" fill="#555"/><path d="M7 12.5 L2 17.5" stroke="#5a9cc8" stroke-width="2.6" stroke-linecap="round"/></svg>
<svg style="left:940.0px;top:123.0px" width="20" height="20" viewBox="0 0 20 20"><circle cx="10" cy="8.5" r="6" fill="#eef2f6" stroke="#666" stroke-width="1.2"/><path d="M6 13 L2 17.5" stroke="#5a9cc8" stroke-width="2.6" stroke-linecap="round"/><path d="M5 1 H18 V14" fill="none" stroke="#444" stroke-width="1.2" stroke-dasharray="2.5 1.5"/></svg>
<svg style="left:966.0px;top:123.0px" width="20" height="20" viewBox="0 0 20 20"><path d="M2 14 L13 3 C15 1 18 4 16 6 L5 17 Z" fill="#f0f0f0" stroke="#666" stroke-width="1.1"/><path d="M6 10 L10 14" stroke="#888"/><path d="M11 15 H19 M11 15 L14 12 M11 15 L14 18" fill="none" stroke="#3a8ac0" stroke-width="2"/></svg>
<svg style="left:993.0px;top:123.0px" width="20" height="20" viewBox="0 0 20 20"><path d="M2 5 C2 2 10 2 10 5 V16 C10 19 2 19 2 16 Z" fill="#ededed" stroke="#d0d0d0"/><path d="M10 5 C10 2 18 2 18 5 V16 L10 16" fill="#e5e5e5" stroke="#d0d0d0"/></svg>
<svg style="left:1018.0px;top:123.0px" width="20" height="20" viewBox="0 0 20 20"><path d="M2 15 L12 5 C14 3 17 6 15 8 L5 18 Z" fill="#f0f0f0" stroke="#666" stroke-width="1.1"/><path d="M5 6 L10 2 L9 6 L13 4" fill="none" stroke="#f2b705" stroke-width="2"/><path d="M11 19 L14.5 10 L18 19 M12.5 15.5 H16.5" fill="none" stroke="#3a8ac0" stroke-width="1.4"/></svg>
<svg style="left:1045.0px;top:123.0px" width="20" height="20" viewBox="0 0 20 20"><path d="M2 7 L7 2 H18 V13 L13 18 H2 Z" fill="none" stroke="#444" stroke-width="1.2"/><rect x="2" y="7" width="11" height="11" fill="#8cc8ea" stroke="#222" stroke-width="1.2"/><path d="M13 7 L18 2 M13 7 H2 M13 7 V18 M15 4 V10 M10 4.5 L12 2.5" fill="none" stroke="#444" stroke-width="1.1"/></svg>
<svg style="left:1072.0px;top:131.0px" width="6" height="4" viewBox="0 0 6 4"><path d="M0 0h6l-3 3.5z" fill="#888"/></svg>
<svg style="left:1088.0px;top:123.0px" width="18" height="20" viewBox="0 0 18 20"><path d="M2 5 L8 2 L16 4 V16 L10 19 L2 17 Z" fill="#fff" stroke="#333" stroke-width="1.1"/><path d="M2 5 L10 7 V19 L2 17 Z" fill="#5aa4d0"/><path d="M10 7 L16 4" stroke="#333"/></svg>
<svg style="left:1112.0px;top:131.0px" width="6" height="4" viewBox="0 0 6 4"><path d="M0 0h6l-3 3.5z" fill="#888"/></svg>
<svg style="left:1126.0px;top:125.0px" width="20" height="16" viewBox="0 0 20 16"><path d="M1 8 C5 2 15 2 19 8 C15 14 5 14 1 8 Z" fill="#fff" stroke="#555" stroke-width="1.2"/><circle cx="10" cy="8" r="3.5" fill="#444"/><path d="M10 1 V15" stroke="#222" stroke-width="1.5"/></svg>
<svg style="left:1152.0px;top:131.0px" width="6" height="4" viewBox="0 0 6 4"><path d="M0 0h6l-3 3.5z" fill="#888"/></svg>
<svg style="left:1167.0px;top:123.0px" width="20" height="20" viewBox="0 0 20 20"><circle cx="9" cy="8" r="7" fill="#e8e8e8"/><path d="M10 12 L16 19" stroke="#e2e2e2" stroke-width="3"/></svg>
<svg style="left:1193.0px;top:123.0px" width="20" height="20" viewBox="0 0 20 20"><circle cx="10" cy="8" r="6" fill="#e5e5e5"/><path d="M2 12 L10 17 L18 12 V19 H2 Z" fill="#e2e2e2"/></svg>
<svg style="left:1219.0px;top:131.0px" width="6" height="4" viewBox="0 0 6 4"><path d="M0 0h6l-3 3.5z" fill="#aaa"/></svg>
<svg style="left:1234.0px;top:124.0px" width="20" height="18" viewBox="0 0 20 18"><rect x="1" y="1" width="18" height="12" fill="#d6d6d6" stroke="#333" stroke-width="1.3"/><path d="M10 13 V16 M5 17 H15" stroke="#333" stroke-width="1.5"/></svg>
<svg style="left:1260.0px;top:131.0px" width="6" height="4" viewBox="0 0 6 4"><path d="M0 0h6l-3 3.5z" fill="#888"/></svg>
<svg style="left:1809.0px;top:127.0px" width="13" height="13" viewBox="0 0 13 13"><rect x="0.75" y="0.75" width="11.5" height="11.5" fill="none" stroke="#aaa" stroke-width="1.1"/><path d="M7 3.5 L4 6.5 L7 9.5 Z" fill="#aaa"/></svg>
<svg style="left:1836.0px;top:127.0px" width="13" height="13" viewBox="0 0 13 13"><rect x="0.75" y="0.75" width="11.5" height="11.5" fill="none" stroke="#aaa" stroke-width="1.1"/><path d="M6 3.5 L9 6.5 L6 9.5 Z" fill="#aaa"/></svg>
<div class="a" style="left:1863.0px;top:137.0px;width:10.0px;height:1.5px;background:#aaa"></div>
<svg style="left:1887.0px;top:126.0px" width="15" height="14" viewBox="0 0 15 14"><rect x="0.75" y="4.75" width="9" height="8.5" fill="none" stroke="#aaa" stroke-width="1.1"/><path d="M4 4.5 V0.75 H14 V9 H10" fill="none" stroke="#aaa" stroke-width="1.1"/></svg>
<svg style="left:1915.0px;top:128.0px" width="11" height="11" viewBox="0 0 11 11"><path d="M0.5 0.5 L10.5 10.5 M10.5 0.5 L0.5 10.5" stroke="#aaa" stroke-width="1.2"/></svg>
<svg style="left:1836.0px;top:154.0px" width="30" height="22" viewBox="0 0 30 22"><path d="M2 11 L10 19 L27 3" fill="none" stroke="#cfe8c8" stroke-width="5"/></svg>
<svg style="left:1882.0px;top:184.0px" width="24" height="24" viewBox="0 0 24 24"><path d="M2 2 L22 22 M22 2 L2 22" stroke="#f2c8c8" stroke-width="5"/></svg>
<div class="a" style="left:1915.0px;top:170.0px;width:26.0px;height:24.4px;background:#d2d2d2;border:1px solid #a0a0a0;border-right:none"></div>
<div class="a" style="left:1915.0px;top:194.2px;width:26.0px;height:24.4px;background:#d2d2d2;border:1px solid #a0a0a0;border-right:none"></div>
<div class="a" style="left:1915.0px;top:218.4px;width:26.0px;height:24.4px;background:#d2d2d2;border:1px solid #a0a0a0;border-right:none"></div>
<div class="a" style="left:1915.0px;top:242.6px;width:26.0px;height:24.4px;background:#d2d2d2;border:1px solid #a0a0a0;border-right:none"></div>
<div class="a" style="left:1915.0px;top:266.8px;width:26.0px;height:24.4px;background:#d2d2d2;border:1px solid #a0a0a0;border-right:none"></div>
<div class="a" style="left:1915.0px;top:291.0px;width:26.0px;height:24.4px;background:#ffffff;border:1px solid #a0a0a0;border-right:none"></div>
<div class="a" style="left:1915.0px;top:315.2px;width:26.0px;height:24.4px;background:#d2d2d2;border:1px solid #a0a0a0;border-right:none"></div>
<svg style="left:1917.0px;top:171.2px" width="22" height="22" viewBox="0 0 22 22"><circle cx="11" cy="11" r="9.5" fill="#1f5f9a" stroke="#0f3050"/><circle cx="11" cy="11" r="6" fill="none" stroke="#9fd0f0" stroke-width="0.8"/><path d="M9 8 L14 11 L9 14 Z" fill="#cfe8fa"/></svg>
<svg style="left:1917.0px;top:195.4px" width="22" height="22" viewBox="0 0 22 22"><path d="M2 11 L11 3 L20 11" fill="none" stroke="#1f5f9a" stroke-width="2.4"/><path d="M5 10 V19 H17 V10" fill="#fff" stroke="#222" stroke-width="1.3"/><rect x="9" y="13" width="4" height="6" fill="none" stroke="#222"/></svg>
<svg style="left:1917.0px;top:219.6px" width="22" height="22" viewBox="0 0 22 22"><path d="M4 6 L8 3 L18 5 V18 L14 20 L4 18 Z" fill="#fff" stroke="#222" stroke-width="1.1"/><path d="M7 5 V19 M11 4.5 V19.5 M14 5.5 V20" stroke="#222" stroke-width="1"/></svg>
<svg style="left:1917.0px;top:243.8px" width="22" height="22" viewBox="0 0 22 22"><path d="M2 5 H8 L10 7 H18 V18 H2 Z" fill="#f2f2f2" stroke="#222" stroke-width="1.1"/><path d="M2 18 L6 10 H21 L17 18 Z" fill="#fff" stroke="#222" stroke-width="1.1"/></svg>
<svg style="left:1917.0px;top:268.0px" width="22" height="22" viewBox="0 0 22 22"><rect x="2" y="3" width="18" height="16" fill="#fff" stroke="#222" stroke-width="1.1"/><rect x="4" y="5" width="10" height="4" fill="#f2c200"/><path d="M9 9 V14 H5 H13" fill="none" stroke="#f2c200" stroke-width="2.5"/><rect x="15" y="5" width="3" height="3" fill="#f2c200"/><rect x="15" y="10" width="3" height="7" fill="#ccc" stroke="#222" stroke-width="0.7"/></svg>
<svg style="left:1917.0px;top:292.2px" width="22" height="22" viewBox="0 0 22 22"><circle cx="11" cy="11" r="9" fill="#2a9d3a"/><path d="M11 11 L11 2 A9 9 0 0 0 2.2 13 Z" fill="#e03a2a"/><path d="M11 11 L20 11 A9 9 0 0 1 7 19 Z" fill="#f2c400"/><path d="M11 11 L11 2 A9 9 0 0 1 20 11 Z" fill="#3a6fd0"/><circle cx="8" cy="7" r="3" fill="#fff" fill-opacity="0.5"/></svg>
<svg style="left:1917.0px;top:316.4px" width="22" height="22" viewBox="0 0 22 22"><rect x="2" y="2" width="18" height="18" rx="1" fill="#fff" stroke="#1f4f7a" stroke-width="1.5"/><rect x="2" y="2" width="18" height="3.5" fill="#2f7fbf"/><path d="M4.5 8.5 h3 M4.5 12 h3 M4.5 15.5 h3" stroke="#2f7fbf" stroke-width="2"/><path d="M9 8.5 H17 M9 12 H17 M9 15.5 H17" stroke="#333" stroke-width="1.3"/></svg>
<svg style="left:250.0px;top:915.0px" width="70" height="70" viewBox="0 0 70 70"><path d="M35 42.5 V24" stroke="#2a7a2a" stroke-width="2.6"/><path d="M30.5 26 L35 17 L39.5 26 Q35 29 30.5 26 Z" fill="#2f8a2f"/><path d="M35 42 L54 51" stroke="#a82424" stroke-width="2.6"/><path d="M50 46 L60 53.5 L48.5 54.5 Q48 50 50 46 Z" fill="#c83030"/><path d="M35 42 L16 51" stroke="#2424a8" stroke-width="2.6"/><path d="M20 46 L10 53.5 L21.5 54.5 Q22 50 20 46 Z" fill="#3030c8"/><path d="M32 9 L35 13 L38 9 M35 13 V17" fill="none" stroke="#3a9a3a" stroke-width="0.9"/><path d="M57 52 L63 59 M63 52 L57 59" fill="none" stroke="#e04040" stroke-width="0.9"/><path d="M8 52 H13 L8 59 H13" fill="none" stroke="#3030d0" stroke-width="0.9"/></svg>
<div class="t" style="left:256.3px;top:999.7px;font-size:13.40px;color:#111;font-weight:bold;font-style:normal;letter-spacing:0.1px">*Isometric</div>
<svg style="left:953.0px;top:537.0px" width="12" height="18" viewBox="0 0 12 18"><path d="M1 1 V14 L4 11 L7 17 L9 16 L6.5 10 H11 Z" fill="#fff" stroke="#333" stroke-width="1"/></svg>
<svg style="left:967.0px;top:552.0px" width="18" height="18" viewBox="0 0 18 18"><path d="M2 5 L9 2 L16 5 V13 L9 16 L2 13 Z" fill="#5fb0dc" stroke="#1c3c55" stroke-width="1.1" stroke-linejoin="round"/><path d="M2 5 L9 8 L16 5 M9 8 V16" fill="none" stroke="#1c3c55" stroke-width="1"/><path d="M3 5.5 L9 3 L15 5.5 L9 7.5 Z" fill="#aee0f5"/></svg>
<div class="a" style="left:2.0px;top:1017.5px;width:66.0px;height:14.5px;background:#c9c9c9;border-top:2px solid #555"></div>
<div class="a" style="left:18.0px;top:1019.0px;width:1.0px;height:13.0px;background:#e0e0e0"></div>
<div class="a" style="left:34.5px;top:1019.0px;width:1.0px;height:13.0px;background:#e0e0e0"></div>
<div class="a" style="left:51.0px;top:1019.0px;width:1.0px;height:13.0px;background:#e0e0e0"></div>
<div class="a" style="left:67.5px;top:1019.0px;width:1.0px;height:13.0px;background:#e0e0e0"></div>
<svg style="left:4.0px;top:1019.0px" width="64" height="12" viewBox="0 0 64 12"><g fill="#a9a9a9"><path d="M6 2 V10 M13 2 L8 6 L13 10 Z" stroke="#a9a9a9" stroke-width="1.2"/><path d="M29 2 L24 6 L29 10 Z"/><path d="M38 2 L43 6 L38 10 Z"/><path d="M55 2 L60 6 L55 10 Z M61 2 V10" stroke="#a9a9a9" stroke-width="1.2"/></g></svg>
<div class="a" style="left:68.0px;top:1017.0px;width:57.3px;height:15.5px;background:#ffffff"></div>
<div class="t" style="left:80.4px;top:1017.3px;font-size:12.00px;color:#111;font-weight:bold;font-style:normal;">Model</div>
<div class="a" style="left:125.3px;top:1017.0px;width:68.0px;height:15.5px;background:#d4d4d4;border:1px solid #a4a4a4;border-top:none"></div>
<div class="t" style="left:136.0px;top:1018.0px;font-size:11.20px;color:#333;font-weight:normal;font-style:normal;">3D Views</div>
<div class="a" style="left:193.2px;top:1017.0px;width:109.3px;height:15.5px;background:#d4d4d4;border:1px solid #a4a4a4;border-top:none;border-left:none"></div>
<div class="t" style="left:203.6px;top:1017.3px;font-size:12.00px;color:#333;font-weight:normal;font-style:normal;">Motion Study 1</div>
<div class="t" style="left:1.0px;top:1035.9px;font-size:12.10px;color:#1e1e1e;font-weight:normal;font-style:normal;">Select entities to modify their decal</div>
<div class="t" style="left:1652.7px;top:1036.2px;font-size:12.00px;color:#1e1e1e;font-weight:normal;font-style:normal;">Editing Part</div>
<svg style="left:1743.0px;top:1034.0px" width="16" height="16" viewBox="0 0 16 16"><path d="M1 9 L5 1.5 L9 9 Z" fill="#f5c400" stroke="#333" stroke-width="0.8"/><path d="M5 4 V6.5" stroke="#111" stroke-width="1.2"/><path d="M7 8 L13 2 M10 2 H13 V5" fill="none" stroke="#222" stroke-width="1.4"/><path d="M1 14.5 h2 M5 13 v2.5 M8 11.5 v4 M11 9.5 v6 M14 8 v7.5" stroke="#2a6fb0" stroke-width="1.8"/></svg>
<div class="t" style="left:1834.0px;top:1036.2px;font-size:12.00px;color:#a2a2a2;font-weight:normal;font-style:normal;">MMGS</div>
<svg style="left:1889.0px;top:1041.0px" width="7" height="4" viewBox="0 0 7 4"><path d="M0 3.5 L3.5 0 L7 3.5 Z" fill="#777"/></svg>
<svg style="left:1921.0px;top:1034.0px" width="18" height="16" viewBox="0 0 18 16"><path d="M2 7 L9 2 L17 6 L17 10 L10 15 L2 11 Z" fill="#f2f2f2" stroke="#333" stroke-width="1.1"/><path d="M2 7 L10 11 L17 6 M10 11 V15" fill="none" stroke="#333" stroke-width="1"/><circle cx="9" cy="6" r="1.8" fill="none" stroke="#333"/></svg>
<svg style="left:0.0px;top:452.9px" width="51" height="154" viewBox="0 0 51 154"><path d="M0 0 H50.2 V153.7 H0 Z M6.8 9.1 V144.6 H41.7 V9.1 Z" fill="#fb9932" fill-rule="evenodd"/></svg>
<svg style="left:0.0px;top:0.0px" width="1" height="1" viewBox="0 0 1 1"><path d="M102.4 296.7 L168 274.3 L168 291.3 L373.6 289.4 L373.6 299.8 L168 302 L168 317.5 Z" fill="#fb9932"/></svg>
<svg style="left:0.0px;top:0.0px" width="1" height="1" viewBox="0 0 1 1"><path d="M50 527 L113.6 505 L113.6 522 L376.3 519.9 L376.3 530.2 L113.6 532.5 L113.6 548.2 Z" fill="#fb9932"/></svg>
</body></html>
